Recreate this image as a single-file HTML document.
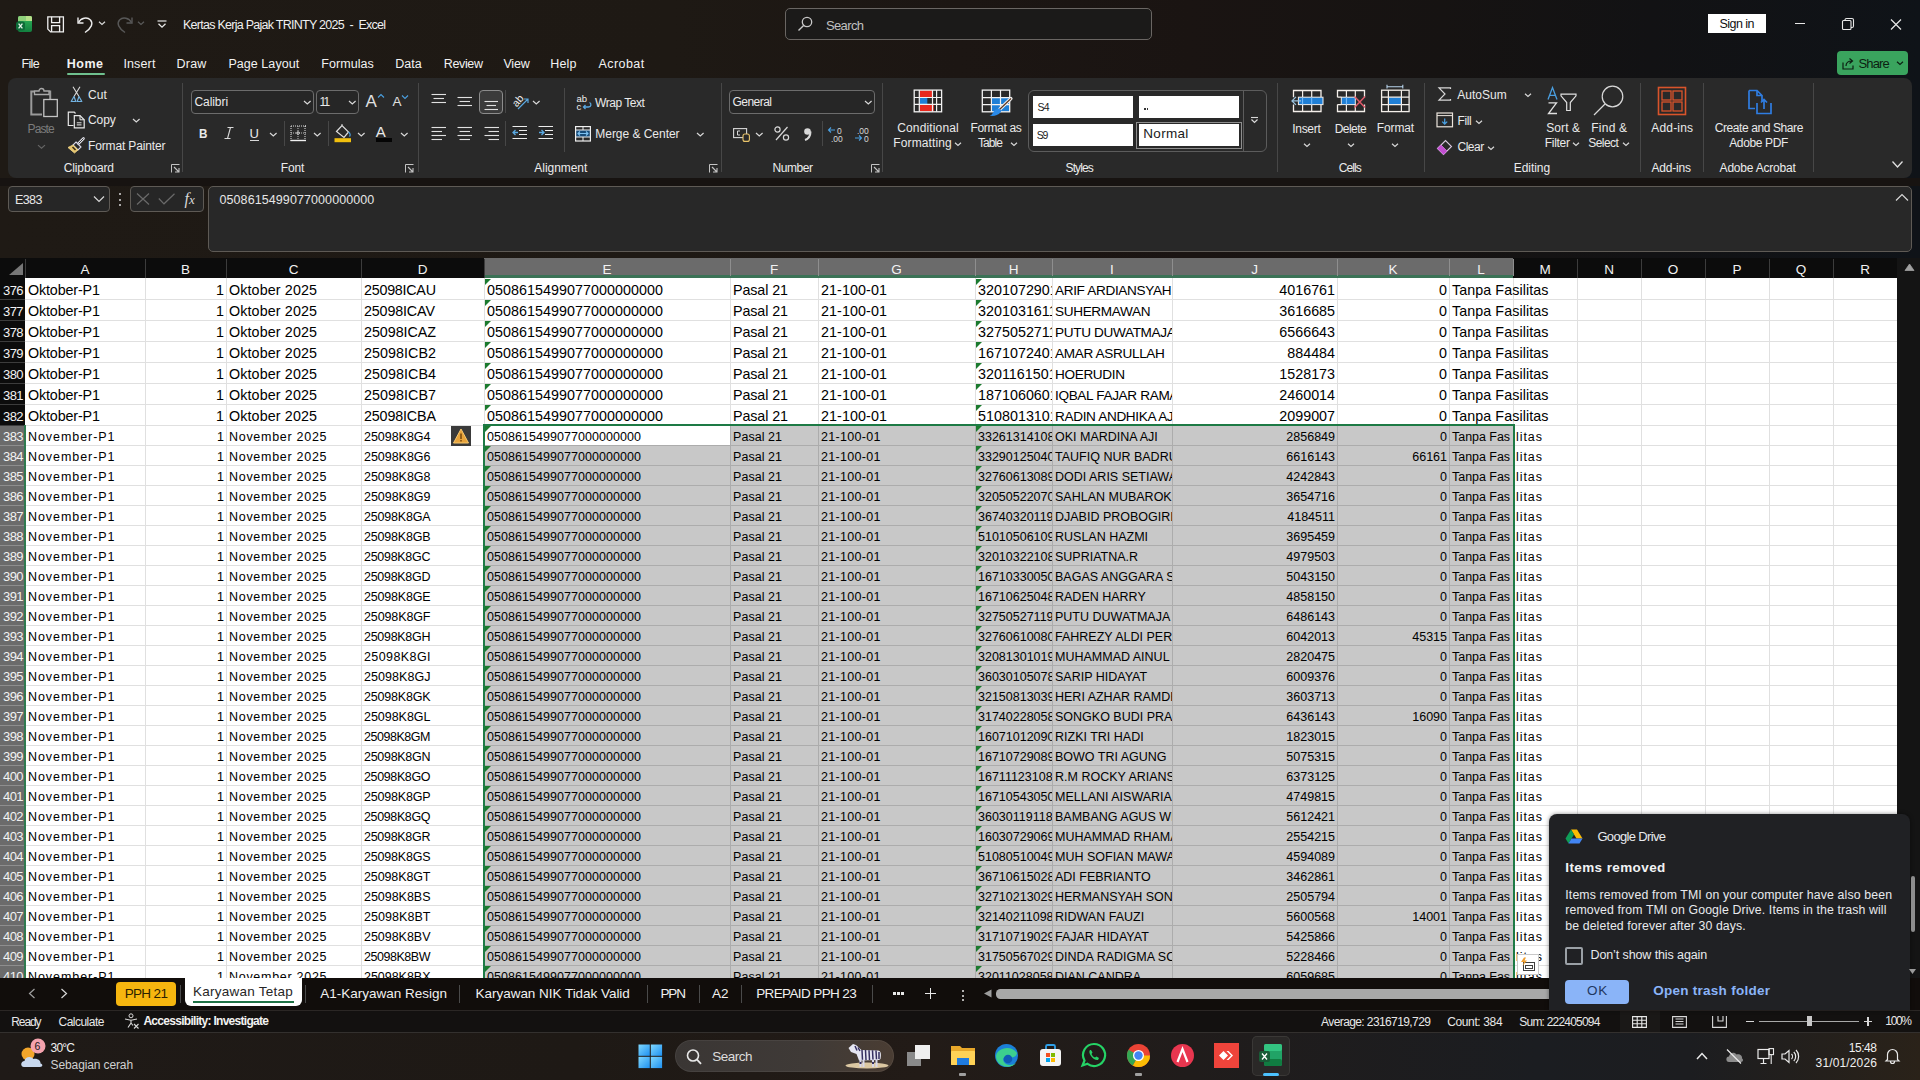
<!DOCTYPE html>
<html><head><meta charset="utf-8"><title>Excel</title><style>
html,body{margin:0;padding:0;width:1920px;height:1080px;overflow:hidden;background:#1c1715;font-family:"Liberation Sans", sans-serif;}
.r,.t,.s{position:absolute;}
.t{white-space:nowrap;}
svg.s{overflow:visible;}
</style></head><body>
<div class="r" style="left:0;top:0;width:1920px;height:258px;background:linear-gradient(90deg,#1f1a15 0%,#1e1914 35%,#1c1613 50%,#1a1412 62%,#161312 75%,#121214 86%,#0f1318 100%);"></div>
<svg class="s" style="left:16px;top:16px;" width="16" height="16" viewBox="0 0 16 16"><defs><linearGradient id="xg" x1="0" y1="0" x2="0" y2="1"><stop offset="0" stop-color="#2fb55a"/><stop offset="1" stop-color="#12803f"/></linearGradient></defs><rect x="2" y="0" width="14" height="16" rx="2" fill="url(#xg)"/><path d="M4 0 H14 A2 2 0 0 1 16 2 V5 H2 V2 A2 2 0 0 1 4 0 Z" fill="#8ed07a"/><path d="M10 0 H14 A2 2 0 0 1 16 2 V5 H10 Z" fill="#b6e08a"/><rect x="0" y="5.5" width="9" height="9" rx="2.5" fill="#0d6b38"/><path d="M2.6 7.6 L6.4 12.4 M6.4 7.6 L2.6 12.4" stroke="#e8f5ec" stroke-width="1.3"/></svg>
<svg class="s" style="left:47px;top:16px;" width="18" height="17" viewBox="0 0 18 17"><path d="M0.8 0.8 H16.4 V15.9 H3.6 L0.8 13.1 Z" fill="none" stroke="#f0f0f0" stroke-width="1.3"/><path d="M4.6 0.8 V6.6 H12.6 V0.8 M4.6 15.9 V9.6 H12.6 V15.9" fill="none" stroke="#f0f0f0" stroke-width="1.3"/></svg>
<svg class="s" style="left:76px;top:15px;" width="18" height="18" viewBox="0 0 18 18"><path d="M2 2.5 V8 H7.5" fill="none" stroke="#ececec" stroke-width="1.4"/><path d="M2.5 7.5 C5 3 11 1.5 14.5 5 C17.5 8.5 15.5 13 9 17.5" fill="none" stroke="#ececec" stroke-width="1.4"/></svg>
<svg class="s" style="left:98px;top:20px;" width="8" height="6" viewBox="0 0 8 6"><path d="M1 1.7999999999999998 L4 4.5 L7 1.7999999999999998" fill="none" stroke="#d8d8d8" stroke-width="1.2"/></svg>
<svg class="s" style="left:116px;top:15px;" width="18" height="18" viewBox="0 0 18 18"><path d="M16 2.5 V8 H10.5" fill="none" stroke="#585858" stroke-width="1.4"/><path d="M15.5 7.5 C13 3 7 1.5 3.5 5 C0.5 8.5 2.5 13 9 17.5" fill="none" stroke="#585858" stroke-width="1.4"/></svg>
<svg class="s" style="left:137px;top:20px;" width="8" height="6" viewBox="0 0 8 6"><path d="M1 1.7999999999999998 L4 4.5 L7 1.7999999999999998" fill="none" stroke="#5a5a5a" stroke-width="1.2"/></svg>
<svg class="s" style="left:156px;top:19px;" width="12" height="10" viewBox="0 0 12 10"><path d="M1.5 2 H10.5" stroke="#e8e8e8" stroke-width="1.2"/><path d="M2.5 4.8 L6 8.2 L9.5 4.8" fill="none" stroke="#e8e8e8" stroke-width="1.3"/></svg>
<div class="t" style="left:183.00px;top:18.92px;font-size:12.5px;line-height:12.5px;color:#f0f0f0;letter-spacing:-0.732px;">Kertas Kerja Pajak TRINTY 2025&nbsp; - &nbsp;Excel</div>
<div class="r" style="left:785px;top:8px;width:367px;height:32px;background:#1b1a19;border:1px solid #6a6663;border-radius:5px;box-sizing:border-box;"></div>
<svg class="s" style="left:797px;top:16px;" width="16" height="16" viewBox="0 0 16 16"><circle cx="10" cy="6" r="4.7" fill="none" stroke="#c8c8c8" stroke-width="1.3"/><path d="M6.6 9.4 L1.5 14.5" stroke="#c8c8c8" stroke-width="1.4"/></svg>
<div class="t" style="left:826.00px;top:18.50px;font-size:13px;line-height:13px;color:#c0c0c0;letter-spacing:-0.638px;">Search</div>
<div class="r" style="left:1708px;top:14px;width:58px;height:19px;background:#ffffff;"></div>
<div class="t" style="left:1436.73px;width:600px;text-align:center;top:18.42px;font-size:12.5px;line-height:12.5px;color:#111;letter-spacing:-0.537px;">Sign in</div>
<div class="r" style="left:1795px;top:23px;width:10px;height:1px;background:#e8e8e8;"></div>
<svg class="s" style="left:1842px;top:18px;" width="12" height="12" viewBox="0 0 12 12"><rect x="0.5" y="2.5" width="8.5" height="9" rx="1" fill="none" stroke="#e8e8e8" stroke-width="1.1"/><path d="M3 2.5 V2 A1.5 1.5 0 0 1 4.5 0.5 H10 A1.5 1.5 0 0 1 11.5 2 V8 A1.5 1.5 0 0 1 10 9.5 H9" fill="none" stroke="#e8e8e8" stroke-width="1.1"/></svg>
<svg class="s" style="left:1890px;top:19px;" width="12" height="11" viewBox="0 0 12 11"><path d="M1 0.5 L11 10.5 M11 0.5 L1 10.5" stroke="#e8e8e8" stroke-width="1.2"/></svg>
<div class="t" style="left:21.40px;top:58.22px;font-size:12.5px;line-height:12.5px;color:#f2f2f2;letter-spacing:-0.614px;">File</div>
<div class="t" style="left:66.70px;top:58.22px;font-size:12.5px;line-height:12.5px;color:#f2f2f2;font-weight:bold;letter-spacing:0.524px;">Home</div>
<div class="t" style="left:123.40px;top:58.22px;font-size:12.5px;line-height:12.5px;color:#f2f2f2;letter-spacing:0.148px;">Insert</div>
<div class="t" style="left:176.40px;top:58.22px;font-size:12.5px;line-height:12.5px;color:#f2f2f2;letter-spacing:0.277px;">Draw</div>
<div class="t" style="left:228.40px;top:58.22px;font-size:12.5px;line-height:12.5px;color:#f2f2f2;letter-spacing:0.060px;">Page Layout</div>
<div class="t" style="left:321.30px;top:58.22px;font-size:12.5px;line-height:12.5px;color:#f2f2f2;letter-spacing:0.044px;">Formulas</div>
<div class="t" style="left:395.30px;top:58.22px;font-size:12.5px;line-height:12.5px;color:#f2f2f2;letter-spacing:-0.035px;">Data</div>
<div class="t" style="left:443.70px;top:58.22px;font-size:12.5px;line-height:12.5px;color:#f2f2f2;letter-spacing:-0.337px;">Review</div>
<div class="t" style="left:503.40px;top:58.22px;font-size:12.5px;line-height:12.5px;color:#f2f2f2;letter-spacing:-0.198px;">View</div>
<div class="t" style="left:550.30px;top:58.22px;font-size:12.5px;line-height:12.5px;color:#f2f2f2;letter-spacing:0.164px;">Help</div>
<div class="t" style="left:598.50px;top:58.22px;font-size:12.5px;line-height:12.5px;color:#f2f2f2;letter-spacing:0.437px;">Acrobat</div>
<div class="r" style="left:67px;top:73px;width:38px;height:2px;background:#6fc08e;border-radius:1px;"></div>
<div class="r" style="left:1837px;top:51px;width:71px;height:24px;background:#3aa45e;border-radius:4px;"></div>
<svg class="s" style="left:1842px;top:57px;" width="14" height="13" viewBox="0 0 14 13"><path d="M1 5.5 V12 H11 V8.5" fill="none" stroke="#0c1f12" stroke-width="1.2"/><path d="M4 9 C4 5.5 6.5 4 10 4 M7.5 1.5 L10.5 4 L7.5 6.5" fill="none" stroke="#0c1f12" stroke-width="1.2"/></svg>
<div class="t" style="left:1858.50px;top:56.50px;font-size:13px;line-height:13px;color:#0c1f12;letter-spacing:-0.847px;">Share</div>
<svg class="s" style="left:1896px;top:60px;" width="8" height="6" viewBox="0 0 8 6"><path d="M1 1.7999999999999998 L4 4.5 L7 1.7999999999999998" fill="none" stroke="#0c1f12" stroke-width="1.2"/></svg>
<div class="r" style="left:0px;top:178px;width:1920px;height:8px;background:#171311;"></div>
<div class="r" style="left:8px;top:78px;width:1904px;height:100px;background:#292929;border-radius:8px;"></div>
<div class="r" style="left:182px;top:83px;width:1px;height:89px;background:#474747;"></div>
<div class="r" style="left:418px;top:83px;width:1px;height:89px;background:#474747;"></div>
<div class="r" style="left:721px;top:83px;width:1px;height:89px;background:#474747;"></div>
<div class="r" style="left:882px;top:83px;width:1px;height:89px;background:#474747;"></div>
<div class="r" style="left:1277px;top:83px;width:1px;height:89px;background:#474747;"></div>
<div class="r" style="left:1424px;top:83px;width:1px;height:89px;background:#474747;"></div>
<div class="r" style="left:1640px;top:83px;width:1px;height:89px;background:#474747;"></div>
<div class="r" style="left:1703px;top:83px;width:1px;height:89px;background:#474747;"></div>
<div class="r" style="left:1813px;top:83px;width:1px;height:89px;background:#474747;"></div>
<div class="t" style="left:63.80px;top:161.54px;font-size:12px;line-height:12px;color:#ececec;letter-spacing:-0.145px;">Clipboard</div>
<div class="t" style="left:280.80px;top:161.54px;font-size:12px;line-height:12px;color:#ececec;letter-spacing:-0.171px;">Font</div>
<div class="t" style="left:534.30px;top:161.54px;font-size:12px;line-height:12px;color:#ececec;letter-spacing:-0.045px;">Alignment</div>
<div class="t" style="left:772.60px;top:161.54px;font-size:12px;line-height:12px;color:#ececec;letter-spacing:-0.436px;">Number</div>
<div class="t" style="left:1065.50px;top:161.54px;font-size:12px;line-height:12px;color:#ececec;letter-spacing:-0.876px;">Styles</div>
<div class="t" style="left:1338.80px;top:161.54px;font-size:12px;line-height:12px;color:#ececec;letter-spacing:-0.918px;">Cells</div>
<div class="t" style="left:1513.80px;top:161.54px;font-size:12px;line-height:12px;color:#ececec;letter-spacing:-0.065px;">Editing</div>
<div class="t" style="left:1651.50px;top:161.54px;font-size:12px;line-height:12px;color:#ececec;letter-spacing:-0.198px;">Add-ins</div>
<div class="t" style="left:1719.60px;top:161.54px;font-size:12px;line-height:12px;color:#ececec;letter-spacing:-0.216px;">Adobe Acrobat</div>
<svg class="s" style="left:171px;top:164px;" width="9" height="9" viewBox="0 0 9 9"><path d="M0.5 8.5 V0.5 H8.5" fill="none" stroke="#c4c4c4" stroke-width="1"/><path d="M3 3 L8 8 M4 8 H8 V4" fill="none" stroke="#c4c4c4" stroke-width="1.1"/></svg>
<svg class="s" style="left:405px;top:164px;" width="9" height="9" viewBox="0 0 9 9"><path d="M0.5 8.5 V0.5 H8.5" fill="none" stroke="#c4c4c4" stroke-width="1"/><path d="M3 3 L8 8 M4 8 H8 V4" fill="none" stroke="#c4c4c4" stroke-width="1.1"/></svg>
<svg class="s" style="left:709px;top:164px;" width="9" height="9" viewBox="0 0 9 9"><path d="M0.5 8.5 V0.5 H8.5" fill="none" stroke="#c4c4c4" stroke-width="1"/><path d="M3 3 L8 8 M4 8 H8 V4" fill="none" stroke="#c4c4c4" stroke-width="1.1"/></svg>
<svg class="s" style="left:871px;top:164px;" width="9" height="9" viewBox="0 0 9 9"><path d="M0.5 8.5 V0.5 H8.5" fill="none" stroke="#c4c4c4" stroke-width="1"/><path d="M3 3 L8 8 M4 8 H8 V4" fill="none" stroke="#c4c4c4" stroke-width="1.1"/></svg>
<svg class="s" style="left:1892px;top:161px;" width="11" height="7" viewBox="0 0 11 7"><path d="M0.5 0.5 L5.5 6 L10.5 0.5" fill="none" stroke="#e0e0e0" stroke-width="1.3"/></svg>
<svg class="s" style="left:29px;top:86px;" width="30" height="32" viewBox="0 0 30 32"><path d="M5 5.5 H2.3 V28.5 H13" fill="none" stroke="#9a9a9a" stroke-width="2"/><path d="M20 5.5 H21.2 V13" fill="none" stroke="#9a9a9a" stroke-width="2"/><path d="M5.5 8.5 V5 H10 A2.5 2.5 0 0 1 15 5 H20 V8.5 Z" fill="none" stroke="#a8a8a8" stroke-width="1.3"/><rect x="14.8" y="13.5" width="13.5" height="17" fill="none" stroke="#c4c4c4" stroke-width="1.3"/></svg>
<div class="t" style="left:27.50px;top:122.64px;font-size:12px;line-height:12px;color:#7c7c7c;letter-spacing:-0.871px;">Paste</div>
<svg class="s" style="left:36.5px;top:142.5px;" width="9.0" height="7.0" viewBox="0 0 9.0 7.0"><path d="M1 2.1 L4.5 5.25 L8.0 2.1" fill="none" stroke="#666" stroke-width="1.2"/></svg>
<svg class="s" style="left:70px;top:86px;" width="13" height="18" viewBox="0 0 13 18"><path d="M3 0.8 L9 10.5 M10 0.8 L4 10.5" stroke="#dcdcdc" stroke-width="1.1"/><path d="M4 10.5 L1.2 15.5 H5.8 Z M9 10.5 L11.8 15.5 H7.2 Z" fill="none" stroke="#72b2e0" stroke-width="1.2" stroke-linejoin="round"/></svg>
<div class="t" style="left:88.00px;top:88.94px;font-size:12px;line-height:12px;color:#eaeaea;letter-spacing:0.063px;">Cut</div>
<svg class="s" style="left:67px;top:111px;" width="19" height="18" viewBox="0 0 19 18"><path d="M6.5 14.5 H1.3 V1.2 H7.3 L8.5 2.5" fill="none" stroke="#e8e8e8" stroke-width="1.2"/><path d="M7.3 4.6 H13 L17.2 8.8 V16.8 H7.3 Z" fill="none" stroke="#e8e8e8" stroke-width="1.2"/><path d="M13 4.6 V8.8 H17.2" fill="none" stroke="#e8e8e8" stroke-width="1"/><path d="M9.8 11.8 H14.5 M9.8 13.9 H14.5" stroke="#e8e8e8" stroke-width="1"/></svg>
<div class="t" style="left:88.00px;top:114.24px;font-size:12px;line-height:12px;color:#eaeaea;letter-spacing:-0.105px;">Copy</div>
<svg class="s" style="left:132.2px;top:117.2px;" width="8.6" height="6.6" viewBox="0 0 8.6 6.6"><path d="M1 1.9799999999999998 L4.3 4.949999999999999 L7.6 1.9799999999999998" fill="none" stroke="#d8d8d8" stroke-width="1.2"/></svg>
<svg class="s" style="left:67px;top:137px;" width="18" height="17" viewBox="0 0 18 17"><path d="M16.5 1.5 L11.5 6.5" stroke="#e0e0e8" stroke-width="2.6" stroke-linecap="round"/><path d="M16.5 1.5 L11.5 6.5" stroke="#2a2a2a" stroke-width="0.9"/><path d="M9 5 L14 10 L11 13 L6 8 Z" fill="none" stroke="#d8d8e8" stroke-width="1.1"/><path d="M6 8 L11 13 L7.5 16 L1 10.5 Z" fill="#e6c46e" stroke="#f2d888" stroke-width="0.8"/><path d="M5.5 10 L8.5 13" stroke="#3a2e14" stroke-width="1.6"/></svg>
<div class="t" style="left:88.00px;top:140.44px;font-size:12px;line-height:12px;color:#eaeaea;letter-spacing:-0.151px;">Format Painter</div>
<div class="r" style="left:191px;top:90px;width:123px;height:24px;background:#262626;border:1px solid #6c6c6c;border-radius:4px;box-sizing:border-box;"></div>
<div class="t" style="left:194.40px;top:96.14px;font-size:12px;line-height:12px;color:#eaeaea;letter-spacing:-0.051px;">Calibri</div>
<svg class="s" style="left:303.2px;top:99.2px;" width="8.6" height="6.6" viewBox="0 0 8.6 6.6"><path d="M1 1.9799999999999998 L4.3 4.949999999999999 L7.6 1.9799999999999998" fill="none" stroke="#d8d8d8" stroke-width="1.2"/></svg>
<div class="r" style="left:316px;top:90px;width:43px;height:24px;background:#262626;border:1px solid #6c6c6c;border-radius:4px;box-sizing:border-box;"></div>
<div class="t" style="left:319.50px;top:96.14px;font-size:12px;line-height:12px;color:#eaeaea;letter-spacing:-1.848px;">11</div>
<svg class="s" style="left:347.7px;top:99.2px;" width="8.6" height="6.6" viewBox="0 0 8.6 6.6"><path d="M1 1.9799999999999998 L4.3 4.949999999999999 L7.6 1.9799999999999998" fill="none" stroke="#d8d8d8" stroke-width="1.2"/></svg>
<div class="t" style="left:365.50px;top:92.51px;font-size:17px;line-height:17px;color:#e0e0e0;">A</div>
<svg class="s" style="left:377px;top:93px;" width="8" height="6" viewBox="0 0 8 6"><path d="M1 4.5 L4 1.5 L7 4.5" fill="none" stroke="#4a9fe0" stroke-width="1.1"/></svg>
<div class="t" style="left:392.50px;top:95.47px;font-size:13.5px;line-height:13.5px;color:#e0e0e0;">A</div>
<svg class="s" style="left:401px;top:94px;" width="8" height="6" viewBox="0 0 8 6"><path d="M1 1.5 L4 4.5 L7 1.5" fill="none" stroke="#4a9fe0" stroke-width="1.1"/></svg>
<div class="t" style="left:199.30px;top:127.10px;font-size:13px;line-height:13px;color:#eaeaea;font-weight:bold;transform:scaleX(0.9);transform-origin:left;">B</div>
<svg class="s" style="left:223px;top:127px;" width="12" height="12" viewBox="0 0 12 12"><path d="M4.5 0.5 H10.5 M1.5 11.5 H7.5 M7.5 0.5 L4.5 11.5" stroke="#d8d8d8" stroke-width="1.1"/></svg>
<div class="t" style="left:249.50px;top:127.00px;font-size:13px;line-height:13px;color:#eaeaea;">U</div>
<div class="r" style="left:250px;top:139.5px;width:9px;height:1px;background:#d8d8d8;"></div>
<svg class="s" style="left:269.2px;top:130.7px;" width="8.6" height="6.6" viewBox="0 0 8.6 6.6"><path d="M1 1.9799999999999998 L4.3 4.949999999999999 L7.6 1.9799999999999998" fill="none" stroke="#d8d8d8" stroke-width="1.2"/></svg>
<div class="r" style="left:284px;top:121px;width:1px;height:25px;background:#474747;"></div>
<svg class="s" style="left:290px;top:125px;" width="17" height="17" viewBox="0 0 17 17"><rect x="1" y="0.5" width="1" height="1" fill="#e0e0e0"/><rect x="0.5" y="1" width="1" height="1" fill="#e0e0e0"/><rect x="14.5" y="1" width="1" height="1" fill="#e0e0e0"/><rect x="1" y="7.5" width="1" height="1" fill="#bdbdbd"/><rect x="7.5" y="1" width="1" height="1" fill="#bdbdbd"/><rect x="3" y="0.5" width="1" height="1" fill="#e0e0e0"/><rect x="0.5" y="3" width="1" height="1" fill="#e0e0e0"/><rect x="14.5" y="3" width="1" height="1" fill="#e0e0e0"/><rect x="3" y="7.5" width="1" height="1" fill="#bdbdbd"/><rect x="7.5" y="3" width="1" height="1" fill="#bdbdbd"/><rect x="5" y="0.5" width="1" height="1" fill="#e0e0e0"/><rect x="0.5" y="5" width="1" height="1" fill="#e0e0e0"/><rect x="14.5" y="5" width="1" height="1" fill="#e0e0e0"/><rect x="5" y="7.5" width="1" height="1" fill="#bdbdbd"/><rect x="7.5" y="5" width="1" height="1" fill="#bdbdbd"/><rect x="7" y="0.5" width="1" height="1" fill="#e0e0e0"/><rect x="0.5" y="7" width="1" height="1" fill="#e0e0e0"/><rect x="14.5" y="7" width="1" height="1" fill="#e0e0e0"/><rect x="7" y="7.5" width="1" height="1" fill="#bdbdbd"/><rect x="7.5" y="7" width="1" height="1" fill="#bdbdbd"/><rect x="9" y="0.5" width="1" height="1" fill="#e0e0e0"/><rect x="0.5" y="9" width="1" height="1" fill="#e0e0e0"/><rect x="14.5" y="9" width="1" height="1" fill="#e0e0e0"/><rect x="9" y="7.5" width="1" height="1" fill="#bdbdbd"/><rect x="7.5" y="9" width="1" height="1" fill="#bdbdbd"/><rect x="11" y="0.5" width="1" height="1" fill="#e0e0e0"/><rect x="0.5" y="11" width="1" height="1" fill="#e0e0e0"/><rect x="14.5" y="11" width="1" height="1" fill="#e0e0e0"/><rect x="11" y="7.5" width="1" height="1" fill="#bdbdbd"/><rect x="7.5" y="11" width="1" height="1" fill="#bdbdbd"/><rect x="13" y="0.5" width="1" height="1" fill="#e0e0e0"/><rect x="0.5" y="13" width="1" height="1" fill="#e0e0e0"/><rect x="14.5" y="13" width="1" height="1" fill="#e0e0e0"/><rect x="13" y="7.5" width="1" height="1" fill="#bdbdbd"/><rect x="7.5" y="13" width="1" height="1" fill="#bdbdbd"/><rect x="15" y="0.5" width="1" height="1" fill="#e0e0e0"/><rect x="0.5" y="15" width="1" height="1" fill="#e0e0e0"/><rect x="14.5" y="15" width="1" height="1" fill="#e0e0e0"/><rect x="15" y="7.5" width="1" height="1" fill="#bdbdbd"/><rect x="7.5" y="15" width="1" height="1" fill="#bdbdbd"/><rect x="15" y="0.5" width="1" height="1" fill="#e0e0e0"/><circle cx="8" cy="8" r="1.3" fill="none" stroke="#e0e0e0" stroke-width="0.8"/><path d="M0.5 15.5 H16" stroke="#f0f0f0" stroke-width="1.4"/></svg>
<svg class="s" style="left:312.7px;top:130.7px;" width="8.6" height="6.6" viewBox="0 0 8.6 6.6"><path d="M1 1.9799999999999998 L4.3 4.949999999999999 L7.6 1.9799999999999998" fill="none" stroke="#d8d8d8" stroke-width="1.2"/></svg>
<div class="r" style="left:328px;top:121px;width:1px;height:25px;background:#474747;"></div>
<svg class="s" style="left:334px;top:123px;" width="19" height="20" viewBox="0 0 19 20"><path d="M2.5 8.5 L8 2.5 L14.5 9 L10 14.5 Z" fill="none" stroke="#e0e0e0" stroke-width="1.2"/><path d="M8 2.5 V1" stroke="#e0e0e0" stroke-width="1"/><path d="M14.5 9 C16.5 10.5 16.5 12.5 15.5 13.5" fill="none" stroke="#4a9fe0" stroke-width="1.2"/><rect x="0.5" y="15.2" width="16.5" height="4" fill="#f2c00e"/></svg>
<svg class="s" style="left:356.7px;top:130.7px;" width="8.6" height="6.6" viewBox="0 0 8.6 6.6"><path d="M1 1.9799999999999998 L4.3 4.949999999999999 L7.6 1.9799999999999998" fill="none" stroke="#d8d8d8" stroke-width="1.2"/></svg>
<div class="t" style="left:375.80px;top:124.10px;font-size:15px;line-height:15px;color:#eaeaea;">A</div>
<div class="r" style="left:376px;top:138px;width:16px;height:4px;background:#050505;"></div>
<svg class="s" style="left:399.7px;top:130.7px;" width="8.6" height="6.6" viewBox="0 0 8.6 6.6"><path d="M1 1.9799999999999998 L4.3 4.949999999999999 L7.6 1.9799999999999998" fill="none" stroke="#d8d8d8" stroke-width="1.2"/></svg>
<svg class="s" style="left:431px;top:94px;" width="18" height="18" viewBox="0 0 18 18"><path d="M0.5 0.5 H15" stroke="#e0e0e0" stroke-width="1.1"/><path d="M2.5 4.5 H13" stroke="#e0e0e0" stroke-width="1.1"/><path d="M0.5 8.5 H15" stroke="#e0e0e0" stroke-width="1.1"/></svg>
<svg class="s" style="left:457px;top:96px;" width="18" height="18" viewBox="0 0 18 18"><path d="M0.5 1.5 H15" stroke="#e0e0e0" stroke-width="1.1"/><path d="M2.5 5.5 H13" stroke="#e0e0e0" stroke-width="1.1"/><path d="M0.5 9.5 H15" stroke="#e0e0e0" stroke-width="1.1"/></svg>
<div class="r" style="left:479px;top:90px;width:24px;height:24px;background:#3b3b3b;border:1px solid #8c8c8c;border-radius:4px;box-sizing:border-box;"></div>
<svg class="s" style="left:484px;top:100px;" width="18" height="18" viewBox="0 0 18 18"><path d="M0.5 1.5 H14" stroke="#e0e0e0" stroke-width="1.1"/><path d="M2.5 5.5 H12" stroke="#e0e0e0" stroke-width="1.1"/><path d="M0.5 9.5 H14" stroke="#e0e0e0" stroke-width="1.1"/></svg>
<div class="r" style="left:505px;top:90px;width:1px;height:23px;background:#474747;"></div>
<svg class="s" style="left:511px;top:92px;" width="19" height="19" viewBox="0 0 19 19"><text x="1" y="13" font-size="10.5" fill="#f0f0f0" font-family="Liberation Sans" transform="rotate(-50 6 9)">ab</text><path d="M7 17 L17 7 M13 7 H17 V11" fill="none" stroke="#5aa8e0" stroke-width="1.2"/></svg>
<svg class="s" style="left:532.2px;top:99.2px;" width="8.6" height="6.6" viewBox="0 0 8.6 6.6"><path d="M1 1.9799999999999998 L4.3 4.949999999999999 L7.6 1.9799999999999998" fill="none" stroke="#d8d8d8" stroke-width="1.2"/></svg>
<svg class="s" style="left:431px;top:127px;" width="18" height="18" viewBox="0 0 18 18"><path d="M0.5 0.5 H15" stroke="#e0e0e0" stroke-width="1.1"/><path d="M0.5 4.5 H11" stroke="#e0e0e0" stroke-width="1.1"/><path d="M0.5 8.5 H15" stroke="#e0e0e0" stroke-width="1.1"/><path d="M0.5 12.5 H11" stroke="#e0e0e0" stroke-width="1.1"/></svg>
<svg class="s" style="left:457px;top:127px;" width="18" height="18" viewBox="0 0 18 18"><path d="M0.5 0.5 H15" stroke="#e0e0e0" stroke-width="1.1"/><path d="M2.5 4.5 H13" stroke="#e0e0e0" stroke-width="1.1"/><path d="M0.5 8.5 H15" stroke="#e0e0e0" stroke-width="1.1"/><path d="M2.5 12.5 H13" stroke="#e0e0e0" stroke-width="1.1"/></svg>
<svg class="s" style="left:484px;top:127px;" width="18" height="18" viewBox="0 0 18 18"><path d="M0.5 0.5 H15" stroke="#e0e0e0" stroke-width="1.1"/><path d="M4.5 4.5 H15" stroke="#e0e0e0" stroke-width="1.1"/><path d="M0.5 8.5 H15" stroke="#e0e0e0" stroke-width="1.1"/><path d="M4.5 12.5 H15" stroke="#e0e0e0" stroke-width="1.1"/></svg>
<div class="r" style="left:505px;top:121px;width:1px;height:25px;background:#474747;"></div>
<svg class="s" style="left:512px;top:126px;" width="16" height="15" viewBox="0 0 16 15"><path d="M0.5 0.5 H15 M7 4.5 H15 M7 8.5 H15 M0.5 12.5 H15" stroke="#ececec" stroke-width="1.1"/><path d="M6 6.5 H1 M3.5 4 L1 6.5 L3.5 9" fill="none" stroke="#5aa8e0" stroke-width="1.3"/></svg>
<svg class="s" style="left:538px;top:126px;" width="16" height="15" viewBox="0 0 16 15"><path d="M0.5 0.5 H15 M7 4.5 H15 M7 8.5 H15 M0.5 12.5 H15" stroke="#ececec" stroke-width="1.1"/><path d="M1 6.5 H6 M3.5 4 L6 6.5 L3.5 9" fill="none" stroke="#5aa8e0" stroke-width="1.3"/></svg>
<div class="r" style="left:564px;top:88px;width:1px;height:64px;background:#474747;"></div>
<svg class="s" style="left:576px;top:93px;" width="18" height="18" viewBox="0 0 18 18"><text x="0.5" y="8.5" font-size="9.5" fill="#f0f0f0" font-family="Liberation Sans">ab</text><text x="0.5" y="16.5" font-size="9.5" fill="#f0f0f0" font-family="Liberation Sans">c</text><path d="M13.5 9.5 C15.5 10.5 15.5 14 12.5 14 H7.5 M9.5 12 L7.5 14 L9.5 16" fill="none" stroke="#5aa8e0" stroke-width="1.3"/></svg>
<div class="t" style="left:595.00px;top:96.54px;font-size:12px;line-height:12px;color:#eaeaea;letter-spacing:-0.455px;">Wrap Text</div>
<svg class="s" style="left:575px;top:126px;" width="16" height="16" viewBox="0 0 16 16"><rect x="0.6" y="4" width="14.8" height="7" fill="#164a78"/><rect x="0.6" y="0.6" width="14.8" height="14.4" fill="none" stroke="#f0f0f0" stroke-width="1.2"/><path d="M0.6 4 H15.4 M0.6 11 H15.4 M8 0.6 V4 M8 11 V15" stroke="#f0f0f0" stroke-width="1"/><path d="M3 7.5 H13 M5 5.5 L3 7.5 L5 9.5 M11 5.5 L13 7.5 L11 9.5" fill="none" stroke="#7cc0f0" stroke-width="1.1"/></svg>
<div class="t" style="left:595.30px;top:128.14px;font-size:12px;line-height:12px;color:#eaeaea;letter-spacing:-0.031px;">Merge &amp; Center</div>
<svg class="s" style="left:696.2px;top:130.7px;" width="8.6" height="6.6" viewBox="0 0 8.6 6.6"><path d="M1 1.9799999999999998 L4.3 4.949999999999999 L7.6 1.9799999999999998" fill="none" stroke="#d8d8d8" stroke-width="1.2"/></svg>
<div class="r" style="left:729px;top:90px;width:146px;height:24px;background:#262626;border:1px solid #6c6c6c;border-radius:4px;box-sizing:border-box;"></div>
<div class="t" style="left:732.50px;top:95.64px;font-size:12px;line-height:12px;color:#eaeaea;letter-spacing:-0.532px;">General</div>
<svg class="s" style="left:864.2px;top:99.2px;" width="8.6" height="6.6" viewBox="0 0 8.6 6.6"><path d="M1 1.9799999999999998 L4.3 4.949999999999999 L7.6 1.9799999999999998" fill="none" stroke="#d8d8d8" stroke-width="1.2"/></svg>
<svg class="s" style="left:733px;top:128px;" width="17" height="14" viewBox="0 0 17 14"><rect x="0.6" y="0.6" width="13" height="9" fill="none" stroke="#d8d8d8" stroke-width="1.1"/><path d="M7 3 H4.5 V7 H7" fill="none" stroke="#d8d8d8" stroke-width="1"/><rect x="10" y="6" width="6.4" height="7.4" rx="2" fill="#292929" stroke="#e9c46a" stroke-width="1.1"/></svg>
<svg class="s" style="left:755.2px;top:130.7px;" width="8.6" height="6.6" viewBox="0 0 8.6 6.6"><path d="M1 1.9799999999999998 L4.3 4.949999999999999 L7.6 1.9799999999999998" fill="none" stroke="#d8d8d8" stroke-width="1.2"/></svg>
<svg class="s" style="left:774px;top:126px;" width="16" height="15" viewBox="0 0 16 15"><circle cx="3.5" cy="3.5" r="2.6" fill="none" stroke="#d8d8d8" stroke-width="1.2"/><circle cx="12" cy="11.5" r="2.6" fill="none" stroke="#d8d8d8" stroke-width="1.2"/><path d="M13.5 1 L2 14" stroke="#d8d8d8" stroke-width="1.2"/></svg>
<svg class="s" style="left:803px;top:127px;" width="10" height="14" viewBox="0 0 10 14"><circle cx="4.5" cy="4.5" r="3.3" fill="#d8d8d8"/><path d="M7.5 4.5 C7.5 9 5 12 2 13" fill="none" stroke="#d8d8d8" stroke-width="2"/></svg>
<div class="r" style="left:822px;top:121px;width:1px;height:25px;background:#474747;"></div>
<svg class="s" style="left:827px;top:125px;" width="18" height="17" viewBox="0 0 18 17"><path d="M8 5 H1.5 M4 2.5 L1.5 5 L4 7.5" fill="none" stroke="#4a9fe0" stroke-width="1.1"/><text x="10" y="8.5" font-size="8.5" fill="#d8d8d8" font-family="Liberation Sans">0</text><text x="4" y="16.5" font-size="8.5" fill="#d8d8d8" font-family="Liberation Sans">.00</text></svg>
<svg class="s" style="left:853px;top:125px;" width="18" height="17" viewBox="0 0 18 17"><text x="4" y="8.5" font-size="8.5" fill="#d8d8d8" font-family="Liberation Sans">.00</text><path d="M2 13 H8.5 M6 10.5 L8.5 13 L6 15.5" fill="none" stroke="#4a9fe0" stroke-width="1.1"/><text x="11" y="16.5" font-size="8.5" fill="#d8d8d8" font-family="Liberation Sans">0</text></svg>
<svg class="s" style="left:913px;top:89px;" width="30" height="24" viewBox="0 0 30 24"><rect x="6.3" y="1.4" width="13.2" height="7" fill="#e8281e"/><rect x="6.3" y="8.5" width="8" height="6.8" fill="#1f7fd6"/><rect x="6.3" y="15.3" width="14.5" height="7" fill="#e8281e"/><rect x="1.2" y="1.1" width="27.4" height="21.7" fill="none" stroke="#f2f2f2" stroke-width="1.3"/><path d="M1.2 8.5 H28.6 M1.2 15.3 H28.6 M6.3 1.1 V22.8 M19.5 1.1 V22.8 M23.6 1.1 V22.8" stroke="#f2f2f2" stroke-width="1.2"/></svg>
<div class="t" style="left:897.20px;top:121.84px;font-size:12px;line-height:12px;color:#eaeaea;letter-spacing:0.146px;">Conditional</div>
<div class="t" style="left:893.30px;top:137.34px;font-size:12px;line-height:12px;color:#eaeaea;letter-spacing:0.116px;">Formatting</div>
<svg class="s" style="left:954px;top:141px;" width="8" height="6" viewBox="0 0 8 6"><path d="M1 1.7999999999999998 L4 4.5 L7 1.7999999999999998" fill="none" stroke="#d8d8d8" stroke-width="1.2"/></svg>
<svg class="s" style="left:981px;top:89px;" width="34" height="29" viewBox="0 0 34 29"><rect x="10.4" y="8.6" width="18.3" height="14.2" fill="#1f7fd6"/><rect x="1.3" y="1.1" width="27.4" height="21.7" fill="none" stroke="#f2f2f2" stroke-width="1.3"/><path d="M1.3 8.6 H28.7 M1.3 15.7 H28.7 M10.4 1.1 V22.8 M19.5 1.1 V22.8" stroke="#f2f2f2" stroke-width="1.2"/><path d="M30 9.5 L18.5 20.5" stroke="#f2f2f2" stroke-width="3.2" stroke-linecap="round"/><path d="M30 9.5 L18.5 20.5" stroke="#5a3520" stroke-width="1.2"/><path d="M18.5 19.5 C15 19.5 12.5 22 11.5 24.5 C11 25.8 9.5 26.5 8.5 26.5 C12 27.5 17 26.5 19.5 23.5 C20.5 22.3 20.3 20.8 18.5 19.5 Z" fill="#2a8ae8"/></svg>
<div class="t" style="left:970.50px;top:121.84px;font-size:12px;line-height:12px;color:#eaeaea;letter-spacing:-0.351px;">Format as</div>
<div class="t" style="left:978.00px;top:137.34px;font-size:12px;line-height:12px;color:#eaeaea;letter-spacing:-0.954px;">Table</div>
<svg class="s" style="left:1009.5px;top:141px;" width="8" height="6" viewBox="0 0 8 6"><path d="M1 1.7999999999999998 L4 4.5 L7 1.7999999999999998" fill="none" stroke="#d8d8d8" stroke-width="1.2"/></svg>
<div class="r" style="left:1028px;top:90px;width:239px;height:62px;background:transparent;border:1px solid #5c5c5c;border-radius:6px;box-sizing:border-box;"></div>
<div class="r" style="left:1243px;top:90px;width:1px;height:62px;background:#5c5c5c;"></div>
<div class="r" style="left:1033px;top:96px;width:100px;height:22px;background:#ffffff;"></div>
<div class="t" style="left:1037.50px;top:101.91px;font-size:10.5px;line-height:10.5px;color:#1a1a1a;letter-spacing:-0.643px;">S4</div>
<div class="r" style="left:1139px;top:96px;width:100px;height:22px;background:#ffffff;"></div>
<div class="r" style="left:1144px;top:108px;width:1.5px;height:2px;background:#333;"></div>
<div class="r" style="left:1146.5px;top:108px;width:1.5px;height:2px;background:#333;"></div>
<div class="r" style="left:1033px;top:124px;width:100px;height:22px;background:#ffffff;"></div>
<div class="t" style="left:1036.70px;top:129.91px;font-size:10.5px;line-height:10.5px;color:#1a1a1a;letter-spacing:-1.243px;">S9</div>
<div class="r" style="left:1136px;top:121.5px;width:106px;height:27px;background:transparent;border:1px solid #8e8e8e;box-sizing:border-box;"></div>
<div class="r" style="left:1139px;top:124px;width:100px;height:22px;background:#ffffff;"></div>
<div class="t" style="left:1143.30px;top:127.37px;font-size:13.5px;line-height:13.5px;color:#1a1a1a;letter-spacing:0.299px;">Normal</div>
<svg class="s" style="left:1250px;top:117px;" width="9" height="7" viewBox="0 0 9 7"><path d="M1 0.5 H8" stroke="#d8d8d8" stroke-width="1.1"/><path d="M1.5 2.5 L4.5 5.5 L7.5 2.5" fill="none" stroke="#d8d8d8" stroke-width="1.2"/></svg>
<svg class="s" style="left:1292px;top:89px;" width="33" height="24" viewBox="0 0 33 24"><path d="M1.5 8.2 V1.5 H29 V8.2 M1.5 15.6 V22.5 H29 V15.6" fill="none" stroke="#f4efea" stroke-width="1.3"/><path d="M10.6 1.5 V8.2 M19.7 1.5 V8.2 M10.6 15.6 V22.5 M19.7 15.6 V22.5" stroke="#f4efea" stroke-width="1.2"/><rect x="6.4" y="8.2" width="24.6" height="7.4" fill="#1f7fd6" stroke="#f4efea" stroke-width="1"/><path d="M10.6 8.2 V15.6 M19.7 8.2 V15.6" stroke="#7cc0ff" stroke-width="1"/><path d="M9 11.9 H0 M4 7.9 L0 11.9 L4 15.9" fill="none" stroke="#9cc4e0" stroke-width="1.3"/></svg>
<div class="t" style="left:1292.20px;top:122.84px;font-size:12px;line-height:12px;color:#eaeaea;letter-spacing:-0.282px;">Insert</div>
<svg class="s" style="left:1302.5px;top:141.5px;" width="8" height="6" viewBox="0 0 8 6"><path d="M1 1.7999999999999998 L4 4.5 L7 1.7999999999999998" fill="none" stroke="#d8d8d8" stroke-width="1.2"/></svg>
<svg class="s" style="left:1336px;top:89px;" width="32" height="24" viewBox="0 0 32 24"><path d="M1.5 8.2 V1.5 H28.5 V8.2 M1.5 15.6 V22.5 H28.5 V15.6" fill="none" stroke="#f4efea" stroke-width="1.3"/><path d="M10.4 1.5 V8.2 M19.3 1.5 V8.2 M10.4 15.6 V22.5 M19.3 15.6 V22.5" stroke="#f4efea" stroke-width="1.2"/><path d="M1.5 8.2 H5.3 M1.5 15.6 H5.3" stroke="#f4efea" stroke-width="1.2"/><rect x="5.3" y="8.2" width="14" height="7.4" fill="#1f7fd6" stroke="#f4efea" stroke-width="1"/><path d="M10.4 8.2 V15.6" stroke="#7cc0ff" stroke-width="1"/><path d="M18.5 7.5 L29 18.5 M29 7.5 L18.5 18.5" stroke="#e05a6a" stroke-width="1.5"/></svg>
<div class="t" style="left:1334.70px;top:122.84px;font-size:12px;line-height:12px;color:#eaeaea;letter-spacing:-0.537px;">Delete</div>
<svg class="s" style="left:1346.5px;top:141.5px;" width="8" height="6" viewBox="0 0 8 6"><path d="M1 1.7999999999999998 L4 4.5 L7 1.7999999999999998" fill="none" stroke="#d8d8d8" stroke-width="1.2"/></svg>
<svg class="s" style="left:1381px;top:84px;" width="30" height="29" viewBox="0 0 30 29"><path d="M6 2.7 H21.8 M6 0.8 V4.6 M21.8 0.8 V4.6" stroke="#b8d4ec" stroke-width="1.1"/><rect x="7.4" y="13.2" width="13" height="7.4" fill="#1f7fd6"/><rect x="0.6" y="6.2" width="27.5" height="21.4" fill="none" stroke="#f4efea" stroke-width="1.3"/><path d="M0.6 13.2 H28.1 M0.6 20.6 H28.1 M7.4 6.2 V27.6 M20.4 6.2 V27.6" stroke="#f4efea" stroke-width="1.2"/></svg>
<div class="t" style="left:1376.70px;top:122.34px;font-size:12px;line-height:12px;color:#eaeaea;letter-spacing:-0.101px;">Format</div>
<svg class="s" style="left:1390.5px;top:141.5px;" width="8" height="6" viewBox="0 0 8 6"><path d="M1 1.7999999999999998 L4 4.5 L7 1.7999999999999998" fill="none" stroke="#d8d8d8" stroke-width="1.2"/></svg>
<svg class="s" style="left:1438px;top:87px;" width="14" height="14" viewBox="0 0 14 14"><path d="M12.5 2 V0.8 H1 L7 7 L1 13.2 H12.5 V12" fill="none" stroke="#d8d8d8" stroke-width="1.2"/></svg>
<div class="t" style="left:1457.20px;top:89.04px;font-size:12px;line-height:12px;color:#eaeaea;letter-spacing:0.023px;">AutoSum</div>
<svg class="s" style="left:1523.5px;top:91.5px;" width="8" height="6" viewBox="0 0 8 6"><path d="M1 1.7999999999999998 L4 4.5 L7 1.7999999999999998" fill="none" stroke="#d8d8d8" stroke-width="1.2"/></svg>
<svg class="s" style="left:1436px;top:112px;" width="18" height="16" viewBox="0 0 18 16"><rect x="1" y="1" width="15.5" height="13.8" fill="none" stroke="#ece4dc" stroke-width="1.2"/><path d="M1 3.6 H16.5" stroke="#ece4dc" stroke-width="1"/><path d="M8.7 6.5 V12 M6.2 9.6 L8.7 12 L11.2 9.6" fill="none" stroke="#4a9fe0" stroke-width="1.3"/></svg>
<div class="t" style="left:1457.50px;top:114.84px;font-size:12px;line-height:12px;color:#eaeaea;letter-spacing:-0.376px;">Fill</div>
<svg class="s" style="left:1475px;top:118.5px;" width="8" height="6" viewBox="0 0 8 6"><path d="M1 1.7999999999999998 L4 4.5 L7 1.7999999999999998" fill="none" stroke="#d8d8d8" stroke-width="1.2"/></svg>
<svg class="s" style="left:1436px;top:138px;" width="17" height="17" viewBox="0 0 17 17"><path d="M1.5 10.5 L9.5 2.5 L15.5 8.5 L7.5 16.5 Z" fill="none" stroke="#d8c8e0" stroke-width="1.1"/><path d="M1.5 10.5 L5 7 L11 13 L7.5 16.5 Z" fill="#c24fd0" stroke="#d070e0" stroke-width="0.8"/></svg>
<div class="t" style="left:1457.50px;top:141.04px;font-size:12px;line-height:12px;color:#eaeaea;letter-spacing:-0.494px;">Clear</div>
<svg class="s" style="left:1486.5px;top:144.5px;" width="8" height="6" viewBox="0 0 8 6"><path d="M1 1.7999999999999998 L4 4.5 L7 1.7999999999999998" fill="none" stroke="#d8d8d8" stroke-width="1.2"/></svg>
<svg class="s" style="left:1546px;top:86px;" width="33" height="30" viewBox="0 0 33 30"><path d="M2 13.5 L6.5 1.5 L11 13.5 M3.7 9.3 H9.3" fill="none" stroke="#4a9fe0" stroke-width="1.3"/><path d="M2.5 16.8 H10.5 L2.5 27.5 H11" fill="none" stroke="#e0e0e0" stroke-width="1.3"/><path d="M15 8.2 H30 V9.8 L24.3 16.5 V24.5 L20.7 24.5 V16.5 L15 9.8 Z" fill="none" stroke="#e0e0e0" stroke-width="1.2"/></svg>
<div class="t" style="left:1546.20px;top:121.84px;font-size:12px;line-height:12px;color:#eaeaea;letter-spacing:0.091px;">Sort &amp;</div>
<div class="t" style="left:1544.70px;top:137.34px;font-size:12px;line-height:12px;color:#eaeaea;letter-spacing:-0.273px;">Filter</div>
<svg class="s" style="left:1572px;top:141px;" width="8" height="6" viewBox="0 0 8 6"><path d="M1 1.7999999999999998 L4 4.5 L7 1.7999999999999998" fill="none" stroke="#d8d8d8" stroke-width="1.2"/></svg>
<svg class="s" style="left:1592px;top:85px;" width="34" height="32" viewBox="0 0 34 32"><circle cx="20.5" cy="11.5" r="10.3" fill="none" stroke="#d8d8d8" stroke-width="1.2"/><path d="M13 19 L2 30" stroke="#d8d8d8" stroke-width="1.3"/></svg>
<div class="t" style="left:1591.30px;top:121.84px;font-size:12px;line-height:12px;color:#eaeaea;letter-spacing:0.224px;">Find &amp;</div>
<div class="t" style="left:1588.30px;top:137.34px;font-size:12px;line-height:12px;color:#eaeaea;letter-spacing:-0.570px;">Select</div>
<svg class="s" style="left:1622px;top:141px;" width="8" height="6" viewBox="0 0 8 6"><path d="M1 1.7999999999999998 L4 4.5 L7 1.7999999999999998" fill="none" stroke="#d8d8d8" stroke-width="1.2"/></svg>
<svg class="s" style="left:1657px;top:86px;" width="30" height="30" viewBox="0 0 30 30"><rect x="1.5" y="1.5" width="27" height="27" fill="none" stroke="#d9542b" stroke-width="1.6"/><rect x="5" y="5" width="9" height="9" fill="none" stroke="#d9542b" stroke-width="1.3"/><rect x="16" y="5" width="9" height="9" fill="none" stroke="#d9542b" stroke-width="1.3"/><rect x="5" y="16" width="9" height="9" fill="none" stroke="#d9542b" stroke-width="1.3"/><rect x="16" y="16" width="9" height="9" fill="none" stroke="#d9542b" stroke-width="1.3"/></svg>
<div class="t" style="left:1651.30px;top:121.84px;font-size:12px;line-height:12px;color:#eaeaea;letter-spacing:0.169px;">Add-ins</div>
<svg class="s" style="left:1747px;top:89px;" width="27" height="27" viewBox="0 0 27 27"><path d="M2 1.5 H10 L15 6.5 V12 M10 1.5 V6.5 H15 M2 1.5 V19.5 H8" fill="none" stroke="#2f7de1" stroke-width="1.7"/><path d="M10 14 V24.5 H24 V14 M17 20 V10.5 M14 13.5 L17 10.5 L20 13.5" fill="none" stroke="#2f7de1" stroke-width="1.7"/></svg>
<div class="t" style="left:1714.70px;top:121.84px;font-size:12px;line-height:12px;color:#eaeaea;letter-spacing:-0.402px;">Create and Share</div>
<div class="t" style="left:1729.20px;top:137.34px;font-size:12px;line-height:12px;color:#eaeaea;letter-spacing:-0.354px;">Adobe PDF</div>
<div class="r" style="left:8px;top:186px;width:102px;height:26px;background:#262626;border:1px solid #5e5a55;border-radius:4px;box-sizing:border-box;"></div>
<div class="t" style="left:15.00px;top:194.02px;font-size:12.5px;line-height:12.5px;color:#e6e6e6;letter-spacing:-0.598px;">E383</div>
<svg class="s" style="left:93px;top:195px;" width="12" height="9" viewBox="0 0 12 9"><path d="M1 1.5 L6 6.5 L11 1.5" fill="none" stroke="#d8d8d8" stroke-width="1.2"/></svg>
<div class="r" style="left:119px;top:193px;width:2px;height:2px;background:#d8d8d8;border-radius:1px;"></div>
<div class="r" style="left:119px;top:198.5px;width:2px;height:2px;background:#d8d8d8;border-radius:1px;"></div>
<div class="r" style="left:119px;top:204px;width:2px;height:2px;background:#d8d8d8;border-radius:1px;"></div>
<div class="r" style="left:130px;top:186px;width:74px;height:26px;background:#262626;border:1px solid #5e5a55;border-radius:4px;box-sizing:border-box;"></div>
<svg class="s" style="left:136px;top:193px;" width="14" height="12" viewBox="0 0 14 12"><path d="M1 0.5 L13 11.5 M13 0.5 L1 11.5" stroke="#6a6a6a" stroke-width="1.2"/></svg>
<svg class="s" style="left:158px;top:193px;" width="18" height="12" viewBox="0 0 18 12"><path d="M0.8 5.5 L6 10.8 L16.5 0.8" fill="none" stroke="#6a6a6a" stroke-width="1.2"/></svg>
<div class="t" style="left:184.50px;top:191.46px;font-size:16px;line-height:16px;color:#d8d8d8;font-family:'Liberation Serif',serif;"><i>f</i><i style="font-size:13px">x</i></div>
<div class="r" style="left:208px;top:186px;width:1704px;height:66px;background:#282828;border:1px solid #5e5a55;border-radius:5px;box-sizing:border-box;"></div>
<div class="t" style="left:219.50px;top:194.02px;font-size:12.5px;line-height:12.5px;color:#e6e6e6;letter-spacing:0.088px;">0508615499077000000000</div>
<svg class="s" style="left:1895px;top:193px;" width="14" height="9" viewBox="0 0 14 9"><path d="M1 7.5 L7 1.5 L13 7.5" fill="none" stroke="#d8d8d8" stroke-width="1.2"/></svg>
<div class="r" style="left:0px;top:258px;width:1898px;height:20px;background:#0c0c0c;"></div>
<div class="r" style="left:484px;top:258px;width:1029px;height:20px;background:#6b6b6b;"></div>
<div class="r" style="left:484px;top:275px;width:1029px;height:3px;background:#3b7256;"></div>
<svg class="s" style="left:7px;top:262px;" width="17" height="14" viewBox="0 0 17 14"><path d="M16 1 L16 13 L2 13 Z" fill="#777"/></svg>
<div class="r" style="left:145px;top:259px;width:1px;height:19px;background:#3c3c3c;"></div>
<div class="t" style="left:-215.00px;width:600px;text-align:center;top:262.57px;font-size:13.5px;line-height:13.5px;color:#f2f2f2;">A</div>
<div class="r" style="left:226px;top:259px;width:1px;height:19px;background:#3c3c3c;"></div>
<div class="t" style="left:-114.50px;width:600px;text-align:center;top:262.57px;font-size:13.5px;line-height:13.5px;color:#f2f2f2;">B</div>
<div class="r" style="left:361px;top:259px;width:1px;height:19px;background:#3c3c3c;"></div>
<div class="t" style="left:-6.50px;width:600px;text-align:center;top:262.57px;font-size:13.5px;line-height:13.5px;color:#f2f2f2;">C</div>
<div class="r" style="left:484px;top:259px;width:1px;height:19px;background:#3c3c3c;"></div>
<div class="t" style="left:122.50px;width:600px;text-align:center;top:262.57px;font-size:13.5px;line-height:13.5px;color:#f2f2f2;">D</div>
<div class="r" style="left:730px;top:259px;width:1px;height:17px;background:#8e8e8e;"></div>
<div class="t" style="left:307.00px;width:600px;text-align:center;top:262.57px;font-size:13.5px;line-height:13.5px;color:#f2f2f2;">E</div>
<div class="r" style="left:818px;top:259px;width:1px;height:17px;background:#8e8e8e;"></div>
<div class="t" style="left:474.00px;width:600px;text-align:center;top:262.57px;font-size:13.5px;line-height:13.5px;color:#f2f2f2;">F</div>
<div class="r" style="left:975px;top:259px;width:1px;height:17px;background:#8e8e8e;"></div>
<div class="t" style="left:596.50px;width:600px;text-align:center;top:262.57px;font-size:13.5px;line-height:13.5px;color:#f2f2f2;">G</div>
<div class="r" style="left:1052px;top:259px;width:1px;height:17px;background:#8e8e8e;"></div>
<div class="t" style="left:713.50px;width:600px;text-align:center;top:262.57px;font-size:13.5px;line-height:13.5px;color:#f2f2f2;">H</div>
<div class="r" style="left:1172px;top:259px;width:1px;height:17px;background:#8e8e8e;"></div>
<div class="t" style="left:812.00px;width:600px;text-align:center;top:262.57px;font-size:13.5px;line-height:13.5px;color:#f2f2f2;">I</div>
<div class="r" style="left:1337px;top:259px;width:1px;height:17px;background:#8e8e8e;"></div>
<div class="t" style="left:954.50px;width:600px;text-align:center;top:262.57px;font-size:13.5px;line-height:13.5px;color:#f2f2f2;">J</div>
<div class="r" style="left:1449px;top:259px;width:1px;height:17px;background:#8e8e8e;"></div>
<div class="t" style="left:1093.00px;width:600px;text-align:center;top:262.57px;font-size:13.5px;line-height:13.5px;color:#f2f2f2;">K</div>
<div class="r" style="left:1513px;top:259px;width:1px;height:17px;background:#8e8e8e;"></div>
<div class="t" style="left:1181.00px;width:600px;text-align:center;top:262.57px;font-size:13.5px;line-height:13.5px;color:#f2f2f2;">L</div>
<div class="r" style="left:1577px;top:259px;width:1px;height:19px;background:#3c3c3c;"></div>
<div class="t" style="left:1245.00px;width:600px;text-align:center;top:262.57px;font-size:13.5px;line-height:13.5px;color:#f2f2f2;">M</div>
<div class="r" style="left:1641px;top:259px;width:1px;height:19px;background:#3c3c3c;"></div>
<div class="t" style="left:1309.00px;width:600px;text-align:center;top:262.57px;font-size:13.5px;line-height:13.5px;color:#f2f2f2;">N</div>
<div class="r" style="left:1705px;top:259px;width:1px;height:19px;background:#3c3c3c;"></div>
<div class="t" style="left:1373.00px;width:600px;text-align:center;top:262.57px;font-size:13.5px;line-height:13.5px;color:#f2f2f2;">O</div>
<div class="r" style="left:1769px;top:259px;width:1px;height:19px;background:#3c3c3c;"></div>
<div class="t" style="left:1437.00px;width:600px;text-align:center;top:262.57px;font-size:13.5px;line-height:13.5px;color:#f2f2f2;">P</div>
<div class="r" style="left:1833px;top:259px;width:1px;height:19px;background:#3c3c3c;"></div>
<div class="t" style="left:1501.00px;width:600px;text-align:center;top:262.57px;font-size:13.5px;line-height:13.5px;color:#f2f2f2;">Q</div>
<div class="r" style="left:1897px;top:259px;width:1px;height:19px;background:#3c3c3c;"></div>
<div class="t" style="left:1565.00px;width:600px;text-align:center;top:262.57px;font-size:13.5px;line-height:13.5px;color:#f2f2f2;">R</div>
<div class="r" style="left:25px;top:259px;width:1px;height:19px;background:#3c3c3c;"></div>
<div class="r" style="left:25px;top:278px;width:1872px;height:700px;background:#ffffff;"></div>
<div class="r" style="left:1897px;top:258px;width:23px;height:720px;background:#141414;"></div>
<div class="r" style="left:484px;top:425px;width:1029px;height:553px;background:#c8c8c8;"></div>
<div class="r" style="left:484px;top:425px;width:246px;height:20px;background:#ffffff;"></div>
<div class="r" style="left:25px;top:299px;width:1872px;height:1px;background:#e0e0e0;"></div>
<div class="r" style="left:25px;top:320px;width:1872px;height:1px;background:#e0e0e0;"></div>
<div class="r" style="left:25px;top:341px;width:1872px;height:1px;background:#e0e0e0;"></div>
<div class="r" style="left:25px;top:362px;width:1872px;height:1px;background:#e0e0e0;"></div>
<div class="r" style="left:25px;top:383px;width:1872px;height:1px;background:#e0e0e0;"></div>
<div class="r" style="left:25px;top:404px;width:1872px;height:1px;background:#e0e0e0;"></div>
<div class="r" style="left:25px;top:425px;width:1872px;height:1px;background:#e0e0e0;"></div>
<div class="r" style="left:25px;top:445px;width:1872px;height:1px;background:#e0e0e0;"></div>
<div class="r" style="left:484px;top:445px;width:1029px;height:1px;background:#acacac;"></div>
<div class="r" style="left:25px;top:465px;width:1872px;height:1px;background:#e0e0e0;"></div>
<div class="r" style="left:484px;top:465px;width:1029px;height:1px;background:#acacac;"></div>
<div class="r" style="left:25px;top:485px;width:1872px;height:1px;background:#e0e0e0;"></div>
<div class="r" style="left:484px;top:485px;width:1029px;height:1px;background:#acacac;"></div>
<div class="r" style="left:25px;top:505px;width:1872px;height:1px;background:#e0e0e0;"></div>
<div class="r" style="left:484px;top:505px;width:1029px;height:1px;background:#acacac;"></div>
<div class="r" style="left:25px;top:525px;width:1872px;height:1px;background:#e0e0e0;"></div>
<div class="r" style="left:484px;top:525px;width:1029px;height:1px;background:#acacac;"></div>
<div class="r" style="left:25px;top:545px;width:1872px;height:1px;background:#e0e0e0;"></div>
<div class="r" style="left:484px;top:545px;width:1029px;height:1px;background:#acacac;"></div>
<div class="r" style="left:25px;top:565px;width:1872px;height:1px;background:#e0e0e0;"></div>
<div class="r" style="left:484px;top:565px;width:1029px;height:1px;background:#acacac;"></div>
<div class="r" style="left:25px;top:585px;width:1872px;height:1px;background:#e0e0e0;"></div>
<div class="r" style="left:484px;top:585px;width:1029px;height:1px;background:#acacac;"></div>
<div class="r" style="left:25px;top:605px;width:1872px;height:1px;background:#e0e0e0;"></div>
<div class="r" style="left:484px;top:605px;width:1029px;height:1px;background:#acacac;"></div>
<div class="r" style="left:25px;top:625px;width:1872px;height:1px;background:#e0e0e0;"></div>
<div class="r" style="left:484px;top:625px;width:1029px;height:1px;background:#acacac;"></div>
<div class="r" style="left:25px;top:645px;width:1872px;height:1px;background:#e0e0e0;"></div>
<div class="r" style="left:484px;top:645px;width:1029px;height:1px;background:#acacac;"></div>
<div class="r" style="left:25px;top:665px;width:1872px;height:1px;background:#e0e0e0;"></div>
<div class="r" style="left:484px;top:665px;width:1029px;height:1px;background:#acacac;"></div>
<div class="r" style="left:25px;top:685px;width:1872px;height:1px;background:#e0e0e0;"></div>
<div class="r" style="left:484px;top:685px;width:1029px;height:1px;background:#acacac;"></div>
<div class="r" style="left:25px;top:705px;width:1872px;height:1px;background:#e0e0e0;"></div>
<div class="r" style="left:484px;top:705px;width:1029px;height:1px;background:#acacac;"></div>
<div class="r" style="left:25px;top:725px;width:1872px;height:1px;background:#e0e0e0;"></div>
<div class="r" style="left:484px;top:725px;width:1029px;height:1px;background:#acacac;"></div>
<div class="r" style="left:25px;top:745px;width:1872px;height:1px;background:#e0e0e0;"></div>
<div class="r" style="left:484px;top:745px;width:1029px;height:1px;background:#acacac;"></div>
<div class="r" style="left:25px;top:765px;width:1872px;height:1px;background:#e0e0e0;"></div>
<div class="r" style="left:484px;top:765px;width:1029px;height:1px;background:#acacac;"></div>
<div class="r" style="left:25px;top:785px;width:1872px;height:1px;background:#e0e0e0;"></div>
<div class="r" style="left:484px;top:785px;width:1029px;height:1px;background:#acacac;"></div>
<div class="r" style="left:25px;top:805px;width:1872px;height:1px;background:#e0e0e0;"></div>
<div class="r" style="left:484px;top:805px;width:1029px;height:1px;background:#acacac;"></div>
<div class="r" style="left:25px;top:825px;width:1872px;height:1px;background:#e0e0e0;"></div>
<div class="r" style="left:484px;top:825px;width:1029px;height:1px;background:#acacac;"></div>
<div class="r" style="left:25px;top:845px;width:1872px;height:1px;background:#e0e0e0;"></div>
<div class="r" style="left:484px;top:845px;width:1029px;height:1px;background:#acacac;"></div>
<div class="r" style="left:25px;top:865px;width:1872px;height:1px;background:#e0e0e0;"></div>
<div class="r" style="left:484px;top:865px;width:1029px;height:1px;background:#acacac;"></div>
<div class="r" style="left:25px;top:885px;width:1872px;height:1px;background:#e0e0e0;"></div>
<div class="r" style="left:484px;top:885px;width:1029px;height:1px;background:#acacac;"></div>
<div class="r" style="left:25px;top:905px;width:1872px;height:1px;background:#e0e0e0;"></div>
<div class="r" style="left:484px;top:905px;width:1029px;height:1px;background:#acacac;"></div>
<div class="r" style="left:25px;top:925px;width:1872px;height:1px;background:#e0e0e0;"></div>
<div class="r" style="left:484px;top:925px;width:1029px;height:1px;background:#acacac;"></div>
<div class="r" style="left:25px;top:945px;width:1872px;height:1px;background:#e0e0e0;"></div>
<div class="r" style="left:484px;top:945px;width:1029px;height:1px;background:#acacac;"></div>
<div class="r" style="left:25px;top:965px;width:1872px;height:1px;background:#e0e0e0;"></div>
<div class="r" style="left:484px;top:965px;width:1029px;height:1px;background:#acacac;"></div>
<div class="r" style="left:145px;top:278px;width:1px;height:700px;background:#e0e0e0;"></div>
<div class="r" style="left:226px;top:278px;width:1px;height:700px;background:#e0e0e0;"></div>
<div class="r" style="left:361px;top:278px;width:1px;height:700px;background:#e0e0e0;"></div>
<div class="r" style="left:484px;top:278px;width:1px;height:700px;background:#e0e0e0;"></div>
<div class="r" style="left:730px;top:278px;width:1px;height:700px;background:#e0e0e0;"></div>
<div class="r" style="left:730px;top:425px;width:1px;height:553px;background:#acacac;"></div>
<div class="r" style="left:818px;top:278px;width:1px;height:700px;background:#e0e0e0;"></div>
<div class="r" style="left:818px;top:425px;width:1px;height:553px;background:#acacac;"></div>
<div class="r" style="left:975px;top:278px;width:1px;height:700px;background:#e0e0e0;"></div>
<div class="r" style="left:975px;top:425px;width:1px;height:553px;background:#acacac;"></div>
<div class="r" style="left:1052px;top:278px;width:1px;height:700px;background:#e0e0e0;"></div>
<div class="r" style="left:1052px;top:425px;width:1px;height:553px;background:#acacac;"></div>
<div class="r" style="left:1172px;top:278px;width:1px;height:700px;background:#e0e0e0;"></div>
<div class="r" style="left:1172px;top:425px;width:1px;height:553px;background:#acacac;"></div>
<div class="r" style="left:1337px;top:278px;width:1px;height:700px;background:#e0e0e0;"></div>
<div class="r" style="left:1337px;top:425px;width:1px;height:553px;background:#acacac;"></div>
<div class="r" style="left:1449px;top:278px;width:1px;height:700px;background:#e0e0e0;"></div>
<div class="r" style="left:1449px;top:425px;width:1px;height:553px;background:#acacac;"></div>
<div class="r" style="left:1513px;top:278px;width:1px;height:700px;background:#e0e0e0;"></div>
<div class="r" style="left:1577px;top:278px;width:1px;height:700px;background:#e0e0e0;"></div>
<div class="r" style="left:1641px;top:278px;width:1px;height:700px;background:#e0e0e0;"></div>
<div class="r" style="left:1705px;top:278px;width:1px;height:700px;background:#e0e0e0;"></div>
<div class="r" style="left:1769px;top:278px;width:1px;height:700px;background:#e0e0e0;"></div>
<div class="r" style="left:1833px;top:278px;width:1px;height:700px;background:#e0e0e0;"></div>
<div class="r" style="left:0px;top:278px;width:25px;height:700px;background:#0c0c0c;"></div>
<div class="r" style="left:0px;top:425px;width:25px;height:553px;background:#6b6b6b;"></div>
<div class="r" style="left:0px;top:299px;width:25px;height:1px;background:#3c3c3c;"></div>
<div class="t" style="left:-577.09px;width:600px;text-align:right;top:283.70px;font-size:13px;line-height:13px;color:#f2f2f2;letter-spacing:-0.595px;">376</div>
<div class="r" style="left:0px;top:320px;width:25px;height:1px;background:#3c3c3c;"></div>
<div class="t" style="left:-577.09px;width:600px;text-align:right;top:304.70px;font-size:13px;line-height:13px;color:#f2f2f2;letter-spacing:-0.595px;">377</div>
<div class="r" style="left:0px;top:341px;width:25px;height:1px;background:#3c3c3c;"></div>
<div class="t" style="left:-577.09px;width:600px;text-align:right;top:325.70px;font-size:13px;line-height:13px;color:#f2f2f2;letter-spacing:-0.595px;">378</div>
<div class="r" style="left:0px;top:362px;width:25px;height:1px;background:#3c3c3c;"></div>
<div class="t" style="left:-577.09px;width:600px;text-align:right;top:346.70px;font-size:13px;line-height:13px;color:#f2f2f2;letter-spacing:-0.595px;">379</div>
<div class="r" style="left:0px;top:383px;width:25px;height:1px;background:#3c3c3c;"></div>
<div class="t" style="left:-577.09px;width:600px;text-align:right;top:367.70px;font-size:13px;line-height:13px;color:#f2f2f2;letter-spacing:-0.595px;">380</div>
<div class="r" style="left:0px;top:404px;width:25px;height:1px;background:#3c3c3c;"></div>
<div class="t" style="left:-577.09px;width:600px;text-align:right;top:388.70px;font-size:13px;line-height:13px;color:#f2f2f2;letter-spacing:-0.595px;">381</div>
<div class="r" style="left:0px;top:425px;width:25px;height:1px;background:#3c3c3c;"></div>
<div class="t" style="left:-577.09px;width:600px;text-align:right;top:409.70px;font-size:13px;line-height:13px;color:#f2f2f2;letter-spacing:-0.595px;">382</div>
<div class="r" style="left:0px;top:445px;width:25px;height:1px;background:#8e8e8e;"></div>
<div class="t" style="left:-577.09px;width:600px;text-align:right;top:429.70px;font-size:13px;line-height:13px;color:#f2f2f2;letter-spacing:-0.595px;">383</div>
<div class="r" style="left:0px;top:465px;width:25px;height:1px;background:#8e8e8e;"></div>
<div class="t" style="left:-577.09px;width:600px;text-align:right;top:449.70px;font-size:13px;line-height:13px;color:#f2f2f2;letter-spacing:-0.595px;">384</div>
<div class="r" style="left:0px;top:485px;width:25px;height:1px;background:#8e8e8e;"></div>
<div class="t" style="left:-577.09px;width:600px;text-align:right;top:469.70px;font-size:13px;line-height:13px;color:#f2f2f2;letter-spacing:-0.595px;">385</div>
<div class="r" style="left:0px;top:505px;width:25px;height:1px;background:#8e8e8e;"></div>
<div class="t" style="left:-577.09px;width:600px;text-align:right;top:489.70px;font-size:13px;line-height:13px;color:#f2f2f2;letter-spacing:-0.595px;">386</div>
<div class="r" style="left:0px;top:525px;width:25px;height:1px;background:#8e8e8e;"></div>
<div class="t" style="left:-577.09px;width:600px;text-align:right;top:509.70px;font-size:13px;line-height:13px;color:#f2f2f2;letter-spacing:-0.595px;">387</div>
<div class="r" style="left:0px;top:545px;width:25px;height:1px;background:#8e8e8e;"></div>
<div class="t" style="left:-577.09px;width:600px;text-align:right;top:529.70px;font-size:13px;line-height:13px;color:#f2f2f2;letter-spacing:-0.595px;">388</div>
<div class="r" style="left:0px;top:565px;width:25px;height:1px;background:#8e8e8e;"></div>
<div class="t" style="left:-577.09px;width:600px;text-align:right;top:549.70px;font-size:13px;line-height:13px;color:#f2f2f2;letter-spacing:-0.595px;">389</div>
<div class="r" style="left:0px;top:585px;width:25px;height:1px;background:#8e8e8e;"></div>
<div class="t" style="left:-577.09px;width:600px;text-align:right;top:569.70px;font-size:13px;line-height:13px;color:#f2f2f2;letter-spacing:-0.595px;">390</div>
<div class="r" style="left:0px;top:605px;width:25px;height:1px;background:#8e8e8e;"></div>
<div class="t" style="left:-577.09px;width:600px;text-align:right;top:589.70px;font-size:13px;line-height:13px;color:#f2f2f2;letter-spacing:-0.595px;">391</div>
<div class="r" style="left:0px;top:625px;width:25px;height:1px;background:#8e8e8e;"></div>
<div class="t" style="left:-577.09px;width:600px;text-align:right;top:609.70px;font-size:13px;line-height:13px;color:#f2f2f2;letter-spacing:-0.595px;">392</div>
<div class="r" style="left:0px;top:645px;width:25px;height:1px;background:#8e8e8e;"></div>
<div class="t" style="left:-577.09px;width:600px;text-align:right;top:629.70px;font-size:13px;line-height:13px;color:#f2f2f2;letter-spacing:-0.595px;">393</div>
<div class="r" style="left:0px;top:665px;width:25px;height:1px;background:#8e8e8e;"></div>
<div class="t" style="left:-577.09px;width:600px;text-align:right;top:649.70px;font-size:13px;line-height:13px;color:#f2f2f2;letter-spacing:-0.595px;">394</div>
<div class="r" style="left:0px;top:685px;width:25px;height:1px;background:#8e8e8e;"></div>
<div class="t" style="left:-577.09px;width:600px;text-align:right;top:669.70px;font-size:13px;line-height:13px;color:#f2f2f2;letter-spacing:-0.595px;">395</div>
<div class="r" style="left:0px;top:705px;width:25px;height:1px;background:#8e8e8e;"></div>
<div class="t" style="left:-577.09px;width:600px;text-align:right;top:689.70px;font-size:13px;line-height:13px;color:#f2f2f2;letter-spacing:-0.595px;">396</div>
<div class="r" style="left:0px;top:725px;width:25px;height:1px;background:#8e8e8e;"></div>
<div class="t" style="left:-577.09px;width:600px;text-align:right;top:709.70px;font-size:13px;line-height:13px;color:#f2f2f2;letter-spacing:-0.595px;">397</div>
<div class="r" style="left:0px;top:745px;width:25px;height:1px;background:#8e8e8e;"></div>
<div class="t" style="left:-577.09px;width:600px;text-align:right;top:729.70px;font-size:13px;line-height:13px;color:#f2f2f2;letter-spacing:-0.595px;">398</div>
<div class="r" style="left:0px;top:765px;width:25px;height:1px;background:#8e8e8e;"></div>
<div class="t" style="left:-577.09px;width:600px;text-align:right;top:749.70px;font-size:13px;line-height:13px;color:#f2f2f2;letter-spacing:-0.595px;">399</div>
<div class="r" style="left:0px;top:785px;width:25px;height:1px;background:#8e8e8e;"></div>
<div class="t" style="left:-577.09px;width:600px;text-align:right;top:769.70px;font-size:13px;line-height:13px;color:#f2f2f2;letter-spacing:-0.595px;">400</div>
<div class="r" style="left:0px;top:805px;width:25px;height:1px;background:#8e8e8e;"></div>
<div class="t" style="left:-577.09px;width:600px;text-align:right;top:789.70px;font-size:13px;line-height:13px;color:#f2f2f2;letter-spacing:-0.595px;">401</div>
<div class="r" style="left:0px;top:825px;width:25px;height:1px;background:#8e8e8e;"></div>
<div class="t" style="left:-577.09px;width:600px;text-align:right;top:809.70px;font-size:13px;line-height:13px;color:#f2f2f2;letter-spacing:-0.595px;">402</div>
<div class="r" style="left:0px;top:845px;width:25px;height:1px;background:#8e8e8e;"></div>
<div class="t" style="left:-577.09px;width:600px;text-align:right;top:829.70px;font-size:13px;line-height:13px;color:#f2f2f2;letter-spacing:-0.595px;">403</div>
<div class="r" style="left:0px;top:865px;width:25px;height:1px;background:#8e8e8e;"></div>
<div class="t" style="left:-577.09px;width:600px;text-align:right;top:849.70px;font-size:13px;line-height:13px;color:#f2f2f2;letter-spacing:-0.595px;">404</div>
<div class="r" style="left:0px;top:885px;width:25px;height:1px;background:#8e8e8e;"></div>
<div class="t" style="left:-577.09px;width:600px;text-align:right;top:869.70px;font-size:13px;line-height:13px;color:#f2f2f2;letter-spacing:-0.595px;">405</div>
<div class="r" style="left:0px;top:905px;width:25px;height:1px;background:#8e8e8e;"></div>
<div class="t" style="left:-577.09px;width:600px;text-align:right;top:889.70px;font-size:13px;line-height:13px;color:#f2f2f2;letter-spacing:-0.595px;">406</div>
<div class="r" style="left:0px;top:925px;width:25px;height:1px;background:#8e8e8e;"></div>
<div class="t" style="left:-577.09px;width:600px;text-align:right;top:909.70px;font-size:13px;line-height:13px;color:#f2f2f2;letter-spacing:-0.595px;">407</div>
<div class="r" style="left:0px;top:945px;width:25px;height:1px;background:#8e8e8e;"></div>
<div class="t" style="left:-577.09px;width:600px;text-align:right;top:929.70px;font-size:13px;line-height:13px;color:#f2f2f2;letter-spacing:-0.595px;">408</div>
<div class="r" style="left:0px;top:965px;width:25px;height:1px;background:#8e8e8e;"></div>
<div class="t" style="left:-577.09px;width:600px;text-align:right;top:949.70px;font-size:13px;line-height:13px;color:#f2f2f2;letter-spacing:-0.595px;">409</div>
<div class="t" style="left:-577.09px;width:600px;text-align:right;top:969.70px;font-size:13px;line-height:13px;color:#f2f2f2;letter-spacing:-0.595px;">410</div>
<div class="r" style="left:24px;top:425px;width:2px;height:553px;background:#2f7a4f;"></div>
<div class="t" style="left:25px;top:282.60px;width:120px;font-size:14.3px;line-height:14.3px;color:#000;letter-spacing:-0.1244357638888892px;padding-left:3px;box-sizing:border-box;overflow:hidden;">Oktober-P1</div>
<div class="t" style="left:145px;top:282.60px;width:81px;font-size:14.3px;line-height:14.3px;color:#000;text-align:right;padding-right:2px;box-sizing:border-box;overflow:hidden;">1</div>
<div class="t" style="left:226px;top:282.60px;width:135px;font-size:14.3px;line-height:14.3px;color:#000;letter-spacing:0.12255859375px;padding-left:3px;box-sizing:border-box;overflow:hidden;">Oktober 2025</div>
<div class="t" style="left:361px;top:282.60px;width:123px;font-size:14.3px;line-height:14.3px;color:#000;letter-spacing:-0.24123535156249964px;padding-left:3px;box-sizing:border-box;overflow:hidden;">25098ICAU</div>
<div class="t" style="left:484px;top:282.60px;width:246px;font-size:14.3px;line-height:14.3px;color:#000;letter-spacing:0.04926060267857089px;padding-left:3px;box-sizing:border-box;overflow:hidden;">0508615499077000000000</div>
<div class="t" style="left:730px;top:282.60px;width:88px;font-size:14.3px;line-height:14.3px;color:#000;letter-spacing:-0.09284319196428571px;padding-left:3px;box-sizing:border-box;overflow:hidden;">Pasal 21</div>
<div class="t" style="left:818px;top:282.60px;width:157px;font-size:14.3px;line-height:14.3px;color:#000;letter-spacing:0.10064086914062464px;padding-left:3px;box-sizing:border-box;overflow:hidden;">21-100-01</div>
<div class="t" style="left:975px;top:282.60px;width:77px;font-size:14.3px;line-height:14.3px;color:#000;letter-spacing:0.03px;padding-left:3px;box-sizing:border-box;overflow:hidden;">3201072901234</div>
<div class="t" style="left:1052px;top:283.99px;width:120px;font-size:13.6px;line-height:13.6px;color:#000;letter-spacing:-0.35px;padding-left:3px;box-sizing:border-box;overflow:hidden;">ARIF ARDIANSYAH</div>
<div class="t" style="left:1172px;top:282.60px;width:165px;font-size:14.3px;line-height:14.3px;color:#000;text-align:right;padding-right:2px;box-sizing:border-box;overflow:hidden;">4016761</div>
<div class="t" style="left:1337px;top:282.60px;width:112px;font-size:14.3px;line-height:14.3px;color:#000;text-align:right;padding-right:2px;box-sizing:border-box;overflow:hidden;">0</div>
<div class="t" style="left:1449px;top:282.60px;width:128px;font-size:14.3px;line-height:14.3px;color:#000;letter-spacing:0.07393624441964265px;padding-left:3px;box-sizing:border-box;">Tanpa Fasilitas</div>
<svg class="s" style="left:485px;top:279px;" width="7" height="7" viewBox="0 0 7 7"><path d="M0 0 L6 0 L0 6 Z" fill="#1b7a2e"/></svg>
<svg class="s" style="left:976px;top:279px;" width="7" height="7" viewBox="0 0 7 7"><path d="M0 0 L6 0 L0 6 Z" fill="#1b7a2e"/></svg>
<div class="t" style="left:25px;top:303.60px;width:120px;font-size:14.3px;line-height:14.3px;color:#000;letter-spacing:-0.1244357638888892px;padding-left:3px;box-sizing:border-box;overflow:hidden;">Oktober-P1</div>
<div class="t" style="left:145px;top:303.60px;width:81px;font-size:14.3px;line-height:14.3px;color:#000;text-align:right;padding-right:2px;box-sizing:border-box;overflow:hidden;">1</div>
<div class="t" style="left:226px;top:303.60px;width:135px;font-size:14.3px;line-height:14.3px;color:#000;letter-spacing:0.12255859375px;padding-left:3px;box-sizing:border-box;overflow:hidden;">Oktober 2025</div>
<div class="t" style="left:361px;top:303.60px;width:123px;font-size:14.3px;line-height:14.3px;color:#000;letter-spacing:-0.142608642578125px;padding-left:3px;box-sizing:border-box;overflow:hidden;">25098ICAV</div>
<div class="t" style="left:484px;top:303.60px;width:246px;font-size:14.3px;line-height:14.3px;color:#000;letter-spacing:0.04926060267857089px;padding-left:3px;box-sizing:border-box;overflow:hidden;">0508615499077000000000</div>
<div class="t" style="left:730px;top:303.60px;width:88px;font-size:14.3px;line-height:14.3px;color:#000;letter-spacing:-0.09284319196428571px;padding-left:3px;box-sizing:border-box;overflow:hidden;">Pasal 21</div>
<div class="t" style="left:818px;top:303.60px;width:157px;font-size:14.3px;line-height:14.3px;color:#000;letter-spacing:0.10064086914062464px;padding-left:3px;box-sizing:border-box;overflow:hidden;">21-100-01</div>
<div class="t" style="left:975px;top:303.60px;width:77px;font-size:14.3px;line-height:14.3px;color:#000;letter-spacing:0.03px;padding-left:3px;box-sizing:border-box;overflow:hidden;">3201031611234</div>
<div class="t" style="left:1052px;top:304.99px;width:120px;font-size:13.6px;line-height:13.6px;color:#000;letter-spacing:-0.35px;padding-left:3px;box-sizing:border-box;overflow:hidden;">SUHERMAWAN</div>
<div class="t" style="left:1172px;top:303.60px;width:165px;font-size:14.3px;line-height:14.3px;color:#000;text-align:right;padding-right:2px;box-sizing:border-box;overflow:hidden;">3616685</div>
<div class="t" style="left:1337px;top:303.60px;width:112px;font-size:14.3px;line-height:14.3px;color:#000;text-align:right;padding-right:2px;box-sizing:border-box;overflow:hidden;">0</div>
<div class="t" style="left:1449px;top:303.60px;width:128px;font-size:14.3px;line-height:14.3px;color:#000;letter-spacing:0.07393624441964265px;padding-left:3px;box-sizing:border-box;">Tanpa Fasilitas</div>
<svg class="s" style="left:485px;top:300px;" width="7" height="7" viewBox="0 0 7 7"><path d="M0 0 L6 0 L0 6 Z" fill="#1b7a2e"/></svg>
<svg class="s" style="left:976px;top:300px;" width="7" height="7" viewBox="0 0 7 7"><path d="M0 0 L6 0 L0 6 Z" fill="#1b7a2e"/></svg>
<div class="t" style="left:25px;top:324.60px;width:120px;font-size:14.3px;line-height:14.3px;color:#000;letter-spacing:-0.1244357638888892px;padding-left:3px;box-sizing:border-box;overflow:hidden;">Oktober-P1</div>
<div class="t" style="left:145px;top:324.60px;width:81px;font-size:14.3px;line-height:14.3px;color:#000;text-align:right;padding-right:2px;box-sizing:border-box;overflow:hidden;">1</div>
<div class="t" style="left:226px;top:324.60px;width:135px;font-size:14.3px;line-height:14.3px;color:#000;letter-spacing:0.12255859375px;padding-left:3px;box-sizing:border-box;overflow:hidden;">Oktober 2025</div>
<div class="t" style="left:361px;top:324.60px;width:123px;font-size:14.3px;line-height:14.3px;color:#000;letter-spacing:-0.042236328125px;padding-left:3px;box-sizing:border-box;overflow:hidden;">25098ICAZ</div>
<div class="t" style="left:484px;top:324.60px;width:246px;font-size:14.3px;line-height:14.3px;color:#000;letter-spacing:0.04926060267857089px;padding-left:3px;box-sizing:border-box;overflow:hidden;">0508615499077000000000</div>
<div class="t" style="left:730px;top:324.60px;width:88px;font-size:14.3px;line-height:14.3px;color:#000;letter-spacing:-0.09284319196428571px;padding-left:3px;box-sizing:border-box;overflow:hidden;">Pasal 21</div>
<div class="t" style="left:818px;top:324.60px;width:157px;font-size:14.3px;line-height:14.3px;color:#000;letter-spacing:0.10064086914062464px;padding-left:3px;box-sizing:border-box;overflow:hidden;">21-100-01</div>
<div class="t" style="left:975px;top:324.60px;width:77px;font-size:14.3px;line-height:14.3px;color:#000;letter-spacing:0.03px;padding-left:3px;box-sizing:border-box;overflow:hidden;">3275052711234</div>
<div class="t" style="left:1052px;top:325.99px;width:120px;font-size:13.6px;line-height:13.6px;color:#000;letter-spacing:-0.35px;padding-left:3px;box-sizing:border-box;overflow:hidden;">PUTU DUWATMAJA</div>
<div class="t" style="left:1172px;top:324.60px;width:165px;font-size:14.3px;line-height:14.3px;color:#000;text-align:right;padding-right:2px;box-sizing:border-box;overflow:hidden;">6566643</div>
<div class="t" style="left:1337px;top:324.60px;width:112px;font-size:14.3px;line-height:14.3px;color:#000;text-align:right;padding-right:2px;box-sizing:border-box;overflow:hidden;">0</div>
<div class="t" style="left:1449px;top:324.60px;width:128px;font-size:14.3px;line-height:14.3px;color:#000;letter-spacing:0.07393624441964265px;padding-left:3px;box-sizing:border-box;">Tanpa Fasilitas</div>
<svg class="s" style="left:485px;top:321px;" width="7" height="7" viewBox="0 0 7 7"><path d="M0 0 L6 0 L0 6 Z" fill="#1b7a2e"/></svg>
<svg class="s" style="left:976px;top:321px;" width="7" height="7" viewBox="0 0 7 7"><path d="M0 0 L6 0 L0 6 Z" fill="#1b7a2e"/></svg>
<div class="t" style="left:25px;top:345.60px;width:120px;font-size:14.3px;line-height:14.3px;color:#000;letter-spacing:-0.1244357638888892px;padding-left:3px;box-sizing:border-box;overflow:hidden;">Oktober-P1</div>
<div class="t" style="left:145px;top:345.60px;width:81px;font-size:14.3px;line-height:14.3px;color:#000;text-align:right;padding-right:2px;box-sizing:border-box;overflow:hidden;">1</div>
<div class="t" style="left:226px;top:345.60px;width:135px;font-size:14.3px;line-height:14.3px;color:#000;letter-spacing:0.12255859375px;padding-left:3px;box-sizing:border-box;overflow:hidden;">Oktober 2025</div>
<div class="t" style="left:361px;top:345.60px;width:123px;font-size:14.3px;line-height:14.3px;color:#000;letter-spacing:0.055517578125000355px;padding-left:3px;box-sizing:border-box;overflow:hidden;">25098ICB2</div>
<div class="t" style="left:484px;top:345.60px;width:246px;font-size:14.3px;line-height:14.3px;color:#000;letter-spacing:0.04926060267857089px;padding-left:3px;box-sizing:border-box;overflow:hidden;">0508615499077000000000</div>
<div class="t" style="left:730px;top:345.60px;width:88px;font-size:14.3px;line-height:14.3px;color:#000;letter-spacing:-0.09284319196428571px;padding-left:3px;box-sizing:border-box;overflow:hidden;">Pasal 21</div>
<div class="t" style="left:818px;top:345.60px;width:157px;font-size:14.3px;line-height:14.3px;color:#000;letter-spacing:0.10064086914062464px;padding-left:3px;box-sizing:border-box;overflow:hidden;">21-100-01</div>
<div class="t" style="left:975px;top:345.60px;width:77px;font-size:14.3px;line-height:14.3px;color:#000;letter-spacing:0.03px;padding-left:3px;box-sizing:border-box;overflow:hidden;">1671072401234</div>
<div class="t" style="left:1052px;top:346.99px;width:120px;font-size:13.6px;line-height:13.6px;color:#000;letter-spacing:-0.35px;padding-left:3px;box-sizing:border-box;overflow:hidden;">AMAR ASRULLAH</div>
<div class="t" style="left:1172px;top:345.60px;width:165px;font-size:14.3px;line-height:14.3px;color:#000;text-align:right;padding-right:2px;box-sizing:border-box;overflow:hidden;">884484</div>
<div class="t" style="left:1337px;top:345.60px;width:112px;font-size:14.3px;line-height:14.3px;color:#000;text-align:right;padding-right:2px;box-sizing:border-box;overflow:hidden;">0</div>
<div class="t" style="left:1449px;top:345.60px;width:128px;font-size:14.3px;line-height:14.3px;color:#000;letter-spacing:0.07393624441964265px;padding-left:3px;box-sizing:border-box;">Tanpa Fasilitas</div>
<svg class="s" style="left:485px;top:342px;" width="7" height="7" viewBox="0 0 7 7"><path d="M0 0 L6 0 L0 6 Z" fill="#1b7a2e"/></svg>
<svg class="s" style="left:976px;top:342px;" width="7" height="7" viewBox="0 0 7 7"><path d="M0 0 L6 0 L0 6 Z" fill="#1b7a2e"/></svg>
<div class="t" style="left:25px;top:366.60px;width:120px;font-size:14.3px;line-height:14.3px;color:#000;letter-spacing:-0.1244357638888892px;padding-left:3px;box-sizing:border-box;overflow:hidden;">Oktober-P1</div>
<div class="t" style="left:145px;top:366.60px;width:81px;font-size:14.3px;line-height:14.3px;color:#000;text-align:right;padding-right:2px;box-sizing:border-box;overflow:hidden;">1</div>
<div class="t" style="left:226px;top:366.60px;width:135px;font-size:14.3px;line-height:14.3px;color:#000;letter-spacing:0.12255859375px;padding-left:3px;box-sizing:border-box;overflow:hidden;">Oktober 2025</div>
<div class="t" style="left:361px;top:366.60px;width:123px;font-size:14.3px;line-height:14.3px;color:#000;letter-spacing:0.055517578125000355px;padding-left:3px;box-sizing:border-box;overflow:hidden;">25098ICB4</div>
<div class="t" style="left:484px;top:366.60px;width:246px;font-size:14.3px;line-height:14.3px;color:#000;letter-spacing:0.04926060267857089px;padding-left:3px;box-sizing:border-box;overflow:hidden;">0508615499077000000000</div>
<div class="t" style="left:730px;top:366.60px;width:88px;font-size:14.3px;line-height:14.3px;color:#000;letter-spacing:-0.09284319196428571px;padding-left:3px;box-sizing:border-box;overflow:hidden;">Pasal 21</div>
<div class="t" style="left:818px;top:366.60px;width:157px;font-size:14.3px;line-height:14.3px;color:#000;letter-spacing:0.10064086914062464px;padding-left:3px;box-sizing:border-box;overflow:hidden;">21-100-01</div>
<div class="t" style="left:975px;top:366.60px;width:77px;font-size:14.3px;line-height:14.3px;color:#000;letter-spacing:0.03px;padding-left:3px;box-sizing:border-box;overflow:hidden;">3201161501234</div>
<div class="t" style="left:1052px;top:367.99px;width:120px;font-size:13.6px;line-height:13.6px;color:#000;letter-spacing:-0.35px;padding-left:3px;box-sizing:border-box;overflow:hidden;">HOERUDIN</div>
<div class="t" style="left:1172px;top:366.60px;width:165px;font-size:14.3px;line-height:14.3px;color:#000;text-align:right;padding-right:2px;box-sizing:border-box;overflow:hidden;">1528173</div>
<div class="t" style="left:1337px;top:366.60px;width:112px;font-size:14.3px;line-height:14.3px;color:#000;text-align:right;padding-right:2px;box-sizing:border-box;overflow:hidden;">0</div>
<div class="t" style="left:1449px;top:366.60px;width:128px;font-size:14.3px;line-height:14.3px;color:#000;letter-spacing:0.07393624441964265px;padding-left:3px;box-sizing:border-box;">Tanpa Fasilitas</div>
<svg class="s" style="left:485px;top:363px;" width="7" height="7" viewBox="0 0 7 7"><path d="M0 0 L6 0 L0 6 Z" fill="#1b7a2e"/></svg>
<svg class="s" style="left:976px;top:363px;" width="7" height="7" viewBox="0 0 7 7"><path d="M0 0 L6 0 L0 6 Z" fill="#1b7a2e"/></svg>
<div class="t" style="left:25px;top:387.60px;width:120px;font-size:14.3px;line-height:14.3px;color:#000;letter-spacing:-0.1244357638888892px;padding-left:3px;box-sizing:border-box;overflow:hidden;">Oktober-P1</div>
<div class="t" style="left:145px;top:387.60px;width:81px;font-size:14.3px;line-height:14.3px;color:#000;text-align:right;padding-right:2px;box-sizing:border-box;overflow:hidden;">1</div>
<div class="t" style="left:226px;top:387.60px;width:135px;font-size:14.3px;line-height:14.3px;color:#000;letter-spacing:0.12255859375px;padding-left:3px;box-sizing:border-box;overflow:hidden;">Oktober 2025</div>
<div class="t" style="left:361px;top:387.60px;width:123px;font-size:14.3px;line-height:14.3px;color:#000;letter-spacing:0.055517578125000355px;padding-left:3px;box-sizing:border-box;overflow:hidden;">25098ICB7</div>
<div class="t" style="left:484px;top:387.60px;width:246px;font-size:14.3px;line-height:14.3px;color:#000;letter-spacing:0.04926060267857089px;padding-left:3px;box-sizing:border-box;overflow:hidden;">0508615499077000000000</div>
<div class="t" style="left:730px;top:387.60px;width:88px;font-size:14.3px;line-height:14.3px;color:#000;letter-spacing:-0.09284319196428571px;padding-left:3px;box-sizing:border-box;overflow:hidden;">Pasal 21</div>
<div class="t" style="left:818px;top:387.60px;width:157px;font-size:14.3px;line-height:14.3px;color:#000;letter-spacing:0.10064086914062464px;padding-left:3px;box-sizing:border-box;overflow:hidden;">21-100-01</div>
<div class="t" style="left:975px;top:387.60px;width:77px;font-size:14.3px;line-height:14.3px;color:#000;letter-spacing:0.03px;padding-left:3px;box-sizing:border-box;overflow:hidden;">1871060601234</div>
<div class="t" style="left:1052px;top:388.99px;width:120px;font-size:13.6px;line-height:13.6px;color:#000;letter-spacing:-0.35px;padding-left:3px;box-sizing:border-box;overflow:hidden;">IQBAL FAJAR RAMADHAN</div>
<div class="t" style="left:1172px;top:387.60px;width:165px;font-size:14.3px;line-height:14.3px;color:#000;text-align:right;padding-right:2px;box-sizing:border-box;overflow:hidden;">2460014</div>
<div class="t" style="left:1337px;top:387.60px;width:112px;font-size:14.3px;line-height:14.3px;color:#000;text-align:right;padding-right:2px;box-sizing:border-box;overflow:hidden;">0</div>
<div class="t" style="left:1449px;top:387.60px;width:128px;font-size:14.3px;line-height:14.3px;color:#000;letter-spacing:0.07393624441964265px;padding-left:3px;box-sizing:border-box;">Tanpa Fasilitas</div>
<svg class="s" style="left:485px;top:384px;" width="7" height="7" viewBox="0 0 7 7"><path d="M0 0 L6 0 L0 6 Z" fill="#1b7a2e"/></svg>
<svg class="s" style="left:976px;top:384px;" width="7" height="7" viewBox="0 0 7 7"><path d="M0 0 L6 0 L0 6 Z" fill="#1b7a2e"/></svg>
<div class="t" style="left:25px;top:408.60px;width:120px;font-size:14.3px;line-height:14.3px;color:#000;letter-spacing:-0.1244357638888892px;padding-left:3px;box-sizing:border-box;overflow:hidden;">Oktober-P1</div>
<div class="t" style="left:145px;top:408.60px;width:81px;font-size:14.3px;line-height:14.3px;color:#000;text-align:right;padding-right:2px;box-sizing:border-box;overflow:hidden;">1</div>
<div class="t" style="left:226px;top:408.60px;width:135px;font-size:14.3px;line-height:14.3px;color:#000;letter-spacing:0.12255859375px;padding-left:3px;box-sizing:border-box;overflow:hidden;">Oktober 2025</div>
<div class="t" style="left:361px;top:408.60px;width:123px;font-size:14.3px;line-height:14.3px;color:#000;letter-spacing:-0.142608642578125px;padding-left:3px;box-sizing:border-box;overflow:hidden;">25098ICBA</div>
<div class="t" style="left:484px;top:408.60px;width:246px;font-size:14.3px;line-height:14.3px;color:#000;letter-spacing:0.04926060267857089px;padding-left:3px;box-sizing:border-box;overflow:hidden;">0508615499077000000000</div>
<div class="t" style="left:730px;top:408.60px;width:88px;font-size:14.3px;line-height:14.3px;color:#000;letter-spacing:-0.09284319196428571px;padding-left:3px;box-sizing:border-box;overflow:hidden;">Pasal 21</div>
<div class="t" style="left:818px;top:408.60px;width:157px;font-size:14.3px;line-height:14.3px;color:#000;letter-spacing:0.10064086914062464px;padding-left:3px;box-sizing:border-box;overflow:hidden;">21-100-01</div>
<div class="t" style="left:975px;top:408.60px;width:77px;font-size:14.3px;line-height:14.3px;color:#000;letter-spacing:0.03px;padding-left:3px;box-sizing:border-box;overflow:hidden;">5108013101234</div>
<div class="t" style="left:1052px;top:409.99px;width:120px;font-size:13.6px;line-height:13.6px;color:#000;letter-spacing:-0.35px;padding-left:3px;box-sizing:border-box;overflow:hidden;">RADIN ANDHIKA AJI</div>
<div class="t" style="left:1172px;top:408.60px;width:165px;font-size:14.3px;line-height:14.3px;color:#000;text-align:right;padding-right:2px;box-sizing:border-box;overflow:hidden;">2099007</div>
<div class="t" style="left:1337px;top:408.60px;width:112px;font-size:14.3px;line-height:14.3px;color:#000;text-align:right;padding-right:2px;box-sizing:border-box;overflow:hidden;">0</div>
<div class="t" style="left:1449px;top:408.60px;width:128px;font-size:14.3px;line-height:14.3px;color:#000;letter-spacing:0.07393624441964265px;padding-left:3px;box-sizing:border-box;">Tanpa Fasilitas</div>
<svg class="s" style="left:485px;top:405px;" width="7" height="7" viewBox="0 0 7 7"><path d="M0 0 L6 0 L0 6 Z" fill="#1b7a2e"/></svg>
<svg class="s" style="left:976px;top:405px;" width="7" height="7" viewBox="0 0 7 7"><path d="M0 0 L6 0 L0 6 Z" fill="#1b7a2e"/></svg>
<div class="t" style="left:25px;top:431.22px;width:120px;font-size:12.5px;line-height:12.5px;color:#000;letter-spacing:0.938818359375px;padding-left:3px;box-sizing:border-box;overflow:hidden;">November-P1</div>
<div class="t" style="left:145px;top:431.22px;width:81px;font-size:12.5px;line-height:12.5px;color:#000;text-align:right;padding-right:2px;box-sizing:border-box;overflow:hidden;">1</div>
<div class="t" style="left:226px;top:431.22px;width:135px;font-size:12.5px;line-height:12.5px;color:#000;letter-spacing:0.7132975260416666px;padding-left:3px;box-sizing:border-box;overflow:hidden;">November 2025</div>
<div class="t" style="left:361px;top:431.22px;width:123px;font-size:12.5px;line-height:12.5px;color:#000;letter-spacing:-0.0279541015625px;padding-left:3px;box-sizing:border-box;overflow:hidden;">25098K8G4</div>
<div class="t" style="left:484px;top:431.22px;width:246px;font-size:12.5px;line-height:12.5px;color:#000;letter-spacing:0.05038597470238095px;padding-left:3px;box-sizing:border-box;overflow:hidden;">0508615499077000000000</div>
<div class="t" style="left:730px;top:431.22px;width:88px;font-size:12.5px;line-height:12.5px;color:#000;letter-spacing:0.05071149553571429px;padding-left:3px;box-sizing:border-box;overflow:hidden;">Pasal 21</div>
<div class="t" style="left:818px;top:431.22px;width:157px;font-size:12.5px;line-height:12.5px;color:#000;letter-spacing:0.313934326171875px;padding-left:3px;box-sizing:border-box;overflow:hidden;">21-100-01</div>
<div class="t" style="left:975px;top:431.22px;width:77px;font-size:12.5px;line-height:12.5px;color:#000;padding-left:3px;box-sizing:border-box;overflow:hidden;">3326131410890</div>
<div class="t" style="left:1052px;top:431.22px;width:120px;font-size:12.5px;line-height:12.5px;color:#000;padding-left:3px;box-sizing:border-box;overflow:hidden;">OKI MARDINA AJI</div>
<div class="t" style="left:1172px;top:431.22px;width:165px;font-size:12.5px;line-height:12.5px;color:#000;text-align:right;padding-right:2px;box-sizing:border-box;overflow:hidden;">2856849</div>
<div class="t" style="left:1337px;top:431.22px;width:112px;font-size:12.5px;line-height:12.5px;color:#000;text-align:right;padding-right:2px;box-sizing:border-box;overflow:hidden;">0</div>
<div class="t" style="left:1449px;top:431.22px;width:128px;font-size:12.5px;line-height:12.5px;color:#000;letter-spacing:-0.03167724609375px;padding-left:3px;box-sizing:border-box;">Tanpa Fas</div>
<div class="t" style="left:1515px;top:431.22px;width:62px;font-size:12.5px;line-height:12.5px;color:#000;letter-spacing:0.9427490234375px;padding-left:1px;box-sizing:border-box;">litas</div>
<svg class="s" style="left:485px;top:426px;" width="7" height="7" viewBox="0 0 7 7"><path d="M0 0 L6 0 L0 6 Z" fill="#1b7a2e"/></svg>
<svg class="s" style="left:976px;top:426px;" width="7" height="7" viewBox="0 0 7 7"><path d="M0 0 L6 0 L0 6 Z" fill="#1b7a2e"/></svg>
<div class="t" style="left:25px;top:451.22px;width:120px;font-size:12.5px;line-height:12.5px;color:#000;letter-spacing:0.938818359375px;padding-left:3px;box-sizing:border-box;overflow:hidden;">November-P1</div>
<div class="t" style="left:145px;top:451.22px;width:81px;font-size:12.5px;line-height:12.5px;color:#000;text-align:right;padding-right:2px;box-sizing:border-box;overflow:hidden;">1</div>
<div class="t" style="left:226px;top:451.22px;width:135px;font-size:12.5px;line-height:12.5px;color:#000;letter-spacing:0.7132975260416666px;padding-left:3px;box-sizing:border-box;overflow:hidden;">November 2025</div>
<div class="t" style="left:361px;top:451.22px;width:123px;font-size:12.5px;line-height:12.5px;color:#000;letter-spacing:-0.0279541015625px;padding-left:3px;box-sizing:border-box;overflow:hidden;">25098K8G6</div>
<div class="t" style="left:484px;top:451.22px;width:246px;font-size:12.5px;line-height:12.5px;color:#000;letter-spacing:0.05038597470238095px;padding-left:3px;box-sizing:border-box;overflow:hidden;">0508615499077000000000</div>
<div class="t" style="left:730px;top:451.22px;width:88px;font-size:12.5px;line-height:12.5px;color:#000;letter-spacing:0.05071149553571429px;padding-left:3px;box-sizing:border-box;overflow:hidden;">Pasal 21</div>
<div class="t" style="left:818px;top:451.22px;width:157px;font-size:12.5px;line-height:12.5px;color:#000;letter-spacing:0.313934326171875px;padding-left:3px;box-sizing:border-box;overflow:hidden;">21-100-01</div>
<div class="t" style="left:975px;top:451.22px;width:77px;font-size:12.5px;line-height:12.5px;color:#000;padding-left:3px;box-sizing:border-box;overflow:hidden;">3329012504090</div>
<div class="t" style="left:1052px;top:451.22px;width:120px;font-size:12.5px;line-height:12.5px;color:#000;padding-left:3px;box-sizing:border-box;overflow:hidden;">TAUFIQ NUR BADRUDIN</div>
<div class="t" style="left:1172px;top:451.22px;width:165px;font-size:12.5px;line-height:12.5px;color:#000;text-align:right;padding-right:2px;box-sizing:border-box;overflow:hidden;">6616143</div>
<div class="t" style="left:1337px;top:451.22px;width:112px;font-size:12.5px;line-height:12.5px;color:#000;text-align:right;padding-right:2px;box-sizing:border-box;overflow:hidden;">66161</div>
<div class="t" style="left:1449px;top:451.22px;width:128px;font-size:12.5px;line-height:12.5px;color:#000;letter-spacing:-0.03167724609375px;padding-left:3px;box-sizing:border-box;">Tanpa Fas</div>
<div class="t" style="left:1515px;top:451.22px;width:62px;font-size:12.5px;line-height:12.5px;color:#000;letter-spacing:0.9427490234375px;padding-left:1px;box-sizing:border-box;">litas</div>
<svg class="s" style="left:485px;top:446px;" width="7" height="7" viewBox="0 0 7 7"><path d="M0 0 L6 0 L0 6 Z" fill="#1b7a2e"/></svg>
<svg class="s" style="left:976px;top:446px;" width="7" height="7" viewBox="0 0 7 7"><path d="M0 0 L6 0 L0 6 Z" fill="#1b7a2e"/></svg>
<div class="t" style="left:25px;top:471.22px;width:120px;font-size:12.5px;line-height:12.5px;color:#000;letter-spacing:0.938818359375px;padding-left:3px;box-sizing:border-box;overflow:hidden;">November-P1</div>
<div class="t" style="left:145px;top:471.22px;width:81px;font-size:12.5px;line-height:12.5px;color:#000;text-align:right;padding-right:2px;box-sizing:border-box;overflow:hidden;">1</div>
<div class="t" style="left:226px;top:471.22px;width:135px;font-size:12.5px;line-height:12.5px;color:#000;letter-spacing:0.7132975260416666px;padding-left:3px;box-sizing:border-box;overflow:hidden;">November 2025</div>
<div class="t" style="left:361px;top:471.22px;width:123px;font-size:12.5px;line-height:12.5px;color:#000;letter-spacing:-0.0279541015625px;padding-left:3px;box-sizing:border-box;overflow:hidden;">25098K8G8</div>
<div class="t" style="left:484px;top:471.22px;width:246px;font-size:12.5px;line-height:12.5px;color:#000;letter-spacing:0.05038597470238095px;padding-left:3px;box-sizing:border-box;overflow:hidden;">0508615499077000000000</div>
<div class="t" style="left:730px;top:471.22px;width:88px;font-size:12.5px;line-height:12.5px;color:#000;letter-spacing:0.05071149553571429px;padding-left:3px;box-sizing:border-box;overflow:hidden;">Pasal 21</div>
<div class="t" style="left:818px;top:471.22px;width:157px;font-size:12.5px;line-height:12.5px;color:#000;letter-spacing:0.313934326171875px;padding-left:3px;box-sizing:border-box;overflow:hidden;">21-100-01</div>
<div class="t" style="left:975px;top:471.22px;width:77px;font-size:12.5px;line-height:12.5px;color:#000;padding-left:3px;box-sizing:border-box;overflow:hidden;">3276061308990</div>
<div class="t" style="left:1052px;top:471.22px;width:120px;font-size:12.5px;line-height:12.5px;color:#000;padding-left:3px;box-sizing:border-box;overflow:hidden;">DODI ARIS SETIAWAN</div>
<div class="t" style="left:1172px;top:471.22px;width:165px;font-size:12.5px;line-height:12.5px;color:#000;text-align:right;padding-right:2px;box-sizing:border-box;overflow:hidden;">4242843</div>
<div class="t" style="left:1337px;top:471.22px;width:112px;font-size:12.5px;line-height:12.5px;color:#000;text-align:right;padding-right:2px;box-sizing:border-box;overflow:hidden;">0</div>
<div class="t" style="left:1449px;top:471.22px;width:128px;font-size:12.5px;line-height:12.5px;color:#000;letter-spacing:-0.03167724609375px;padding-left:3px;box-sizing:border-box;">Tanpa Fas</div>
<div class="t" style="left:1515px;top:471.22px;width:62px;font-size:12.5px;line-height:12.5px;color:#000;letter-spacing:0.9427490234375px;padding-left:1px;box-sizing:border-box;">litas</div>
<svg class="s" style="left:485px;top:466px;" width="7" height="7" viewBox="0 0 7 7"><path d="M0 0 L6 0 L0 6 Z" fill="#1b7a2e"/></svg>
<svg class="s" style="left:976px;top:466px;" width="7" height="7" viewBox="0 0 7 7"><path d="M0 0 L6 0 L0 6 Z" fill="#1b7a2e"/></svg>
<div class="t" style="left:25px;top:491.22px;width:120px;font-size:12.5px;line-height:12.5px;color:#000;letter-spacing:0.938818359375px;padding-left:3px;box-sizing:border-box;overflow:hidden;">November-P1</div>
<div class="t" style="left:145px;top:491.22px;width:81px;font-size:12.5px;line-height:12.5px;color:#000;text-align:right;padding-right:2px;box-sizing:border-box;overflow:hidden;">1</div>
<div class="t" style="left:226px;top:491.22px;width:135px;font-size:12.5px;line-height:12.5px;color:#000;letter-spacing:0.7132975260416666px;padding-left:3px;box-sizing:border-box;overflow:hidden;">November 2025</div>
<div class="t" style="left:361px;top:491.22px;width:123px;font-size:12.5px;line-height:12.5px;color:#000;letter-spacing:-0.0279541015625px;padding-left:3px;box-sizing:border-box;overflow:hidden;">25098K8G9</div>
<div class="t" style="left:484px;top:491.22px;width:246px;font-size:12.5px;line-height:12.5px;color:#000;letter-spacing:0.05038597470238095px;padding-left:3px;box-sizing:border-box;overflow:hidden;">0508615499077000000000</div>
<div class="t" style="left:730px;top:491.22px;width:88px;font-size:12.5px;line-height:12.5px;color:#000;letter-spacing:0.05071149553571429px;padding-left:3px;box-sizing:border-box;overflow:hidden;">Pasal 21</div>
<div class="t" style="left:818px;top:491.22px;width:157px;font-size:12.5px;line-height:12.5px;color:#000;letter-spacing:0.313934326171875px;padding-left:3px;box-sizing:border-box;overflow:hidden;">21-100-01</div>
<div class="t" style="left:975px;top:491.22px;width:77px;font-size:12.5px;line-height:12.5px;color:#000;padding-left:3px;box-sizing:border-box;overflow:hidden;">3205052207090</div>
<div class="t" style="left:1052px;top:491.22px;width:120px;font-size:12.5px;line-height:12.5px;color:#000;padding-left:3px;box-sizing:border-box;overflow:hidden;">SAHLAN MUBAROK</div>
<div class="t" style="left:1172px;top:491.22px;width:165px;font-size:12.5px;line-height:12.5px;color:#000;text-align:right;padding-right:2px;box-sizing:border-box;overflow:hidden;">3654716</div>
<div class="t" style="left:1337px;top:491.22px;width:112px;font-size:12.5px;line-height:12.5px;color:#000;text-align:right;padding-right:2px;box-sizing:border-box;overflow:hidden;">0</div>
<div class="t" style="left:1449px;top:491.22px;width:128px;font-size:12.5px;line-height:12.5px;color:#000;letter-spacing:-0.03167724609375px;padding-left:3px;box-sizing:border-box;">Tanpa Fas</div>
<div class="t" style="left:1515px;top:491.22px;width:62px;font-size:12.5px;line-height:12.5px;color:#000;letter-spacing:0.9427490234375px;padding-left:1px;box-sizing:border-box;">litas</div>
<svg class="s" style="left:485px;top:486px;" width="7" height="7" viewBox="0 0 7 7"><path d="M0 0 L6 0 L0 6 Z" fill="#1b7a2e"/></svg>
<svg class="s" style="left:976px;top:486px;" width="7" height="7" viewBox="0 0 7 7"><path d="M0 0 L6 0 L0 6 Z" fill="#1b7a2e"/></svg>
<div class="t" style="left:25px;top:511.22px;width:120px;font-size:12.5px;line-height:12.5px;color:#000;letter-spacing:0.938818359375px;padding-left:3px;box-sizing:border-box;overflow:hidden;">November-P1</div>
<div class="t" style="left:145px;top:511.22px;width:81px;font-size:12.5px;line-height:12.5px;color:#000;text-align:right;padding-right:2px;box-sizing:border-box;overflow:hidden;">1</div>
<div class="t" style="left:226px;top:511.22px;width:135px;font-size:12.5px;line-height:12.5px;color:#000;letter-spacing:0.7132975260416666px;padding-left:3px;box-sizing:border-box;overflow:hidden;">November 2025</div>
<div class="t" style="left:361px;top:511.22px;width:123px;font-size:12.5px;line-height:12.5px;color:#000;letter-spacing:-0.201141357421875px;padding-left:3px;box-sizing:border-box;overflow:hidden;">25098K8GA</div>
<div class="t" style="left:484px;top:511.22px;width:246px;font-size:12.5px;line-height:12.5px;color:#000;letter-spacing:0.05038597470238095px;padding-left:3px;box-sizing:border-box;overflow:hidden;">0508615499077000000000</div>
<div class="t" style="left:730px;top:511.22px;width:88px;font-size:12.5px;line-height:12.5px;color:#000;letter-spacing:0.05071149553571429px;padding-left:3px;box-sizing:border-box;overflow:hidden;">Pasal 21</div>
<div class="t" style="left:818px;top:511.22px;width:157px;font-size:12.5px;line-height:12.5px;color:#000;letter-spacing:0.313934326171875px;padding-left:3px;box-sizing:border-box;overflow:hidden;">21-100-01</div>
<div class="t" style="left:975px;top:511.22px;width:77px;font-size:12.5px;line-height:12.5px;color:#000;padding-left:3px;box-sizing:border-box;overflow:hidden;">3674032011990</div>
<div class="t" style="left:1052px;top:511.22px;width:120px;font-size:12.5px;line-height:12.5px;color:#000;padding-left:3px;box-sizing:border-box;overflow:hidden;">DJABID PROBOGIRI</div>
<div class="t" style="left:1172px;top:511.22px;width:165px;font-size:12.5px;line-height:12.5px;color:#000;text-align:right;padding-right:2px;box-sizing:border-box;overflow:hidden;">4184511</div>
<div class="t" style="left:1337px;top:511.22px;width:112px;font-size:12.5px;line-height:12.5px;color:#000;text-align:right;padding-right:2px;box-sizing:border-box;overflow:hidden;">0</div>
<div class="t" style="left:1449px;top:511.22px;width:128px;font-size:12.5px;line-height:12.5px;color:#000;letter-spacing:-0.03167724609375px;padding-left:3px;box-sizing:border-box;">Tanpa Fas</div>
<div class="t" style="left:1515px;top:511.22px;width:62px;font-size:12.5px;line-height:12.5px;color:#000;letter-spacing:0.9427490234375px;padding-left:1px;box-sizing:border-box;">litas</div>
<svg class="s" style="left:485px;top:506px;" width="7" height="7" viewBox="0 0 7 7"><path d="M0 0 L6 0 L0 6 Z" fill="#1b7a2e"/></svg>
<svg class="s" style="left:976px;top:506px;" width="7" height="7" viewBox="0 0 7 7"><path d="M0 0 L6 0 L0 6 Z" fill="#1b7a2e"/></svg>
<div class="t" style="left:25px;top:531.22px;width:120px;font-size:12.5px;line-height:12.5px;color:#000;letter-spacing:0.938818359375px;padding-left:3px;box-sizing:border-box;overflow:hidden;">November-P1</div>
<div class="t" style="left:145px;top:531.22px;width:81px;font-size:12.5px;line-height:12.5px;color:#000;text-align:right;padding-right:2px;box-sizing:border-box;overflow:hidden;">1</div>
<div class="t" style="left:226px;top:531.22px;width:135px;font-size:12.5px;line-height:12.5px;color:#000;letter-spacing:0.7132975260416666px;padding-left:3px;box-sizing:border-box;overflow:hidden;">November 2025</div>
<div class="t" style="left:361px;top:531.22px;width:123px;font-size:12.5px;line-height:12.5px;color:#000;letter-spacing:-0.201141357421875px;padding-left:3px;box-sizing:border-box;overflow:hidden;">25098K8GB</div>
<div class="t" style="left:484px;top:531.22px;width:246px;font-size:12.5px;line-height:12.5px;color:#000;letter-spacing:0.05038597470238095px;padding-left:3px;box-sizing:border-box;overflow:hidden;">0508615499077000000000</div>
<div class="t" style="left:730px;top:531.22px;width:88px;font-size:12.5px;line-height:12.5px;color:#000;letter-spacing:0.05071149553571429px;padding-left:3px;box-sizing:border-box;overflow:hidden;">Pasal 21</div>
<div class="t" style="left:818px;top:531.22px;width:157px;font-size:12.5px;line-height:12.5px;color:#000;letter-spacing:0.313934326171875px;padding-left:3px;box-sizing:border-box;overflow:hidden;">21-100-01</div>
<div class="t" style="left:975px;top:531.22px;width:77px;font-size:12.5px;line-height:12.5px;color:#000;padding-left:3px;box-sizing:border-box;overflow:hidden;">5101050610990</div>
<div class="t" style="left:1052px;top:531.22px;width:120px;font-size:12.5px;line-height:12.5px;color:#000;padding-left:3px;box-sizing:border-box;overflow:hidden;">RUSLAN HAZMI</div>
<div class="t" style="left:1172px;top:531.22px;width:165px;font-size:12.5px;line-height:12.5px;color:#000;text-align:right;padding-right:2px;box-sizing:border-box;overflow:hidden;">3695459</div>
<div class="t" style="left:1337px;top:531.22px;width:112px;font-size:12.5px;line-height:12.5px;color:#000;text-align:right;padding-right:2px;box-sizing:border-box;overflow:hidden;">0</div>
<div class="t" style="left:1449px;top:531.22px;width:128px;font-size:12.5px;line-height:12.5px;color:#000;letter-spacing:-0.03167724609375px;padding-left:3px;box-sizing:border-box;">Tanpa Fas</div>
<div class="t" style="left:1515px;top:531.22px;width:62px;font-size:12.5px;line-height:12.5px;color:#000;letter-spacing:0.9427490234375px;padding-left:1px;box-sizing:border-box;">litas</div>
<svg class="s" style="left:485px;top:526px;" width="7" height="7" viewBox="0 0 7 7"><path d="M0 0 L6 0 L0 6 Z" fill="#1b7a2e"/></svg>
<svg class="s" style="left:976px;top:526px;" width="7" height="7" viewBox="0 0 7 7"><path d="M0 0 L6 0 L0 6 Z" fill="#1b7a2e"/></svg>
<div class="t" style="left:25px;top:551.22px;width:120px;font-size:12.5px;line-height:12.5px;color:#000;letter-spacing:0.938818359375px;padding-left:3px;box-sizing:border-box;overflow:hidden;">November-P1</div>
<div class="t" style="left:145px;top:551.22px;width:81px;font-size:12.5px;line-height:12.5px;color:#000;text-align:right;padding-right:2px;box-sizing:border-box;overflow:hidden;">1</div>
<div class="t" style="left:226px;top:551.22px;width:135px;font-size:12.5px;line-height:12.5px;color:#000;letter-spacing:0.7132975260416666px;padding-left:3px;box-sizing:border-box;overflow:hidden;">November 2025</div>
<div class="t" style="left:361px;top:551.22px;width:123px;font-size:12.5px;line-height:12.5px;color:#000;letter-spacing:-0.287353515625px;padding-left:3px;box-sizing:border-box;overflow:hidden;">25098K8GC</div>
<div class="t" style="left:484px;top:551.22px;width:246px;font-size:12.5px;line-height:12.5px;color:#000;letter-spacing:0.05038597470238095px;padding-left:3px;box-sizing:border-box;overflow:hidden;">0508615499077000000000</div>
<div class="t" style="left:730px;top:551.22px;width:88px;font-size:12.5px;line-height:12.5px;color:#000;letter-spacing:0.05071149553571429px;padding-left:3px;box-sizing:border-box;overflow:hidden;">Pasal 21</div>
<div class="t" style="left:818px;top:551.22px;width:157px;font-size:12.5px;line-height:12.5px;color:#000;letter-spacing:0.313934326171875px;padding-left:3px;box-sizing:border-box;overflow:hidden;">21-100-01</div>
<div class="t" style="left:975px;top:551.22px;width:77px;font-size:12.5px;line-height:12.5px;color:#000;padding-left:3px;box-sizing:border-box;overflow:hidden;">3201032210890</div>
<div class="t" style="left:1052px;top:551.22px;width:120px;font-size:12.5px;line-height:12.5px;color:#000;padding-left:3px;box-sizing:border-box;overflow:hidden;">SUPRIATNA.R</div>
<div class="t" style="left:1172px;top:551.22px;width:165px;font-size:12.5px;line-height:12.5px;color:#000;text-align:right;padding-right:2px;box-sizing:border-box;overflow:hidden;">4979503</div>
<div class="t" style="left:1337px;top:551.22px;width:112px;font-size:12.5px;line-height:12.5px;color:#000;text-align:right;padding-right:2px;box-sizing:border-box;overflow:hidden;">0</div>
<div class="t" style="left:1449px;top:551.22px;width:128px;font-size:12.5px;line-height:12.5px;color:#000;letter-spacing:-0.03167724609375px;padding-left:3px;box-sizing:border-box;">Tanpa Fas</div>
<div class="t" style="left:1515px;top:551.22px;width:62px;font-size:12.5px;line-height:12.5px;color:#000;letter-spacing:0.9427490234375px;padding-left:1px;box-sizing:border-box;">litas</div>
<svg class="s" style="left:485px;top:546px;" width="7" height="7" viewBox="0 0 7 7"><path d="M0 0 L6 0 L0 6 Z" fill="#1b7a2e"/></svg>
<svg class="s" style="left:976px;top:546px;" width="7" height="7" viewBox="0 0 7 7"><path d="M0 0 L6 0 L0 6 Z" fill="#1b7a2e"/></svg>
<div class="t" style="left:25px;top:571.22px;width:120px;font-size:12.5px;line-height:12.5px;color:#000;letter-spacing:0.938818359375px;padding-left:3px;box-sizing:border-box;overflow:hidden;">November-P1</div>
<div class="t" style="left:145px;top:571.22px;width:81px;font-size:12.5px;line-height:12.5px;color:#000;text-align:right;padding-right:2px;box-sizing:border-box;overflow:hidden;">1</div>
<div class="t" style="left:226px;top:571.22px;width:135px;font-size:12.5px;line-height:12.5px;color:#000;letter-spacing:0.7132975260416666px;padding-left:3px;box-sizing:border-box;overflow:hidden;">November 2025</div>
<div class="t" style="left:361px;top:571.22px;width:123px;font-size:12.5px;line-height:12.5px;color:#000;letter-spacing:-0.287353515625px;padding-left:3px;box-sizing:border-box;overflow:hidden;">25098K8GD</div>
<div class="t" style="left:484px;top:571.22px;width:246px;font-size:12.5px;line-height:12.5px;color:#000;letter-spacing:0.05038597470238095px;padding-left:3px;box-sizing:border-box;overflow:hidden;">0508615499077000000000</div>
<div class="t" style="left:730px;top:571.22px;width:88px;font-size:12.5px;line-height:12.5px;color:#000;letter-spacing:0.05071149553571429px;padding-left:3px;box-sizing:border-box;overflow:hidden;">Pasal 21</div>
<div class="t" style="left:818px;top:571.22px;width:157px;font-size:12.5px;line-height:12.5px;color:#000;letter-spacing:0.313934326171875px;padding-left:3px;box-sizing:border-box;overflow:hidden;">21-100-01</div>
<div class="t" style="left:975px;top:571.22px;width:77px;font-size:12.5px;line-height:12.5px;color:#000;padding-left:3px;box-sizing:border-box;overflow:hidden;">1671033005090</div>
<div class="t" style="left:1052px;top:571.22px;width:120px;font-size:12.5px;line-height:12.5px;color:#000;padding-left:3px;box-sizing:border-box;overflow:hidden;">BAGAS ANGGARA SAPUTRA</div>
<div class="t" style="left:1172px;top:571.22px;width:165px;font-size:12.5px;line-height:12.5px;color:#000;text-align:right;padding-right:2px;box-sizing:border-box;overflow:hidden;">5043150</div>
<div class="t" style="left:1337px;top:571.22px;width:112px;font-size:12.5px;line-height:12.5px;color:#000;text-align:right;padding-right:2px;box-sizing:border-box;overflow:hidden;">0</div>
<div class="t" style="left:1449px;top:571.22px;width:128px;font-size:12.5px;line-height:12.5px;color:#000;letter-spacing:-0.03167724609375px;padding-left:3px;box-sizing:border-box;">Tanpa Fas</div>
<div class="t" style="left:1515px;top:571.22px;width:62px;font-size:12.5px;line-height:12.5px;color:#000;letter-spacing:0.9427490234375px;padding-left:1px;box-sizing:border-box;">litas</div>
<svg class="s" style="left:485px;top:566px;" width="7" height="7" viewBox="0 0 7 7"><path d="M0 0 L6 0 L0 6 Z" fill="#1b7a2e"/></svg>
<svg class="s" style="left:976px;top:566px;" width="7" height="7" viewBox="0 0 7 7"><path d="M0 0 L6 0 L0 6 Z" fill="#1b7a2e"/></svg>
<div class="t" style="left:25px;top:591.22px;width:120px;font-size:12.5px;line-height:12.5px;color:#000;letter-spacing:0.938818359375px;padding-left:3px;box-sizing:border-box;overflow:hidden;">November-P1</div>
<div class="t" style="left:145px;top:591.22px;width:81px;font-size:12.5px;line-height:12.5px;color:#000;text-align:right;padding-right:2px;box-sizing:border-box;overflow:hidden;">1</div>
<div class="t" style="left:226px;top:591.22px;width:135px;font-size:12.5px;line-height:12.5px;color:#000;letter-spacing:0.7132975260416666px;padding-left:3px;box-sizing:border-box;overflow:hidden;">November 2025</div>
<div class="t" style="left:361px;top:591.22px;width:123px;font-size:12.5px;line-height:12.5px;color:#000;letter-spacing:-0.201141357421875px;padding-left:3px;box-sizing:border-box;overflow:hidden;">25098K8GE</div>
<div class="t" style="left:484px;top:591.22px;width:246px;font-size:12.5px;line-height:12.5px;color:#000;letter-spacing:0.05038597470238095px;padding-left:3px;box-sizing:border-box;overflow:hidden;">0508615499077000000000</div>
<div class="t" style="left:730px;top:591.22px;width:88px;font-size:12.5px;line-height:12.5px;color:#000;letter-spacing:0.05071149553571429px;padding-left:3px;box-sizing:border-box;overflow:hidden;">Pasal 21</div>
<div class="t" style="left:818px;top:591.22px;width:157px;font-size:12.5px;line-height:12.5px;color:#000;letter-spacing:0.313934326171875px;padding-left:3px;box-sizing:border-box;overflow:hidden;">21-100-01</div>
<div class="t" style="left:975px;top:591.22px;width:77px;font-size:12.5px;line-height:12.5px;color:#000;padding-left:3px;box-sizing:border-box;overflow:hidden;">1671062504890</div>
<div class="t" style="left:1052px;top:591.22px;width:120px;font-size:12.5px;line-height:12.5px;color:#000;padding-left:3px;box-sizing:border-box;overflow:hidden;">RADEN HARRY</div>
<div class="t" style="left:1172px;top:591.22px;width:165px;font-size:12.5px;line-height:12.5px;color:#000;text-align:right;padding-right:2px;box-sizing:border-box;overflow:hidden;">4858150</div>
<div class="t" style="left:1337px;top:591.22px;width:112px;font-size:12.5px;line-height:12.5px;color:#000;text-align:right;padding-right:2px;box-sizing:border-box;overflow:hidden;">0</div>
<div class="t" style="left:1449px;top:591.22px;width:128px;font-size:12.5px;line-height:12.5px;color:#000;letter-spacing:-0.03167724609375px;padding-left:3px;box-sizing:border-box;">Tanpa Fas</div>
<div class="t" style="left:1515px;top:591.22px;width:62px;font-size:12.5px;line-height:12.5px;color:#000;letter-spacing:0.9427490234375px;padding-left:1px;box-sizing:border-box;">litas</div>
<svg class="s" style="left:485px;top:586px;" width="7" height="7" viewBox="0 0 7 7"><path d="M0 0 L6 0 L0 6 Z" fill="#1b7a2e"/></svg>
<svg class="s" style="left:976px;top:586px;" width="7" height="7" viewBox="0 0 7 7"><path d="M0 0 L6 0 L0 6 Z" fill="#1b7a2e"/></svg>
<div class="t" style="left:25px;top:611.22px;width:120px;font-size:12.5px;line-height:12.5px;color:#000;letter-spacing:0.938818359375px;padding-left:3px;box-sizing:border-box;overflow:hidden;">November-P1</div>
<div class="t" style="left:145px;top:611.22px;width:81px;font-size:12.5px;line-height:12.5px;color:#000;text-align:right;padding-right:2px;box-sizing:border-box;overflow:hidden;">1</div>
<div class="t" style="left:226px;top:611.22px;width:135px;font-size:12.5px;line-height:12.5px;color:#000;letter-spacing:0.7132975260416666px;padding-left:3px;box-sizing:border-box;overflow:hidden;">November 2025</div>
<div class="t" style="left:361px;top:611.22px;width:123px;font-size:12.5px;line-height:12.5px;color:#000;letter-spacing:-0.1134033203125px;padding-left:3px;box-sizing:border-box;overflow:hidden;">25098K8GF</div>
<div class="t" style="left:484px;top:611.22px;width:246px;font-size:12.5px;line-height:12.5px;color:#000;letter-spacing:0.05038597470238095px;padding-left:3px;box-sizing:border-box;overflow:hidden;">0508615499077000000000</div>
<div class="t" style="left:730px;top:611.22px;width:88px;font-size:12.5px;line-height:12.5px;color:#000;letter-spacing:0.05071149553571429px;padding-left:3px;box-sizing:border-box;overflow:hidden;">Pasal 21</div>
<div class="t" style="left:818px;top:611.22px;width:157px;font-size:12.5px;line-height:12.5px;color:#000;letter-spacing:0.313934326171875px;padding-left:3px;box-sizing:border-box;overflow:hidden;">21-100-01</div>
<div class="t" style="left:975px;top:611.22px;width:77px;font-size:12.5px;line-height:12.5px;color:#000;padding-left:3px;box-sizing:border-box;overflow:hidden;">3275052711990</div>
<div class="t" style="left:1052px;top:611.22px;width:120px;font-size:12.5px;line-height:12.5px;color:#000;padding-left:3px;box-sizing:border-box;overflow:hidden;">PUTU DUWATMAJA</div>
<div class="t" style="left:1172px;top:611.22px;width:165px;font-size:12.5px;line-height:12.5px;color:#000;text-align:right;padding-right:2px;box-sizing:border-box;overflow:hidden;">6486143</div>
<div class="t" style="left:1337px;top:611.22px;width:112px;font-size:12.5px;line-height:12.5px;color:#000;text-align:right;padding-right:2px;box-sizing:border-box;overflow:hidden;">0</div>
<div class="t" style="left:1449px;top:611.22px;width:128px;font-size:12.5px;line-height:12.5px;color:#000;letter-spacing:-0.03167724609375px;padding-left:3px;box-sizing:border-box;">Tanpa Fas</div>
<div class="t" style="left:1515px;top:611.22px;width:62px;font-size:12.5px;line-height:12.5px;color:#000;letter-spacing:0.9427490234375px;padding-left:1px;box-sizing:border-box;">litas</div>
<svg class="s" style="left:485px;top:606px;" width="7" height="7" viewBox="0 0 7 7"><path d="M0 0 L6 0 L0 6 Z" fill="#1b7a2e"/></svg>
<svg class="s" style="left:976px;top:606px;" width="7" height="7" viewBox="0 0 7 7"><path d="M0 0 L6 0 L0 6 Z" fill="#1b7a2e"/></svg>
<div class="t" style="left:25px;top:631.22px;width:120px;font-size:12.5px;line-height:12.5px;color:#000;letter-spacing:0.938818359375px;padding-left:3px;box-sizing:border-box;overflow:hidden;">November-P1</div>
<div class="t" style="left:145px;top:631.22px;width:81px;font-size:12.5px;line-height:12.5px;color:#000;text-align:right;padding-right:2px;box-sizing:border-box;overflow:hidden;">1</div>
<div class="t" style="left:226px;top:631.22px;width:135px;font-size:12.5px;line-height:12.5px;color:#000;letter-spacing:0.7132975260416666px;padding-left:3px;box-sizing:border-box;overflow:hidden;">November 2025</div>
<div class="t" style="left:361px;top:631.22px;width:123px;font-size:12.5px;line-height:12.5px;color:#000;letter-spacing:-0.287353515625px;padding-left:3px;box-sizing:border-box;overflow:hidden;">25098K8GH</div>
<div class="t" style="left:484px;top:631.22px;width:246px;font-size:12.5px;line-height:12.5px;color:#000;letter-spacing:0.05038597470238095px;padding-left:3px;box-sizing:border-box;overflow:hidden;">0508615499077000000000</div>
<div class="t" style="left:730px;top:631.22px;width:88px;font-size:12.5px;line-height:12.5px;color:#000;letter-spacing:0.05071149553571429px;padding-left:3px;box-sizing:border-box;overflow:hidden;">Pasal 21</div>
<div class="t" style="left:818px;top:631.22px;width:157px;font-size:12.5px;line-height:12.5px;color:#000;letter-spacing:0.313934326171875px;padding-left:3px;box-sizing:border-box;overflow:hidden;">21-100-01</div>
<div class="t" style="left:975px;top:631.22px;width:77px;font-size:12.5px;line-height:12.5px;color:#000;padding-left:3px;box-sizing:border-box;overflow:hidden;">3276061008090</div>
<div class="t" style="left:1052px;top:631.22px;width:120px;font-size:12.5px;line-height:12.5px;color:#000;padding-left:3px;box-sizing:border-box;overflow:hidden;">FAHREZY ALDI PERMANA</div>
<div class="t" style="left:1172px;top:631.22px;width:165px;font-size:12.5px;line-height:12.5px;color:#000;text-align:right;padding-right:2px;box-sizing:border-box;overflow:hidden;">6042013</div>
<div class="t" style="left:1337px;top:631.22px;width:112px;font-size:12.5px;line-height:12.5px;color:#000;text-align:right;padding-right:2px;box-sizing:border-box;overflow:hidden;">45315</div>
<div class="t" style="left:1449px;top:631.22px;width:128px;font-size:12.5px;line-height:12.5px;color:#000;letter-spacing:-0.03167724609375px;padding-left:3px;box-sizing:border-box;">Tanpa Fas</div>
<div class="t" style="left:1515px;top:631.22px;width:62px;font-size:12.5px;line-height:12.5px;color:#000;letter-spacing:0.9427490234375px;padding-left:1px;box-sizing:border-box;">litas</div>
<svg class="s" style="left:485px;top:626px;" width="7" height="7" viewBox="0 0 7 7"><path d="M0 0 L6 0 L0 6 Z" fill="#1b7a2e"/></svg>
<svg class="s" style="left:976px;top:626px;" width="7" height="7" viewBox="0 0 7 7"><path d="M0 0 L6 0 L0 6 Z" fill="#1b7a2e"/></svg>
<div class="t" style="left:25px;top:651.22px;width:120px;font-size:12.5px;line-height:12.5px;color:#000;letter-spacing:0.938818359375px;padding-left:3px;box-sizing:border-box;overflow:hidden;">November-P1</div>
<div class="t" style="left:145px;top:651.22px;width:81px;font-size:12.5px;line-height:12.5px;color:#000;text-align:right;padding-right:2px;box-sizing:border-box;overflow:hidden;">1</div>
<div class="t" style="left:226px;top:651.22px;width:135px;font-size:12.5px;line-height:12.5px;color:#000;letter-spacing:0.7132975260416666px;padding-left:3px;box-sizing:border-box;overflow:hidden;">November 2025</div>
<div class="t" style="left:361px;top:651.22px;width:123px;font-size:12.5px;line-height:12.5px;color:#000;letter-spacing:0.40692138671875px;padding-left:3px;box-sizing:border-box;overflow:hidden;">25098K8GI</div>
<div class="t" style="left:484px;top:651.22px;width:246px;font-size:12.5px;line-height:12.5px;color:#000;letter-spacing:0.05038597470238095px;padding-left:3px;box-sizing:border-box;overflow:hidden;">0508615499077000000000</div>
<div class="t" style="left:730px;top:651.22px;width:88px;font-size:12.5px;line-height:12.5px;color:#000;letter-spacing:0.05071149553571429px;padding-left:3px;box-sizing:border-box;overflow:hidden;">Pasal 21</div>
<div class="t" style="left:818px;top:651.22px;width:157px;font-size:12.5px;line-height:12.5px;color:#000;letter-spacing:0.313934326171875px;padding-left:3px;box-sizing:border-box;overflow:hidden;">21-100-01</div>
<div class="t" style="left:975px;top:651.22px;width:77px;font-size:12.5px;line-height:12.5px;color:#000;padding-left:3px;box-sizing:border-box;overflow:hidden;">3208130101990</div>
<div class="t" style="left:1052px;top:651.22px;width:120px;font-size:12.5px;line-height:12.5px;color:#000;padding-left:3px;box-sizing:border-box;overflow:hidden;">MUHAMMAD AINUL</div>
<div class="t" style="left:1172px;top:651.22px;width:165px;font-size:12.5px;line-height:12.5px;color:#000;text-align:right;padding-right:2px;box-sizing:border-box;overflow:hidden;">2820475</div>
<div class="t" style="left:1337px;top:651.22px;width:112px;font-size:12.5px;line-height:12.5px;color:#000;text-align:right;padding-right:2px;box-sizing:border-box;overflow:hidden;">0</div>
<div class="t" style="left:1449px;top:651.22px;width:128px;font-size:12.5px;line-height:12.5px;color:#000;letter-spacing:-0.03167724609375px;padding-left:3px;box-sizing:border-box;">Tanpa Fas</div>
<div class="t" style="left:1515px;top:651.22px;width:62px;font-size:12.5px;line-height:12.5px;color:#000;letter-spacing:0.9427490234375px;padding-left:1px;box-sizing:border-box;">litas</div>
<svg class="s" style="left:485px;top:646px;" width="7" height="7" viewBox="0 0 7 7"><path d="M0 0 L6 0 L0 6 Z" fill="#1b7a2e"/></svg>
<svg class="s" style="left:976px;top:646px;" width="7" height="7" viewBox="0 0 7 7"><path d="M0 0 L6 0 L0 6 Z" fill="#1b7a2e"/></svg>
<div class="t" style="left:25px;top:671.22px;width:120px;font-size:12.5px;line-height:12.5px;color:#000;letter-spacing:0.938818359375px;padding-left:3px;box-sizing:border-box;overflow:hidden;">November-P1</div>
<div class="t" style="left:145px;top:671.22px;width:81px;font-size:12.5px;line-height:12.5px;color:#000;text-align:right;padding-right:2px;box-sizing:border-box;overflow:hidden;">1</div>
<div class="t" style="left:226px;top:671.22px;width:135px;font-size:12.5px;line-height:12.5px;color:#000;letter-spacing:0.7132975260416666px;padding-left:3px;box-sizing:border-box;overflow:hidden;">November 2025</div>
<div class="t" style="left:361px;top:671.22px;width:123px;font-size:12.5px;line-height:12.5px;color:#000;letter-spacing:0.059783935546875px;padding-left:3px;box-sizing:border-box;overflow:hidden;">25098K8GJ</div>
<div class="t" style="left:484px;top:671.22px;width:246px;font-size:12.5px;line-height:12.5px;color:#000;letter-spacing:0.05038597470238095px;padding-left:3px;box-sizing:border-box;overflow:hidden;">0508615499077000000000</div>
<div class="t" style="left:730px;top:671.22px;width:88px;font-size:12.5px;line-height:12.5px;color:#000;letter-spacing:0.05071149553571429px;padding-left:3px;box-sizing:border-box;overflow:hidden;">Pasal 21</div>
<div class="t" style="left:818px;top:671.22px;width:157px;font-size:12.5px;line-height:12.5px;color:#000;letter-spacing:0.313934326171875px;padding-left:3px;box-sizing:border-box;overflow:hidden;">21-100-01</div>
<div class="t" style="left:975px;top:671.22px;width:77px;font-size:12.5px;line-height:12.5px;color:#000;padding-left:3px;box-sizing:border-box;overflow:hidden;">3603010507890</div>
<div class="t" style="left:1052px;top:671.22px;width:120px;font-size:12.5px;line-height:12.5px;color:#000;padding-left:3px;box-sizing:border-box;overflow:hidden;">SARIP HIDAYAT</div>
<div class="t" style="left:1172px;top:671.22px;width:165px;font-size:12.5px;line-height:12.5px;color:#000;text-align:right;padding-right:2px;box-sizing:border-box;overflow:hidden;">6009376</div>
<div class="t" style="left:1337px;top:671.22px;width:112px;font-size:12.5px;line-height:12.5px;color:#000;text-align:right;padding-right:2px;box-sizing:border-box;overflow:hidden;">0</div>
<div class="t" style="left:1449px;top:671.22px;width:128px;font-size:12.5px;line-height:12.5px;color:#000;letter-spacing:-0.03167724609375px;padding-left:3px;box-sizing:border-box;">Tanpa Fas</div>
<div class="t" style="left:1515px;top:671.22px;width:62px;font-size:12.5px;line-height:12.5px;color:#000;letter-spacing:0.9427490234375px;padding-left:1px;box-sizing:border-box;">litas</div>
<svg class="s" style="left:485px;top:666px;" width="7" height="7" viewBox="0 0 7 7"><path d="M0 0 L6 0 L0 6 Z" fill="#1b7a2e"/></svg>
<svg class="s" style="left:976px;top:666px;" width="7" height="7" viewBox="0 0 7 7"><path d="M0 0 L6 0 L0 6 Z" fill="#1b7a2e"/></svg>
<div class="t" style="left:25px;top:691.22px;width:120px;font-size:12.5px;line-height:12.5px;color:#000;letter-spacing:0.938818359375px;padding-left:3px;box-sizing:border-box;overflow:hidden;">November-P1</div>
<div class="t" style="left:145px;top:691.22px;width:81px;font-size:12.5px;line-height:12.5px;color:#000;text-align:right;padding-right:2px;box-sizing:border-box;overflow:hidden;">1</div>
<div class="t" style="left:226px;top:691.22px;width:135px;font-size:12.5px;line-height:12.5px;color:#000;letter-spacing:0.7132975260416666px;padding-left:3px;box-sizing:border-box;overflow:hidden;">November 2025</div>
<div class="t" style="left:361px;top:691.22px;width:123px;font-size:12.5px;line-height:12.5px;color:#000;letter-spacing:-0.201141357421875px;padding-left:3px;box-sizing:border-box;overflow:hidden;">25098K8GK</div>
<div class="t" style="left:484px;top:691.22px;width:246px;font-size:12.5px;line-height:12.5px;color:#000;letter-spacing:0.05038597470238095px;padding-left:3px;box-sizing:border-box;overflow:hidden;">0508615499077000000000</div>
<div class="t" style="left:730px;top:691.22px;width:88px;font-size:12.5px;line-height:12.5px;color:#000;letter-spacing:0.05071149553571429px;padding-left:3px;box-sizing:border-box;overflow:hidden;">Pasal 21</div>
<div class="t" style="left:818px;top:691.22px;width:157px;font-size:12.5px;line-height:12.5px;color:#000;letter-spacing:0.313934326171875px;padding-left:3px;box-sizing:border-box;overflow:hidden;">21-100-01</div>
<div class="t" style="left:975px;top:691.22px;width:77px;font-size:12.5px;line-height:12.5px;color:#000;padding-left:3px;box-sizing:border-box;overflow:hidden;">3215081303990</div>
<div class="t" style="left:1052px;top:691.22px;width:120px;font-size:12.5px;line-height:12.5px;color:#000;padding-left:3px;box-sizing:border-box;overflow:hidden;">HERI AZHAR RAMDHANI</div>
<div class="t" style="left:1172px;top:691.22px;width:165px;font-size:12.5px;line-height:12.5px;color:#000;text-align:right;padding-right:2px;box-sizing:border-box;overflow:hidden;">3603713</div>
<div class="t" style="left:1337px;top:691.22px;width:112px;font-size:12.5px;line-height:12.5px;color:#000;text-align:right;padding-right:2px;box-sizing:border-box;overflow:hidden;">0</div>
<div class="t" style="left:1449px;top:691.22px;width:128px;font-size:12.5px;line-height:12.5px;color:#000;letter-spacing:-0.03167724609375px;padding-left:3px;box-sizing:border-box;">Tanpa Fas</div>
<div class="t" style="left:1515px;top:691.22px;width:62px;font-size:12.5px;line-height:12.5px;color:#000;letter-spacing:0.9427490234375px;padding-left:1px;box-sizing:border-box;">litas</div>
<svg class="s" style="left:485px;top:686px;" width="7" height="7" viewBox="0 0 7 7"><path d="M0 0 L6 0 L0 6 Z" fill="#1b7a2e"/></svg>
<svg class="s" style="left:976px;top:686px;" width="7" height="7" viewBox="0 0 7 7"><path d="M0 0 L6 0 L0 6 Z" fill="#1b7a2e"/></svg>
<div class="t" style="left:25px;top:711.22px;width:120px;font-size:12.5px;line-height:12.5px;color:#000;letter-spacing:0.938818359375px;padding-left:3px;box-sizing:border-box;overflow:hidden;">November-P1</div>
<div class="t" style="left:145px;top:711.22px;width:81px;font-size:12.5px;line-height:12.5px;color:#000;text-align:right;padding-right:2px;box-sizing:border-box;overflow:hidden;">1</div>
<div class="t" style="left:226px;top:711.22px;width:135px;font-size:12.5px;line-height:12.5px;color:#000;letter-spacing:0.7132975260416666px;padding-left:3px;box-sizing:border-box;overflow:hidden;">November 2025</div>
<div class="t" style="left:361px;top:711.22px;width:123px;font-size:12.5px;line-height:12.5px;color:#000;letter-spacing:-0.0279541015625px;padding-left:3px;box-sizing:border-box;overflow:hidden;">25098K8GL</div>
<div class="t" style="left:484px;top:711.22px;width:246px;font-size:12.5px;line-height:12.5px;color:#000;letter-spacing:0.05038597470238095px;padding-left:3px;box-sizing:border-box;overflow:hidden;">0508615499077000000000</div>
<div class="t" style="left:730px;top:711.22px;width:88px;font-size:12.5px;line-height:12.5px;color:#000;letter-spacing:0.05071149553571429px;padding-left:3px;box-sizing:border-box;overflow:hidden;">Pasal 21</div>
<div class="t" style="left:818px;top:711.22px;width:157px;font-size:12.5px;line-height:12.5px;color:#000;letter-spacing:0.313934326171875px;padding-left:3px;box-sizing:border-box;overflow:hidden;">21-100-01</div>
<div class="t" style="left:975px;top:711.22px;width:77px;font-size:12.5px;line-height:12.5px;color:#000;padding-left:3px;box-sizing:border-box;overflow:hidden;">3174022805890</div>
<div class="t" style="left:1052px;top:711.22px;width:120px;font-size:12.5px;line-height:12.5px;color:#000;padding-left:3px;box-sizing:border-box;overflow:hidden;">SONGKO BUDI PRASETYO</div>
<div class="t" style="left:1172px;top:711.22px;width:165px;font-size:12.5px;line-height:12.5px;color:#000;text-align:right;padding-right:2px;box-sizing:border-box;overflow:hidden;">6436143</div>
<div class="t" style="left:1337px;top:711.22px;width:112px;font-size:12.5px;line-height:12.5px;color:#000;text-align:right;padding-right:2px;box-sizing:border-box;overflow:hidden;">16090</div>
<div class="t" style="left:1449px;top:711.22px;width:128px;font-size:12.5px;line-height:12.5px;color:#000;letter-spacing:-0.03167724609375px;padding-left:3px;box-sizing:border-box;">Tanpa Fas</div>
<div class="t" style="left:1515px;top:711.22px;width:62px;font-size:12.5px;line-height:12.5px;color:#000;letter-spacing:0.9427490234375px;padding-left:1px;box-sizing:border-box;">litas</div>
<svg class="s" style="left:485px;top:706px;" width="7" height="7" viewBox="0 0 7 7"><path d="M0 0 L6 0 L0 6 Z" fill="#1b7a2e"/></svg>
<svg class="s" style="left:976px;top:706px;" width="7" height="7" viewBox="0 0 7 7"><path d="M0 0 L6 0 L0 6 Z" fill="#1b7a2e"/></svg>
<div class="t" style="left:25px;top:731.22px;width:120px;font-size:12.5px;line-height:12.5px;color:#000;letter-spacing:0.938818359375px;padding-left:3px;box-sizing:border-box;overflow:hidden;">November-P1</div>
<div class="t" style="left:145px;top:731.22px;width:81px;font-size:12.5px;line-height:12.5px;color:#000;text-align:right;padding-right:2px;box-sizing:border-box;overflow:hidden;">1</div>
<div class="t" style="left:226px;top:731.22px;width:135px;font-size:12.5px;line-height:12.5px;color:#000;letter-spacing:0.7132975260416666px;padding-left:3px;box-sizing:border-box;overflow:hidden;">November 2025</div>
<div class="t" style="left:361px;top:731.22px;width:123px;font-size:12.5px;line-height:12.5px;color:#000;letter-spacing:-0.460540771484375px;padding-left:3px;box-sizing:border-box;overflow:hidden;">25098K8GM</div>
<div class="t" style="left:484px;top:731.22px;width:246px;font-size:12.5px;line-height:12.5px;color:#000;letter-spacing:0.05038597470238095px;padding-left:3px;box-sizing:border-box;overflow:hidden;">0508615499077000000000</div>
<div class="t" style="left:730px;top:731.22px;width:88px;font-size:12.5px;line-height:12.5px;color:#000;letter-spacing:0.05071149553571429px;padding-left:3px;box-sizing:border-box;overflow:hidden;">Pasal 21</div>
<div class="t" style="left:818px;top:731.22px;width:157px;font-size:12.5px;line-height:12.5px;color:#000;letter-spacing:0.313934326171875px;padding-left:3px;box-sizing:border-box;overflow:hidden;">21-100-01</div>
<div class="t" style="left:975px;top:731.22px;width:77px;font-size:12.5px;line-height:12.5px;color:#000;padding-left:3px;box-sizing:border-box;overflow:hidden;">1607101209090</div>
<div class="t" style="left:1052px;top:731.22px;width:120px;font-size:12.5px;line-height:12.5px;color:#000;padding-left:3px;box-sizing:border-box;overflow:hidden;">RIZKI TRI HADI</div>
<div class="t" style="left:1172px;top:731.22px;width:165px;font-size:12.5px;line-height:12.5px;color:#000;text-align:right;padding-right:2px;box-sizing:border-box;overflow:hidden;">1823015</div>
<div class="t" style="left:1337px;top:731.22px;width:112px;font-size:12.5px;line-height:12.5px;color:#000;text-align:right;padding-right:2px;box-sizing:border-box;overflow:hidden;">0</div>
<div class="t" style="left:1449px;top:731.22px;width:128px;font-size:12.5px;line-height:12.5px;color:#000;letter-spacing:-0.03167724609375px;padding-left:3px;box-sizing:border-box;">Tanpa Fas</div>
<div class="t" style="left:1515px;top:731.22px;width:62px;font-size:12.5px;line-height:12.5px;color:#000;letter-spacing:0.9427490234375px;padding-left:1px;box-sizing:border-box;">litas</div>
<svg class="s" style="left:485px;top:726px;" width="7" height="7" viewBox="0 0 7 7"><path d="M0 0 L6 0 L0 6 Z" fill="#1b7a2e"/></svg>
<svg class="s" style="left:976px;top:726px;" width="7" height="7" viewBox="0 0 7 7"><path d="M0 0 L6 0 L0 6 Z" fill="#1b7a2e"/></svg>
<div class="t" style="left:25px;top:751.22px;width:120px;font-size:12.5px;line-height:12.5px;color:#000;letter-spacing:0.938818359375px;padding-left:3px;box-sizing:border-box;overflow:hidden;">November-P1</div>
<div class="t" style="left:145px;top:751.22px;width:81px;font-size:12.5px;line-height:12.5px;color:#000;text-align:right;padding-right:2px;box-sizing:border-box;overflow:hidden;">1</div>
<div class="t" style="left:226px;top:751.22px;width:135px;font-size:12.5px;line-height:12.5px;color:#000;letter-spacing:0.7132975260416666px;padding-left:3px;box-sizing:border-box;overflow:hidden;">November 2025</div>
<div class="t" style="left:361px;top:751.22px;width:123px;font-size:12.5px;line-height:12.5px;color:#000;letter-spacing:-0.287353515625px;padding-left:3px;box-sizing:border-box;overflow:hidden;">25098K8GN</div>
<div class="t" style="left:484px;top:751.22px;width:246px;font-size:12.5px;line-height:12.5px;color:#000;letter-spacing:0.05038597470238095px;padding-left:3px;box-sizing:border-box;overflow:hidden;">0508615499077000000000</div>
<div class="t" style="left:730px;top:751.22px;width:88px;font-size:12.5px;line-height:12.5px;color:#000;letter-spacing:0.05071149553571429px;padding-left:3px;box-sizing:border-box;overflow:hidden;">Pasal 21</div>
<div class="t" style="left:818px;top:751.22px;width:157px;font-size:12.5px;line-height:12.5px;color:#000;letter-spacing:0.313934326171875px;padding-left:3px;box-sizing:border-box;overflow:hidden;">21-100-01</div>
<div class="t" style="left:975px;top:751.22px;width:77px;font-size:12.5px;line-height:12.5px;color:#000;padding-left:3px;box-sizing:border-box;overflow:hidden;">1671072908990</div>
<div class="t" style="left:1052px;top:751.22px;width:120px;font-size:12.5px;line-height:12.5px;color:#000;padding-left:3px;box-sizing:border-box;overflow:hidden;">BOWO TRI AGUNG</div>
<div class="t" style="left:1172px;top:751.22px;width:165px;font-size:12.5px;line-height:12.5px;color:#000;text-align:right;padding-right:2px;box-sizing:border-box;overflow:hidden;">5075315</div>
<div class="t" style="left:1337px;top:751.22px;width:112px;font-size:12.5px;line-height:12.5px;color:#000;text-align:right;padding-right:2px;box-sizing:border-box;overflow:hidden;">0</div>
<div class="t" style="left:1449px;top:751.22px;width:128px;font-size:12.5px;line-height:12.5px;color:#000;letter-spacing:-0.03167724609375px;padding-left:3px;box-sizing:border-box;">Tanpa Fas</div>
<div class="t" style="left:1515px;top:751.22px;width:62px;font-size:12.5px;line-height:12.5px;color:#000;letter-spacing:0.9427490234375px;padding-left:1px;box-sizing:border-box;">litas</div>
<svg class="s" style="left:485px;top:746px;" width="7" height="7" viewBox="0 0 7 7"><path d="M0 0 L6 0 L0 6 Z" fill="#1b7a2e"/></svg>
<svg class="s" style="left:976px;top:746px;" width="7" height="7" viewBox="0 0 7 7"><path d="M0 0 L6 0 L0 6 Z" fill="#1b7a2e"/></svg>
<div class="t" style="left:25px;top:771.22px;width:120px;font-size:12.5px;line-height:12.5px;color:#000;letter-spacing:0.938818359375px;padding-left:3px;box-sizing:border-box;overflow:hidden;">November-P1</div>
<div class="t" style="left:145px;top:771.22px;width:81px;font-size:12.5px;line-height:12.5px;color:#000;text-align:right;padding-right:2px;box-sizing:border-box;overflow:hidden;">1</div>
<div class="t" style="left:226px;top:771.22px;width:135px;font-size:12.5px;line-height:12.5px;color:#000;letter-spacing:0.7132975260416666px;padding-left:3px;box-sizing:border-box;overflow:hidden;">November 2025</div>
<div class="t" style="left:361px;top:771.22px;width:123px;font-size:12.5px;line-height:12.5px;color:#000;letter-spacing:-0.37432861328125px;padding-left:3px;box-sizing:border-box;overflow:hidden;">25098K8GO</div>
<div class="t" style="left:484px;top:771.22px;width:246px;font-size:12.5px;line-height:12.5px;color:#000;letter-spacing:0.05038597470238095px;padding-left:3px;box-sizing:border-box;overflow:hidden;">0508615499077000000000</div>
<div class="t" style="left:730px;top:771.22px;width:88px;font-size:12.5px;line-height:12.5px;color:#000;letter-spacing:0.05071149553571429px;padding-left:3px;box-sizing:border-box;overflow:hidden;">Pasal 21</div>
<div class="t" style="left:818px;top:771.22px;width:157px;font-size:12.5px;line-height:12.5px;color:#000;letter-spacing:0.313934326171875px;padding-left:3px;box-sizing:border-box;overflow:hidden;">21-100-01</div>
<div class="t" style="left:975px;top:771.22px;width:77px;font-size:12.5px;line-height:12.5px;color:#000;padding-left:3px;box-sizing:border-box;overflow:hidden;">1671112310890</div>
<div class="t" style="left:1052px;top:771.22px;width:120px;font-size:12.5px;line-height:12.5px;color:#000;padding-left:3px;box-sizing:border-box;overflow:hidden;">R.M ROCKY ARIANSYAH</div>
<div class="t" style="left:1172px;top:771.22px;width:165px;font-size:12.5px;line-height:12.5px;color:#000;text-align:right;padding-right:2px;box-sizing:border-box;overflow:hidden;">6373125</div>
<div class="t" style="left:1337px;top:771.22px;width:112px;font-size:12.5px;line-height:12.5px;color:#000;text-align:right;padding-right:2px;box-sizing:border-box;overflow:hidden;">0</div>
<div class="t" style="left:1449px;top:771.22px;width:128px;font-size:12.5px;line-height:12.5px;color:#000;letter-spacing:-0.03167724609375px;padding-left:3px;box-sizing:border-box;">Tanpa Fas</div>
<div class="t" style="left:1515px;top:771.22px;width:62px;font-size:12.5px;line-height:12.5px;color:#000;letter-spacing:0.9427490234375px;padding-left:1px;box-sizing:border-box;">litas</div>
<svg class="s" style="left:485px;top:766px;" width="7" height="7" viewBox="0 0 7 7"><path d="M0 0 L6 0 L0 6 Z" fill="#1b7a2e"/></svg>
<svg class="s" style="left:976px;top:766px;" width="7" height="7" viewBox="0 0 7 7"><path d="M0 0 L6 0 L0 6 Z" fill="#1b7a2e"/></svg>
<div class="t" style="left:25px;top:791.22px;width:120px;font-size:12.5px;line-height:12.5px;color:#000;letter-spacing:0.938818359375px;padding-left:3px;box-sizing:border-box;overflow:hidden;">November-P1</div>
<div class="t" style="left:145px;top:791.22px;width:81px;font-size:12.5px;line-height:12.5px;color:#000;text-align:right;padding-right:2px;box-sizing:border-box;overflow:hidden;">1</div>
<div class="t" style="left:226px;top:791.22px;width:135px;font-size:12.5px;line-height:12.5px;color:#000;letter-spacing:0.7132975260416666px;padding-left:3px;box-sizing:border-box;overflow:hidden;">November 2025</div>
<div class="t" style="left:361px;top:791.22px;width:123px;font-size:12.5px;line-height:12.5px;color:#000;letter-spacing:-0.201141357421875px;padding-left:3px;box-sizing:border-box;overflow:hidden;">25098K8GP</div>
<div class="t" style="left:484px;top:791.22px;width:246px;font-size:12.5px;line-height:12.5px;color:#000;letter-spacing:0.05038597470238095px;padding-left:3px;box-sizing:border-box;overflow:hidden;">0508615499077000000000</div>
<div class="t" style="left:730px;top:791.22px;width:88px;font-size:12.5px;line-height:12.5px;color:#000;letter-spacing:0.05071149553571429px;padding-left:3px;box-sizing:border-box;overflow:hidden;">Pasal 21</div>
<div class="t" style="left:818px;top:791.22px;width:157px;font-size:12.5px;line-height:12.5px;color:#000;letter-spacing:0.313934326171875px;padding-left:3px;box-sizing:border-box;overflow:hidden;">21-100-01</div>
<div class="t" style="left:975px;top:791.22px;width:77px;font-size:12.5px;line-height:12.5px;color:#000;padding-left:3px;box-sizing:border-box;overflow:hidden;">1671054305090</div>
<div class="t" style="left:1052px;top:791.22px;width:120px;font-size:12.5px;line-height:12.5px;color:#000;padding-left:3px;box-sizing:border-box;overflow:hidden;">MELLANI AISWARIA</div>
<div class="t" style="left:1172px;top:791.22px;width:165px;font-size:12.5px;line-height:12.5px;color:#000;text-align:right;padding-right:2px;box-sizing:border-box;overflow:hidden;">4749815</div>
<div class="t" style="left:1337px;top:791.22px;width:112px;font-size:12.5px;line-height:12.5px;color:#000;text-align:right;padding-right:2px;box-sizing:border-box;overflow:hidden;">0</div>
<div class="t" style="left:1449px;top:791.22px;width:128px;font-size:12.5px;line-height:12.5px;color:#000;letter-spacing:-0.03167724609375px;padding-left:3px;box-sizing:border-box;">Tanpa Fas</div>
<div class="t" style="left:1515px;top:791.22px;width:62px;font-size:12.5px;line-height:12.5px;color:#000;letter-spacing:0.9427490234375px;padding-left:1px;box-sizing:border-box;">litas</div>
<svg class="s" style="left:485px;top:786px;" width="7" height="7" viewBox="0 0 7 7"><path d="M0 0 L6 0 L0 6 Z" fill="#1b7a2e"/></svg>
<svg class="s" style="left:976px;top:786px;" width="7" height="7" viewBox="0 0 7 7"><path d="M0 0 L6 0 L0 6 Z" fill="#1b7a2e"/></svg>
<div class="t" style="left:25px;top:811.22px;width:120px;font-size:12.5px;line-height:12.5px;color:#000;letter-spacing:0.938818359375px;padding-left:3px;box-sizing:border-box;overflow:hidden;">November-P1</div>
<div class="t" style="left:145px;top:811.22px;width:81px;font-size:12.5px;line-height:12.5px;color:#000;text-align:right;padding-right:2px;box-sizing:border-box;overflow:hidden;">1</div>
<div class="t" style="left:226px;top:811.22px;width:135px;font-size:12.5px;line-height:12.5px;color:#000;letter-spacing:0.7132975260416666px;padding-left:3px;box-sizing:border-box;overflow:hidden;">November 2025</div>
<div class="t" style="left:361px;top:811.22px;width:123px;font-size:12.5px;line-height:12.5px;color:#000;letter-spacing:-0.37432861328125px;padding-left:3px;box-sizing:border-box;overflow:hidden;">25098K8GQ</div>
<div class="t" style="left:484px;top:811.22px;width:246px;font-size:12.5px;line-height:12.5px;color:#000;letter-spacing:0.05038597470238095px;padding-left:3px;box-sizing:border-box;overflow:hidden;">0508615499077000000000</div>
<div class="t" style="left:730px;top:811.22px;width:88px;font-size:12.5px;line-height:12.5px;color:#000;letter-spacing:0.05071149553571429px;padding-left:3px;box-sizing:border-box;overflow:hidden;">Pasal 21</div>
<div class="t" style="left:818px;top:811.22px;width:157px;font-size:12.5px;line-height:12.5px;color:#000;letter-spacing:0.313934326171875px;padding-left:3px;box-sizing:border-box;overflow:hidden;">21-100-01</div>
<div class="t" style="left:975px;top:811.22px;width:77px;font-size:12.5px;line-height:12.5px;color:#000;padding-left:3px;box-sizing:border-box;overflow:hidden;">3603011911890</div>
<div class="t" style="left:1052px;top:811.22px;width:120px;font-size:12.5px;line-height:12.5px;color:#000;padding-left:3px;box-sizing:border-box;overflow:hidden;">BAMBANG AGUS WIBOWO</div>
<div class="t" style="left:1172px;top:811.22px;width:165px;font-size:12.5px;line-height:12.5px;color:#000;text-align:right;padding-right:2px;box-sizing:border-box;overflow:hidden;">5612421</div>
<div class="t" style="left:1337px;top:811.22px;width:112px;font-size:12.5px;line-height:12.5px;color:#000;text-align:right;padding-right:2px;box-sizing:border-box;overflow:hidden;">0</div>
<div class="t" style="left:1449px;top:811.22px;width:128px;font-size:12.5px;line-height:12.5px;color:#000;letter-spacing:-0.03167724609375px;padding-left:3px;box-sizing:border-box;">Tanpa Fas</div>
<div class="t" style="left:1515px;top:811.22px;width:62px;font-size:12.5px;line-height:12.5px;color:#000;letter-spacing:0.9427490234375px;padding-left:1px;box-sizing:border-box;">litas</div>
<svg class="s" style="left:485px;top:806px;" width="7" height="7" viewBox="0 0 7 7"><path d="M0 0 L6 0 L0 6 Z" fill="#1b7a2e"/></svg>
<svg class="s" style="left:976px;top:806px;" width="7" height="7" viewBox="0 0 7 7"><path d="M0 0 L6 0 L0 6 Z" fill="#1b7a2e"/></svg>
<div class="t" style="left:25px;top:831.22px;width:120px;font-size:12.5px;line-height:12.5px;color:#000;letter-spacing:0.938818359375px;padding-left:3px;box-sizing:border-box;overflow:hidden;">November-P1</div>
<div class="t" style="left:145px;top:831.22px;width:81px;font-size:12.5px;line-height:12.5px;color:#000;text-align:right;padding-right:2px;box-sizing:border-box;overflow:hidden;">1</div>
<div class="t" style="left:226px;top:831.22px;width:135px;font-size:12.5px;line-height:12.5px;color:#000;letter-spacing:0.7132975260416666px;padding-left:3px;box-sizing:border-box;overflow:hidden;">November 2025</div>
<div class="t" style="left:361px;top:831.22px;width:123px;font-size:12.5px;line-height:12.5px;color:#000;letter-spacing:-0.287353515625px;padding-left:3px;box-sizing:border-box;overflow:hidden;">25098K8GR</div>
<div class="t" style="left:484px;top:831.22px;width:246px;font-size:12.5px;line-height:12.5px;color:#000;letter-spacing:0.05038597470238095px;padding-left:3px;box-sizing:border-box;overflow:hidden;">0508615499077000000000</div>
<div class="t" style="left:730px;top:831.22px;width:88px;font-size:12.5px;line-height:12.5px;color:#000;letter-spacing:0.05071149553571429px;padding-left:3px;box-sizing:border-box;overflow:hidden;">Pasal 21</div>
<div class="t" style="left:818px;top:831.22px;width:157px;font-size:12.5px;line-height:12.5px;color:#000;letter-spacing:0.313934326171875px;padding-left:3px;box-sizing:border-box;overflow:hidden;">21-100-01</div>
<div class="t" style="left:975px;top:831.22px;width:77px;font-size:12.5px;line-height:12.5px;color:#000;padding-left:3px;box-sizing:border-box;overflow:hidden;">1603072906990</div>
<div class="t" style="left:1052px;top:831.22px;width:120px;font-size:12.5px;line-height:12.5px;color:#000;padding-left:3px;box-sizing:border-box;overflow:hidden;">MUHAMMAD RHAMADAN</div>
<div class="t" style="left:1172px;top:831.22px;width:165px;font-size:12.5px;line-height:12.5px;color:#000;text-align:right;padding-right:2px;box-sizing:border-box;overflow:hidden;">2554215</div>
<div class="t" style="left:1337px;top:831.22px;width:112px;font-size:12.5px;line-height:12.5px;color:#000;text-align:right;padding-right:2px;box-sizing:border-box;overflow:hidden;">0</div>
<div class="t" style="left:1449px;top:831.22px;width:128px;font-size:12.5px;line-height:12.5px;color:#000;letter-spacing:-0.03167724609375px;padding-left:3px;box-sizing:border-box;">Tanpa Fas</div>
<div class="t" style="left:1515px;top:831.22px;width:62px;font-size:12.5px;line-height:12.5px;color:#000;letter-spacing:0.9427490234375px;padding-left:1px;box-sizing:border-box;">litas</div>
<svg class="s" style="left:485px;top:826px;" width="7" height="7" viewBox="0 0 7 7"><path d="M0 0 L6 0 L0 6 Z" fill="#1b7a2e"/></svg>
<svg class="s" style="left:976px;top:826px;" width="7" height="7" viewBox="0 0 7 7"><path d="M0 0 L6 0 L0 6 Z" fill="#1b7a2e"/></svg>
<div class="t" style="left:25px;top:851.22px;width:120px;font-size:12.5px;line-height:12.5px;color:#000;letter-spacing:0.938818359375px;padding-left:3px;box-sizing:border-box;overflow:hidden;">November-P1</div>
<div class="t" style="left:145px;top:851.22px;width:81px;font-size:12.5px;line-height:12.5px;color:#000;text-align:right;padding-right:2px;box-sizing:border-box;overflow:hidden;">1</div>
<div class="t" style="left:226px;top:851.22px;width:135px;font-size:12.5px;line-height:12.5px;color:#000;letter-spacing:0.7132975260416666px;padding-left:3px;box-sizing:border-box;overflow:hidden;">November 2025</div>
<div class="t" style="left:361px;top:851.22px;width:123px;font-size:12.5px;line-height:12.5px;color:#000;letter-spacing:-0.201141357421875px;padding-left:3px;box-sizing:border-box;overflow:hidden;">25098K8GS</div>
<div class="t" style="left:484px;top:851.22px;width:246px;font-size:12.5px;line-height:12.5px;color:#000;letter-spacing:0.05038597470238095px;padding-left:3px;box-sizing:border-box;overflow:hidden;">0508615499077000000000</div>
<div class="t" style="left:730px;top:851.22px;width:88px;font-size:12.5px;line-height:12.5px;color:#000;letter-spacing:0.05071149553571429px;padding-left:3px;box-sizing:border-box;overflow:hidden;">Pasal 21</div>
<div class="t" style="left:818px;top:851.22px;width:157px;font-size:12.5px;line-height:12.5px;color:#000;letter-spacing:0.313934326171875px;padding-left:3px;box-sizing:border-box;overflow:hidden;">21-100-01</div>
<div class="t" style="left:975px;top:851.22px;width:77px;font-size:12.5px;line-height:12.5px;color:#000;padding-left:3px;box-sizing:border-box;overflow:hidden;">5108051004990</div>
<div class="t" style="left:1052px;top:851.22px;width:120px;font-size:12.5px;line-height:12.5px;color:#000;padding-left:3px;box-sizing:border-box;overflow:hidden;">MUH SOFIAN MAWARDI</div>
<div class="t" style="left:1172px;top:851.22px;width:165px;font-size:12.5px;line-height:12.5px;color:#000;text-align:right;padding-right:2px;box-sizing:border-box;overflow:hidden;">4594089</div>
<div class="t" style="left:1337px;top:851.22px;width:112px;font-size:12.5px;line-height:12.5px;color:#000;text-align:right;padding-right:2px;box-sizing:border-box;overflow:hidden;">0</div>
<div class="t" style="left:1449px;top:851.22px;width:128px;font-size:12.5px;line-height:12.5px;color:#000;letter-spacing:-0.03167724609375px;padding-left:3px;box-sizing:border-box;">Tanpa Fas</div>
<div class="t" style="left:1515px;top:851.22px;width:62px;font-size:12.5px;line-height:12.5px;color:#000;letter-spacing:0.9427490234375px;padding-left:1px;box-sizing:border-box;">litas</div>
<svg class="s" style="left:485px;top:846px;" width="7" height="7" viewBox="0 0 7 7"><path d="M0 0 L6 0 L0 6 Z" fill="#1b7a2e"/></svg>
<svg class="s" style="left:976px;top:846px;" width="7" height="7" viewBox="0 0 7 7"><path d="M0 0 L6 0 L0 6 Z" fill="#1b7a2e"/></svg>
<div class="t" style="left:25px;top:871.22px;width:120px;font-size:12.5px;line-height:12.5px;color:#000;letter-spacing:0.938818359375px;padding-left:3px;box-sizing:border-box;overflow:hidden;">November-P1</div>
<div class="t" style="left:145px;top:871.22px;width:81px;font-size:12.5px;line-height:12.5px;color:#000;text-align:right;padding-right:2px;box-sizing:border-box;overflow:hidden;">1</div>
<div class="t" style="left:226px;top:871.22px;width:135px;font-size:12.5px;line-height:12.5px;color:#000;letter-spacing:0.7132975260416666px;padding-left:3px;box-sizing:border-box;overflow:hidden;">November 2025</div>
<div class="t" style="left:361px;top:871.22px;width:123px;font-size:12.5px;line-height:12.5px;color:#000;letter-spacing:-0.1134033203125px;padding-left:3px;box-sizing:border-box;overflow:hidden;">25098K8GT</div>
<div class="t" style="left:484px;top:871.22px;width:246px;font-size:12.5px;line-height:12.5px;color:#000;letter-spacing:0.05038597470238095px;padding-left:3px;box-sizing:border-box;overflow:hidden;">0508615499077000000000</div>
<div class="t" style="left:730px;top:871.22px;width:88px;font-size:12.5px;line-height:12.5px;color:#000;letter-spacing:0.05071149553571429px;padding-left:3px;box-sizing:border-box;overflow:hidden;">Pasal 21</div>
<div class="t" style="left:818px;top:871.22px;width:157px;font-size:12.5px;line-height:12.5px;color:#000;letter-spacing:0.313934326171875px;padding-left:3px;box-sizing:border-box;overflow:hidden;">21-100-01</div>
<div class="t" style="left:975px;top:871.22px;width:77px;font-size:12.5px;line-height:12.5px;color:#000;padding-left:3px;box-sizing:border-box;overflow:hidden;">3671061502890</div>
<div class="t" style="left:1052px;top:871.22px;width:120px;font-size:12.5px;line-height:12.5px;color:#000;padding-left:3px;box-sizing:border-box;overflow:hidden;">ADI FEBRIANTO</div>
<div class="t" style="left:1172px;top:871.22px;width:165px;font-size:12.5px;line-height:12.5px;color:#000;text-align:right;padding-right:2px;box-sizing:border-box;overflow:hidden;">3462861</div>
<div class="t" style="left:1337px;top:871.22px;width:112px;font-size:12.5px;line-height:12.5px;color:#000;text-align:right;padding-right:2px;box-sizing:border-box;overflow:hidden;">0</div>
<div class="t" style="left:1449px;top:871.22px;width:128px;font-size:12.5px;line-height:12.5px;color:#000;letter-spacing:-0.03167724609375px;padding-left:3px;box-sizing:border-box;">Tanpa Fas</div>
<div class="t" style="left:1515px;top:871.22px;width:62px;font-size:12.5px;line-height:12.5px;color:#000;letter-spacing:0.9427490234375px;padding-left:1px;box-sizing:border-box;">litas</div>
<svg class="s" style="left:485px;top:866px;" width="7" height="7" viewBox="0 0 7 7"><path d="M0 0 L6 0 L0 6 Z" fill="#1b7a2e"/></svg>
<svg class="s" style="left:976px;top:866px;" width="7" height="7" viewBox="0 0 7 7"><path d="M0 0 L6 0 L0 6 Z" fill="#1b7a2e"/></svg>
<div class="t" style="left:25px;top:891.22px;width:120px;font-size:12.5px;line-height:12.5px;color:#000;letter-spacing:0.938818359375px;padding-left:3px;box-sizing:border-box;overflow:hidden;">November-P1</div>
<div class="t" style="left:145px;top:891.22px;width:81px;font-size:12.5px;line-height:12.5px;color:#000;text-align:right;padding-right:2px;box-sizing:border-box;overflow:hidden;">1</div>
<div class="t" style="left:226px;top:891.22px;width:135px;font-size:12.5px;line-height:12.5px;color:#000;letter-spacing:0.7132975260416666px;padding-left:3px;box-sizing:border-box;overflow:hidden;">November 2025</div>
<div class="t" style="left:361px;top:891.22px;width:123px;font-size:12.5px;line-height:12.5px;color:#000;letter-spacing:-0.0279541015625px;padding-left:3px;box-sizing:border-box;overflow:hidden;">25098K8BS</div>
<div class="t" style="left:484px;top:891.22px;width:246px;font-size:12.5px;line-height:12.5px;color:#000;letter-spacing:0.05038597470238095px;padding-left:3px;box-sizing:border-box;overflow:hidden;">0508615499077000000000</div>
<div class="t" style="left:730px;top:891.22px;width:88px;font-size:12.5px;line-height:12.5px;color:#000;letter-spacing:0.05071149553571429px;padding-left:3px;box-sizing:border-box;overflow:hidden;">Pasal 21</div>
<div class="t" style="left:818px;top:891.22px;width:157px;font-size:12.5px;line-height:12.5px;color:#000;letter-spacing:0.313934326171875px;padding-left:3px;box-sizing:border-box;overflow:hidden;">21-100-01</div>
<div class="t" style="left:975px;top:891.22px;width:77px;font-size:12.5px;line-height:12.5px;color:#000;padding-left:3px;box-sizing:border-box;overflow:hidden;">3271021302990</div>
<div class="t" style="left:1052px;top:891.22px;width:120px;font-size:12.5px;line-height:12.5px;color:#000;padding-left:3px;box-sizing:border-box;overflow:hidden;">HERMANSYAH SONJAYA</div>
<div class="t" style="left:1172px;top:891.22px;width:165px;font-size:12.5px;line-height:12.5px;color:#000;text-align:right;padding-right:2px;box-sizing:border-box;overflow:hidden;">2505794</div>
<div class="t" style="left:1337px;top:891.22px;width:112px;font-size:12.5px;line-height:12.5px;color:#000;text-align:right;padding-right:2px;box-sizing:border-box;overflow:hidden;">0</div>
<div class="t" style="left:1449px;top:891.22px;width:128px;font-size:12.5px;line-height:12.5px;color:#000;letter-spacing:-0.03167724609375px;padding-left:3px;box-sizing:border-box;">Tanpa Fas</div>
<div class="t" style="left:1515px;top:891.22px;width:62px;font-size:12.5px;line-height:12.5px;color:#000;letter-spacing:0.9427490234375px;padding-left:1px;box-sizing:border-box;">litas</div>
<svg class="s" style="left:485px;top:886px;" width="7" height="7" viewBox="0 0 7 7"><path d="M0 0 L6 0 L0 6 Z" fill="#1b7a2e"/></svg>
<svg class="s" style="left:976px;top:886px;" width="7" height="7" viewBox="0 0 7 7"><path d="M0 0 L6 0 L0 6 Z" fill="#1b7a2e"/></svg>
<div class="t" style="left:25px;top:911.22px;width:120px;font-size:12.5px;line-height:12.5px;color:#000;letter-spacing:0.938818359375px;padding-left:3px;box-sizing:border-box;overflow:hidden;">November-P1</div>
<div class="t" style="left:145px;top:911.22px;width:81px;font-size:12.5px;line-height:12.5px;color:#000;text-align:right;padding-right:2px;box-sizing:border-box;overflow:hidden;">1</div>
<div class="t" style="left:226px;top:911.22px;width:135px;font-size:12.5px;line-height:12.5px;color:#000;letter-spacing:0.7132975260416666px;padding-left:3px;box-sizing:border-box;overflow:hidden;">November 2025</div>
<div class="t" style="left:361px;top:911.22px;width:123px;font-size:12.5px;line-height:12.5px;color:#000;letter-spacing:0.059783935546875px;padding-left:3px;box-sizing:border-box;overflow:hidden;">25098K8BT</div>
<div class="t" style="left:484px;top:911.22px;width:246px;font-size:12.5px;line-height:12.5px;color:#000;letter-spacing:0.05038597470238095px;padding-left:3px;box-sizing:border-box;overflow:hidden;">0508615499077000000000</div>
<div class="t" style="left:730px;top:911.22px;width:88px;font-size:12.5px;line-height:12.5px;color:#000;letter-spacing:0.05071149553571429px;padding-left:3px;box-sizing:border-box;overflow:hidden;">Pasal 21</div>
<div class="t" style="left:818px;top:911.22px;width:157px;font-size:12.5px;line-height:12.5px;color:#000;letter-spacing:0.313934326171875px;padding-left:3px;box-sizing:border-box;overflow:hidden;">21-100-01</div>
<div class="t" style="left:975px;top:911.22px;width:77px;font-size:12.5px;line-height:12.5px;color:#000;padding-left:3px;box-sizing:border-box;overflow:hidden;">3214021109890</div>
<div class="t" style="left:1052px;top:911.22px;width:120px;font-size:12.5px;line-height:12.5px;color:#000;padding-left:3px;box-sizing:border-box;overflow:hidden;">RIDWAN FAUZI</div>
<div class="t" style="left:1172px;top:911.22px;width:165px;font-size:12.5px;line-height:12.5px;color:#000;text-align:right;padding-right:2px;box-sizing:border-box;overflow:hidden;">5600568</div>
<div class="t" style="left:1337px;top:911.22px;width:112px;font-size:12.5px;line-height:12.5px;color:#000;text-align:right;padding-right:2px;box-sizing:border-box;overflow:hidden;">14001</div>
<div class="t" style="left:1449px;top:911.22px;width:128px;font-size:12.5px;line-height:12.5px;color:#000;letter-spacing:-0.03167724609375px;padding-left:3px;box-sizing:border-box;">Tanpa Fas</div>
<div class="t" style="left:1515px;top:911.22px;width:62px;font-size:12.5px;line-height:12.5px;color:#000;letter-spacing:0.9427490234375px;padding-left:1px;box-sizing:border-box;">litas</div>
<svg class="s" style="left:485px;top:906px;" width="7" height="7" viewBox="0 0 7 7"><path d="M0 0 L6 0 L0 6 Z" fill="#1b7a2e"/></svg>
<svg class="s" style="left:976px;top:906px;" width="7" height="7" viewBox="0 0 7 7"><path d="M0 0 L6 0 L0 6 Z" fill="#1b7a2e"/></svg>
<div class="t" style="left:25px;top:931.22px;width:120px;font-size:12.5px;line-height:12.5px;color:#000;letter-spacing:0.938818359375px;padding-left:3px;box-sizing:border-box;overflow:hidden;">November-P1</div>
<div class="t" style="left:145px;top:931.22px;width:81px;font-size:12.5px;line-height:12.5px;color:#000;text-align:right;padding-right:2px;box-sizing:border-box;overflow:hidden;">1</div>
<div class="t" style="left:226px;top:931.22px;width:135px;font-size:12.5px;line-height:12.5px;color:#000;letter-spacing:0.7132975260416666px;padding-left:3px;box-sizing:border-box;overflow:hidden;">November 2025</div>
<div class="t" style="left:361px;top:931.22px;width:123px;font-size:12.5px;line-height:12.5px;color:#000;letter-spacing:-0.0279541015625px;padding-left:3px;box-sizing:border-box;overflow:hidden;">25098K8BV</div>
<div class="t" style="left:484px;top:931.22px;width:246px;font-size:12.5px;line-height:12.5px;color:#000;letter-spacing:0.05038597470238095px;padding-left:3px;box-sizing:border-box;overflow:hidden;">0508615499077000000000</div>
<div class="t" style="left:730px;top:931.22px;width:88px;font-size:12.5px;line-height:12.5px;color:#000;letter-spacing:0.05071149553571429px;padding-left:3px;box-sizing:border-box;overflow:hidden;">Pasal 21</div>
<div class="t" style="left:818px;top:931.22px;width:157px;font-size:12.5px;line-height:12.5px;color:#000;letter-spacing:0.313934326171875px;padding-left:3px;box-sizing:border-box;overflow:hidden;">21-100-01</div>
<div class="t" style="left:975px;top:931.22px;width:77px;font-size:12.5px;line-height:12.5px;color:#000;padding-left:3px;box-sizing:border-box;overflow:hidden;">3171071902990</div>
<div class="t" style="left:1052px;top:931.22px;width:120px;font-size:12.5px;line-height:12.5px;color:#000;padding-left:3px;box-sizing:border-box;overflow:hidden;">FAJAR HIDAYAT</div>
<div class="t" style="left:1172px;top:931.22px;width:165px;font-size:12.5px;line-height:12.5px;color:#000;text-align:right;padding-right:2px;box-sizing:border-box;overflow:hidden;">5425866</div>
<div class="t" style="left:1337px;top:931.22px;width:112px;font-size:12.5px;line-height:12.5px;color:#000;text-align:right;padding-right:2px;box-sizing:border-box;overflow:hidden;">0</div>
<div class="t" style="left:1449px;top:931.22px;width:128px;font-size:12.5px;line-height:12.5px;color:#000;letter-spacing:-0.03167724609375px;padding-left:3px;box-sizing:border-box;">Tanpa Fas</div>
<div class="t" style="left:1515px;top:931.22px;width:62px;font-size:12.5px;line-height:12.5px;color:#000;letter-spacing:0.9427490234375px;padding-left:1px;box-sizing:border-box;">litas</div>
<svg class="s" style="left:485px;top:926px;" width="7" height="7" viewBox="0 0 7 7"><path d="M0 0 L6 0 L0 6 Z" fill="#1b7a2e"/></svg>
<svg class="s" style="left:976px;top:926px;" width="7" height="7" viewBox="0 0 7 7"><path d="M0 0 L6 0 L0 6 Z" fill="#1b7a2e"/></svg>
<div class="t" style="left:25px;top:951.22px;width:120px;font-size:12.5px;line-height:12.5px;color:#000;letter-spacing:0.938818359375px;padding-left:3px;box-sizing:border-box;overflow:hidden;">November-P1</div>
<div class="t" style="left:145px;top:951.22px;width:81px;font-size:12.5px;line-height:12.5px;color:#000;text-align:right;padding-right:2px;box-sizing:border-box;overflow:hidden;">1</div>
<div class="t" style="left:226px;top:951.22px;width:135px;font-size:12.5px;line-height:12.5px;color:#000;letter-spacing:0.7132975260416666px;padding-left:3px;box-sizing:border-box;overflow:hidden;">November 2025</div>
<div class="t" style="left:361px;top:951.22px;width:123px;font-size:12.5px;line-height:12.5px;color:#000;letter-spacing:-0.460540771484375px;padding-left:3px;box-sizing:border-box;overflow:hidden;">25098K8BW</div>
<div class="t" style="left:484px;top:951.22px;width:246px;font-size:12.5px;line-height:12.5px;color:#000;letter-spacing:0.05038597470238095px;padding-left:3px;box-sizing:border-box;overflow:hidden;">0508615499077000000000</div>
<div class="t" style="left:730px;top:951.22px;width:88px;font-size:12.5px;line-height:12.5px;color:#000;letter-spacing:0.05071149553571429px;padding-left:3px;box-sizing:border-box;overflow:hidden;">Pasal 21</div>
<div class="t" style="left:818px;top:951.22px;width:157px;font-size:12.5px;line-height:12.5px;color:#000;letter-spacing:0.313934326171875px;padding-left:3px;box-sizing:border-box;overflow:hidden;">21-100-01</div>
<div class="t" style="left:975px;top:951.22px;width:77px;font-size:12.5px;line-height:12.5px;color:#000;padding-left:3px;box-sizing:border-box;overflow:hidden;">3175056702990</div>
<div class="t" style="left:1052px;top:951.22px;width:120px;font-size:12.5px;line-height:12.5px;color:#000;padding-left:3px;box-sizing:border-box;overflow:hidden;">DINDA RADIGMA SOFIA</div>
<div class="t" style="left:1172px;top:951.22px;width:165px;font-size:12.5px;line-height:12.5px;color:#000;text-align:right;padding-right:2px;box-sizing:border-box;overflow:hidden;">5228466</div>
<div class="t" style="left:1337px;top:951.22px;width:112px;font-size:12.5px;line-height:12.5px;color:#000;text-align:right;padding-right:2px;box-sizing:border-box;overflow:hidden;">0</div>
<div class="t" style="left:1449px;top:951.22px;width:128px;font-size:12.5px;line-height:12.5px;color:#000;letter-spacing:-0.03167724609375px;padding-left:3px;box-sizing:border-box;">Tanpa Fas</div>
<div class="t" style="left:1515px;top:951.22px;width:62px;font-size:12.5px;line-height:12.5px;color:#000;letter-spacing:0.9427490234375px;padding-left:1px;box-sizing:border-box;">litas</div>
<svg class="s" style="left:485px;top:946px;" width="7" height="7" viewBox="0 0 7 7"><path d="M0 0 L6 0 L0 6 Z" fill="#1b7a2e"/></svg>
<svg class="s" style="left:976px;top:946px;" width="7" height="7" viewBox="0 0 7 7"><path d="M0 0 L6 0 L0 6 Z" fill="#1b7a2e"/></svg>
<div class="t" style="left:25px;top:971.22px;width:120px;font-size:12.5px;line-height:12.5px;color:#000;letter-spacing:0.938818359375px;padding-left:3px;box-sizing:border-box;overflow:hidden;">November-P1</div>
<div class="t" style="left:145px;top:971.22px;width:81px;font-size:12.5px;line-height:12.5px;color:#000;text-align:right;padding-right:2px;box-sizing:border-box;overflow:hidden;">1</div>
<div class="t" style="left:226px;top:971.22px;width:135px;font-size:12.5px;line-height:12.5px;color:#000;letter-spacing:0.7132975260416666px;padding-left:3px;box-sizing:border-box;overflow:hidden;">November 2025</div>
<div class="t" style="left:361px;top:971.22px;width:123px;font-size:12.5px;line-height:12.5px;color:#000;letter-spacing:-0.0279541015625px;padding-left:3px;box-sizing:border-box;overflow:hidden;">25098K8BX</div>
<div class="t" style="left:484px;top:971.22px;width:246px;font-size:12.5px;line-height:12.5px;color:#000;letter-spacing:0.05038597470238095px;padding-left:3px;box-sizing:border-box;overflow:hidden;">0508615499077000000000</div>
<div class="t" style="left:730px;top:971.22px;width:88px;font-size:12.5px;line-height:12.5px;color:#000;letter-spacing:0.05071149553571429px;padding-left:3px;box-sizing:border-box;overflow:hidden;">Pasal 21</div>
<div class="t" style="left:818px;top:971.22px;width:157px;font-size:12.5px;line-height:12.5px;color:#000;letter-spacing:0.313934326171875px;padding-left:3px;box-sizing:border-box;overflow:hidden;">21-100-01</div>
<div class="t" style="left:975px;top:971.22px;width:77px;font-size:12.5px;line-height:12.5px;color:#000;padding-left:3px;box-sizing:border-box;overflow:hidden;">3201102805890</div>
<div class="t" style="left:1052px;top:971.22px;width:120px;font-size:12.5px;line-height:12.5px;color:#000;padding-left:3px;box-sizing:border-box;overflow:hidden;">DIAN CANDRA</div>
<div class="t" style="left:1172px;top:971.22px;width:165px;font-size:12.5px;line-height:12.5px;color:#000;text-align:right;padding-right:2px;box-sizing:border-box;overflow:hidden;">6059685</div>
<div class="t" style="left:1337px;top:971.22px;width:112px;font-size:12.5px;line-height:12.5px;color:#000;text-align:right;padding-right:2px;box-sizing:border-box;overflow:hidden;">0</div>
<div class="t" style="left:1449px;top:971.22px;width:128px;font-size:12.5px;line-height:12.5px;color:#000;letter-spacing:-0.03167724609375px;padding-left:3px;box-sizing:border-box;">Tanpa Fas</div>
<div class="t" style="left:1515px;top:971.22px;width:62px;font-size:12.5px;line-height:12.5px;color:#000;letter-spacing:0.9427490234375px;padding-left:1px;box-sizing:border-box;">litas</div>
<svg class="s" style="left:485px;top:966px;" width="7" height="7" viewBox="0 0 7 7"><path d="M0 0 L6 0 L0 6 Z" fill="#1b7a2e"/></svg>
<svg class="s" style="left:976px;top:966px;" width="7" height="7" viewBox="0 0 7 7"><path d="M0 0 L6 0 L0 6 Z" fill="#1b7a2e"/></svg>
<div class="r" style="left:483px;top:424px;width:1032px;height:2px;background:#1d7a45;"></div>
<div class="r" style="left:483px;top:424px;width:2px;height:554px;background:#1d7a45;"></div>
<div class="r" style="left:1513px;top:424px;width:2px;height:554px;background:#1d7a45;"></div>
<div class="r" style="left:451px;top:426px;width:20px;height:20px;background:#3a3a3a;"></div>
<svg class="s" style="left:451px;top:426px;" width="20" height="20" viewBox="0 0 20 20"><path d="M10 3 L17.5 17 L2.5 17 Z" fill="#e8a33a" stroke="#f6c870" stroke-width="1"/><rect x="9.3" y="7.5" width="1.4" height="5.5" fill="#6b3f0a"/><rect x="9.3" y="14" width="1.4" height="1.5" fill="#6b3f0a"/></svg>
<div class="r" style="left:1517px;top:954px;width:22px;height:21px;background:#ffffff;border:1px solid #c8c8c8;box-sizing:border-box;"></div>
<svg class="s" style="left:1520px;top:957px;" width="16" height="15" viewBox="0 0 16 15"><rect x="3.5" y="5.5" width="11" height="8" fill="none" stroke="#404040" stroke-width="1"/><rect x="5.5" y="8.5" width="7" height="3" fill="none" stroke="#404040" stroke-width="1"/><path d="M4 0.5 L1 5 H4 L2.5 9 L7 3.5 H4.5 L6 0.5 Z" fill="#f0a030"/></svg>
<svg class="s" style="left:1904px;top:263px;" width="11" height="9" viewBox="0 0 11 9"><path d="M5.5 1 L10 7.5 L1 7.5 Z" fill="#a0a0a0" stroke="#a0a0a0" stroke-width="0.8" stroke-linejoin="round"/></svg>
<div class="r" style="left:0px;top:978px;width:1920px;height:32px;background:#110d0b;"></div>
<svg class="s" style="left:27px;top:988px;" width="10" height="11" viewBox="0 0 10 11"><path d="M7.5 1 L2.5 5.5 L7.5 10" fill="none" stroke="#a0a0a0" stroke-width="1.2"/></svg>
<svg class="s" style="left:59px;top:988px;" width="10" height="11" viewBox="0 0 10 11"><path d="M2.5 1 L7.5 5.5 L2.5 10" fill="none" stroke="#d8d8d8" stroke-width="1.2"/></svg>
<div class="r" style="left:116px;top:982px;width:60px;height:24px;background:#f6b60f;border-radius:4px;"></div>
<div class="t" style="left:124.70px;top:987.27px;font-size:13.5px;line-height:13.5px;color:#2b2100;letter-spacing:-0.665px;">PPH 21</div>
<div class="r" style="left:180px;top:985px;width:1px;height:18px;background:#4a4a4a;"></div>
<div class="r" style="left:185px;top:978px;width:117px;height:28px;background:#ffffff;border-radius:0 0 6px 6px;"></div>
<div class="t" style="left:193.10px;top:984.57px;font-size:13.5px;line-height:13.5px;color:#262626;letter-spacing:0.246px;">Karyawan Tetap</div>
<div class="r" style="left:193px;top:1001px;width:101px;height:2px;background:#1e7145;"></div>
<div class="r" style="left:305px;top:985px;width:1px;height:18px;background:#4a4a4a;"></div>
<div class="t" style="left:320.20px;top:987.37px;font-size:13.5px;line-height:13.5px;color:#f0f0f0;letter-spacing:-0.001px;">A1-Karyawan Resign</div>
<div class="r" style="left:459px;top:985px;width:1px;height:18px;background:#4a4a4a;"></div>
<div class="t" style="left:475.60px;top:987.37px;font-size:13.5px;line-height:13.5px;color:#f0f0f0;letter-spacing:-0.036px;">Karyawan NIK Tidak Valid</div>
<div class="r" style="left:647px;top:985px;width:1px;height:18px;background:#4a4a4a;"></div>
<div class="t" style="left:660.40px;top:987.37px;font-size:13.5px;line-height:13.5px;color:#f0f0f0;letter-spacing:-1.129px;">PPN</div>
<div class="r" style="left:699px;top:985px;width:1px;height:18px;background:#4a4a4a;"></div>
<div class="t" style="left:712.00px;top:987.37px;font-size:13.5px;line-height:13.5px;color:#f0f0f0;letter-spacing:-0.012px;">A2</div>
<div class="r" style="left:741px;top:985px;width:1px;height:18px;background:#4a4a4a;"></div>
<div class="t" style="left:756.20px;top:987.37px;font-size:13.5px;line-height:13.5px;color:#f0f0f0;letter-spacing:-0.619px;">PREPAID PPH 23</div>
<div class="r" style="left:872px;top:985px;width:1px;height:18px;background:#4a4a4a;"></div>
<div class="r" style="left:893px;top:992px;width:3px;height:3px;background:#e8e8e8;"></div>
<div class="r" style="left:897.2px;top:992px;width:3px;height:3px;background:#e8e8e8;"></div>
<div class="r" style="left:901.4px;top:992px;width:3px;height:3px;background:#e8e8e8;"></div>
<div class="r" style="left:925px;top:993px;width:11px;height:1.3px;background:#e8e8e8;"></div>
<div class="r" style="left:929.8px;top:988px;width:1.3px;height:11px;background:#e8e8e8;"></div>
<div class="r" style="left:962px;top:990px;width:2.2px;height:2.2px;background:#e8e8e8;border-radius:1px;"></div>
<div class="r" style="left:962px;top:994.5px;width:2.2px;height:2.2px;background:#e8e8e8;border-radius:1px;"></div>
<div class="r" style="left:962px;top:999px;width:2.2px;height:2.2px;background:#e8e8e8;border-radius:1px;"></div>
<svg class="s" style="left:983px;top:989px;" width="9" height="9" viewBox="0 0 9 9"><path d="M8.5 0.5 L1 4.5 L8.5 8.5 Z" fill="#9c9c9c"/></svg>
<div class="r" style="left:996px;top:989px;width:600px;height:9.5px;background:#a8a8a8;border-radius:4.5px;"></div>
<div class="r" style="left:0px;top:1010px;width:1920px;height:22px;background:#131110;"></div>
<div class="r" style="left:0px;top:1010px;width:1920px;height:1px;background:#2b2725;"></div>
<div class="t" style="left:11.20px;top:1015.84px;font-size:12px;line-height:12px;color:#e8e8e8;letter-spacing:-1.072px;">Ready</div>
<div class="t" style="left:58.50px;top:1015.84px;font-size:12px;line-height:12px;color:#e8e8e8;letter-spacing:-0.516px;">Calculate</div>
<svg class="s" style="left:124px;top:1013px;" width="16" height="16" viewBox="0 0 16 16"><circle cx="7" cy="2.8" r="2" fill="none" stroke="#d8d8d8" stroke-width="1"/><path d="M1 6 L7 7.2 L13 6 M7 7.2 V10 L4 14.5 M7 10 L9 12.5" fill="none" stroke="#d8d8d8" stroke-width="1.1"/><path d="M10 11 L14.5 15.5 M14.5 11 L10 15.5" stroke="#d8d8d8" stroke-width="1.1"/></svg>
<div class="t" style="left:143.40px;top:1014.84px;font-size:12px;line-height:12px;color:#f2f2f2;font-weight:bold;letter-spacing:-0.712px;">Accessibility: Investigate</div>
<div class="t" style="left:1321.10px;top:1015.74px;font-size:12px;line-height:12px;color:#e8e8e8;letter-spacing:-0.602px;">Average: 2316719,729</div>
<div class="t" style="left:1447.20px;top:1015.74px;font-size:12px;line-height:12px;color:#e8e8e8;letter-spacing:-0.368px;">Count: 384</div>
<div class="t" style="left:1519.30px;top:1015.74px;font-size:12px;line-height:12px;color:#e8e8e8;letter-spacing:-0.793px;">Sum: 222405094</div>
<div class="r" style="left:1620px;top:1011px;width:40px;height:21px;background:#1a1817;"></div>
<svg class="s" style="left:1632px;top:1016px;" width="15" height="12" viewBox="0 0 15 12"><path d="M0.6 0.6 H14.4 V11.4 H0.6 Z M0.6 4.2 H14.4 M0.6 7.8 H14.4 M5.2 0.6 V11.4 M9.8 0.6 V11.4" fill="none" stroke="#e8e8e8" stroke-width="1.1"/></svg>
<svg class="s" style="left:1672px;top:1016px;" width="15" height="12" viewBox="0 0 15 12"><path d="M0.6 0.6 H14.4 V11.4 H0.6 Z M3.5 3 H11.5 M3.5 5.5 H11.5 M3.5 8 H11.5" fill="none" stroke="#d8d8d8" stroke-width="1.1"/></svg>
<svg class="s" style="left:1712px;top:1016px;" width="15" height="12" viewBox="0 0 15 12"><path d="M0.6 0 V11.4 H14.4 V0 M6 0 V5 H11 V0" fill="none" stroke="#d8d8d8" stroke-width="1.1"/></svg>
<div class="r" style="left:1746px;top:1021px;width:8px;height:1.2px;background:#d8d8d8;"></div>
<div class="r" style="left:1759px;top:1021px;width:100px;height:1px;background:#a8a8a8;"></div>
<div class="r" style="left:1807px;top:1016px;width:5px;height:10px;background:#c8c8c8;"></div>
<div class="r" style="left:1864px;top:1021px;width:8px;height:1.2px;background:#d8d8d8;"></div>
<div class="r" style="left:1867.4px;top:1017px;width:1.2px;height:9px;background:#d8d8d8;"></div>
<div class="t" style="left:1885.30px;top:1015.24px;font-size:12px;line-height:12px;color:#e8e8e8;letter-spacing:-1.330px;">100%</div>
<div class="r" style="left:0;top:1032px;width:1920px;height:48px;background:linear-gradient(90deg,#1f1a17 0%,#1e1915 30%,#221b17 48%,#201c1b 62%,#1b1d21 80%,#1c1d20 88%,#2a2219 100%);"></div>
<div class="r" style="left:0px;top:1032px;width:1920px;height:1px;background:#33302e;"></div>
<svg class="s" style="left:20px;top:1038px;" width="28" height="30" viewBox="0 0 28 30"><circle cx="8" cy="16" r="6.5" fill="#f3a62b"/><path d="M4 29 C0 29 0.5 23 4.5 23 C5 18.5 11 17.5 13.5 21 C17 20 21 22.5 20.5 25.5 C23 26 23 29 20 29 Z" fill="#c9d9ef"/><circle cx="18" cy="8" r="7.5" fill="#f5a3ae"/><text x="14.5" y="12" font-size="10.5" fill="#1a1a1a" font-family="Liberation Sans">6</text></svg>
<div class="t" style="left:50.60px;top:1042.34px;font-size:12px;line-height:12px;color:#f0f0f0;letter-spacing:-0.804px;">30°C</div>
<div class="t" style="left:50.60px;top:1058.54px;font-size:12px;line-height:12px;color:#d0d0d0;letter-spacing:-0.120px;">Sebagian cerah</div>
<svg class="s" style="left:638px;top:1044px;" width="25" height="25" viewBox="0 0 25 25"><defs><linearGradient id="wg" x1="0" y1="0" x2="1" y2="1"><stop offset="0" stop-color="#7fd8ff"/><stop offset="1" stop-color="#1e90f0"/></linearGradient></defs><rect x="0.5" y="0.5" width="11.3" height="11.3" fill="url(#wg)"/><rect x="12.8" y="0.5" width="11.3" height="11.3" fill="url(#wg)"/><rect x="0.5" y="12.8" width="11.3" height="11.3" fill="url(#wg)"/><rect x="12.8" y="12.8" width="11.3" height="11.3" fill="url(#wg)"/></svg>
<div class="r" style="left:675px;top:1039.5px;width:219px;height:32.5px;border-radius:16px;background:linear-gradient(90deg,#3a3634 0%,#3f3a37 60%,#4a3d33 100%);box-shadow:inset 0 0 0 1px rgba(255,255,255,0.06);"></div>
<svg class="s" style="left:686px;top:1049px;" width="16" height="16" viewBox="0 0 16 16"><circle cx="7" cy="6.5" r="5.5" fill="none" stroke="#e8e8e8" stroke-width="1.6"/><path d="M10.8 10.3 L15 14.8" stroke="#e8e8e8" stroke-width="1.8"/></svg>
<div class="t" style="left:712.20px;top:1049.77px;font-size:13.5px;line-height:13.5px;color:#dcdcdc;letter-spacing:-0.495px;">Search</div>
<svg class="s" style="left:843px;top:1040px;" width="48" height="30" viewBox="0 0 48 30"><ellipse cx="24" cy="25.5" rx="21.5" ry="3" fill="#dcc8a2"/><path d="M5.5 8 L10 4 L13 5 L18.5 10 L35 10.5 C38 11 38.5 14 37.5 19 L36 20 L16 20.5 L13.5 14 L8 12 Z" fill="#e6e6f2"/><path d="M12 6 L14 10.5 M15 7.5 L17 11 M19 10 L19.5 20 M22.5 10 L23 20 M26 10.2 L26.5 20 M29.5 10.3 L30 20 M33 10.5 L33.5 19.5 M36 12 L36 19" stroke="#352f60" stroke-width="1.5"/><path d="M17.5 19.5 V27 M20.5 19.5 V27 M30 19.5 V27 M33.5 19.5 V27" stroke="#d8d8e8" stroke-width="2"/><path d="M17.5 22 V24 M30 22 V24" stroke="#352f60" stroke-width="2"/></svg>
<svg class="s" style="left:906px;top:1044px;" width="26" height="24" viewBox="0 0 26 24"><rect x="1" y="8" width="14" height="14" fill="#8a8a8a"/><rect x="9" y="1" width="15" height="14" fill="#efefef"/></svg>
<svg class="s" style="left:950px;top:1043px;" width="26" height="24" viewBox="0 0 26 24"><path d="M1 3 H10 L12 5 H25 V22 H1 Z" fill="#e8a82a"/><rect x="1" y="8" width="24" height="14" rx="1" fill="#ffd257"/><rect x="7" y="15" width="12" height="7" fill="#1f7be0"/></svg>
<div class="r" style="left:959px;top:1073px;width:7px;height:2.5px;background:#a0a0a0;border-radius:1px;"></div>
<svg class="s" style="left:994px;top:1043px;" width="25" height="25" viewBox="0 0 25 25"><circle cx="12.5" cy="12.5" r="11.5" fill="#1b7fd8"/><path d="M2 14 C2 5 17 1 23 10 C22 15 17 15 13.5 14 C10 13 8 16 10 19 C12 22.5 18 23 22 20 C18 26 3 25 2 14 Z" fill="#3ccf8e"/><circle cx="14" cy="16" r="4.3" fill="#0f5bb5"/></svg>
<svg class="s" style="left:1038px;top:1043px;" width="25" height="25" viewBox="0 0 25 25"><path d="M8 6 V3.5 A1.5 1.5 0 0 1 9.5 2 H15.5 A1.5 1.5 0 0 1 17 3.5 V6" fill="none" stroke="#2fa0e8" stroke-width="1.8"/><rect x="2" y="6" width="21" height="17" rx="3" fill="#f4f4f4"/><rect x="8" y="10" width="4" height="4" fill="#f25022"/><rect x="13" y="10" width="4" height="4" fill="#7fba00"/><rect x="8" y="15" width="4" height="4" fill="#00a4ef"/><rect x="13" y="15" width="4" height="4" fill="#ffb900"/></svg>
<svg class="s" style="left:1081px;top:1042px;" width="26" height="26" viewBox="0 0 26 26"><path d="M13 2 A11 11 0 1 1 6.5 21.8 L1.5 23.5 L3.5 18.5 A11 11 0 0 1 13 2 Z" fill="none" stroke="#25d366" stroke-width="2.2"/><path d="M9 8 C8 9 8 11 10 14 C12 17 15 18.5 17 18 L18 16 L15.5 14.5 L14 15.5 C12.5 15 11 13.5 10.5 12 L11.5 10.5 L10 8 Z" fill="#25d366"/></svg>
<svg class="s" style="left:1126px;top:1043px;" width="25" height="25" viewBox="0 0 25 25"><circle cx="12.5" cy="12.5" r="11.5" fill="#ea4335"/><path d="M12.5 12.5 L24 12.5 A11.5 11.5 0 0 1 6.75 22.46 Z" fill="#fbbc04"/><path d="M12.5 12.5 L6.75 22.46 A11.5 11.5 0 0 1 2.54 6.75 Z" fill="#34a853"/><circle cx="12.5" cy="12.5" r="5.5" fill="#fff"/><circle cx="12.5" cy="12.5" r="4.2" fill="#4285f4"/></svg>
<div class="r" style="left:1135px;top:1073px;width:7px;height:2.5px;background:#a0a0a0;border-radius:1px;"></div>
<svg class="s" style="left:1170px;top:1043px;" width="25" height="25" viewBox="0 0 25 25"><circle cx="12.5" cy="12.5" r="11.5" fill="#e8364f"/><path d="M7.5 19 L12.5 6 L17.5 19" fill="none" stroke="#fff" stroke-width="2.2"/></svg>
<svg class="s" style="left:1214px;top:1043px;" width="25" height="25" viewBox="0 0 25 25"><rect x="0" y="0" width="25" height="25" fill="#ef443b"/><path d="M5 12.5 L9.5 8 L14 12.5 L9.5 17 Z M12.5 8 L17 12.5 L12.5 17 L14.5 17 L19 12.5 L14.5 8 Z" fill="#fff"/></svg>
<div class="r" style="left:1252px;top:1036px;width:38px;height:40px;background:#2a2827;border-radius:5px;box-shadow:inset 0 0 0 1px #3a3836;"></div>
<svg class="s" style="left:1258px;top:1043px;" width="26" height="25" viewBox="0 0 26 25"><rect x="6" y="1" width="18" height="22" rx="2" fill="#21a366"/><rect x="6" y="1" width="18" height="7" rx="2" fill="#33c481"/><rect x="6" y="16" width="18" height="7" rx="2" fill="#107c41"/><rect x="1" y="8" width="11" height="11" rx="2" fill="#185c37"/><path d="M4 10.5 L9 16.5 M9 10.5 L4 16.5" stroke="#fff" stroke-width="1.3"/></svg>
<div class="r" style="left:1263px;top:1073px;width:16px;height:3px;background:#4cc2ff;border-radius:1.5px;"></div>
<svg class="s" style="left:1696px;top:1052px;" width="12" height="8" viewBox="0 0 12 8"><path d="M1 7 L6 1.5 L11 7" fill="none" stroke="#eaeaea" stroke-width="1.5"/></svg>
<svg class="s" style="left:1725px;top:1049px;" width="18" height="15" viewBox="0 0 18 15"><path d="M4 13 C0.5 13 0.5 7.5 4 7.5 C4.5 3.5 9.5 2.5 11.5 5.5 C14.5 4.5 17.5 6.5 17 9.5 C18.5 10 18.5 13 16 13 Z" fill="#8c8c8c"/><path d="M2 0.5 L16 14.5" stroke="#eaeaea" stroke-width="1.3"/></svg>
<svg class="s" style="left:1757px;top:1048px;" width="18" height="17" viewBox="0 0 18 17"><rect x="1" y="1.5" width="11" height="9" fill="none" stroke="#eaeaea" stroke-width="1.2"/><path d="M3.5 15.5 H9.5 M6.5 10.5 V15.5" stroke="#eaeaea" stroke-width="1.2"/><rect x="12" y="0.6" width="4.5" height="6" fill="none" stroke="#eaeaea" stroke-width="1.1"/><path d="M14.2 6.6 V16" stroke="#eaeaea" stroke-width="1.1"/></svg>
<svg class="s" style="left:1781px;top:1049px;" width="18" height="15" viewBox="0 0 18 15"><path d="M1 5 H4 L8 1.5 V13.5 L4 10 H1 Z" fill="none" stroke="#eaeaea" stroke-width="1.2"/><path d="M10.5 5 C11.8 6.3 11.8 8.7 10.5 10 M12.8 3 C15.3 5.5 15.3 9.5 12.8 12 M15 1 C18.5 4.5 18.5 10.5 15 14" fill="none" stroke="#eaeaea" stroke-width="1.2"/></svg>
<div class="t" style="left:1276.42px;width:600px;text-align:right;top:1041.74px;font-size:12px;line-height:12px;color:#f0f0f0;letter-spacing:-0.482px;">15:48</div>
<div class="t" style="left:1277.04px;width:600px;text-align:right;top:1057.34px;font-size:12px;line-height:12px;color:#f0f0f0;letter-spacing:0.138px;">31/01/2026</div>
<svg class="s" style="left:1885px;top:1048px;" width="15" height="16" viewBox="0 0 15 16"><path d="M2.5 11.5 V6.5 A5 5 0 0 1 12.5 6.5 V11.5 L14 13 H1 Z M5.5 13.5 A2 2 0 0 0 9.5 13.5" fill="none" stroke="#eaeaea" stroke-width="1.2"/></svg>
<div class="r" style="left:1549px;top:814px;width:361px;height:196px;background:#202124;border-radius:8px 8px 0 0;box-shadow:0 0 4px rgba(0,0,0,0.45);"></div>
<svg class="s" style="left:1565px;top:829px;" width="18" height="15" viewBox="0 0 18 15"><path d="M6 0.5 H12 L17.5 9.5 H11.5 Z" fill="#fbbc04"/><path d="M6 0.5 L0.5 9.5 L3.5 14.5 L9 5.5 Z" fill="#0f9d58"/><path d="M3.5 14.5 H14.5 L17.5 9.5 H6.5 Z" fill="#4285f4"/></svg>
<div class="t" style="left:1597.40px;top:830.20px;font-size:13px;line-height:13px;color:#e8eaed;letter-spacing:-0.661px;">Google Drive</div>
<div class="t" style="left:1565.30px;top:861.47px;font-size:13.5px;line-height:13.5px;color:#f1f3f4;font-weight:bold;letter-spacing:0.392px;">Items removed</div>
<div class="t" style="left:1565.30px;top:888.59px;font-size:12.3px;line-height:12.3px;color:#e8eaed;letter-spacing:0.133px;">Items removed from TMI on your computer have also been</div>
<div class="t" style="left:1565.30px;top:904.39px;font-size:12.3px;line-height:12.3px;color:#e8eaed;letter-spacing:0.124px;">removed from TMI on Google Drive. Items in the trash will</div>
<div class="t" style="left:1565.30px;top:920.29px;font-size:12.3px;line-height:12.3px;color:#e8eaed;letter-spacing:0.106px;">be deleted forever after 30 days.</div>
<div class="r" style="left:1565px;top:947px;width:18px;height:18px;background:transparent;border:2px solid #9aa0a6;border-radius:2px;box-sizing:border-box;"></div>
<div class="t" style="left:1590.50px;top:949.42px;font-size:12.5px;line-height:12.5px;color:#e8eaed;letter-spacing:-0.106px;">Don’t show this again</div>
<div class="r" style="left:1565px;top:980px;width:64px;height:24px;background:#8ab4f8;border-radius:4px;"></div>
<div class="t" style="left:1586.90px;top:984.27px;font-size:13.5px;line-height:13.5px;color:#1f3760;letter-spacing:0.895px;">OK</div>
<div class="t" style="left:1653.20px;top:984.27px;font-size:13.5px;line-height:13.5px;color:#8ab4f8;font-weight:bold;letter-spacing:0.268px;">Open trash folder</div>
<div class="r" style="left:1911px;top:876px;width:4px;height:56px;background:#8c8c8c;border-radius:2px;"></div>
<svg class="s" style="left:1908px;top:968px;" width="9" height="7" viewBox="0 0 9 7"><path d="M1 1 L8 1 L4.5 6 Z" fill="#9a9a9a"/></svg>
</body></html>
